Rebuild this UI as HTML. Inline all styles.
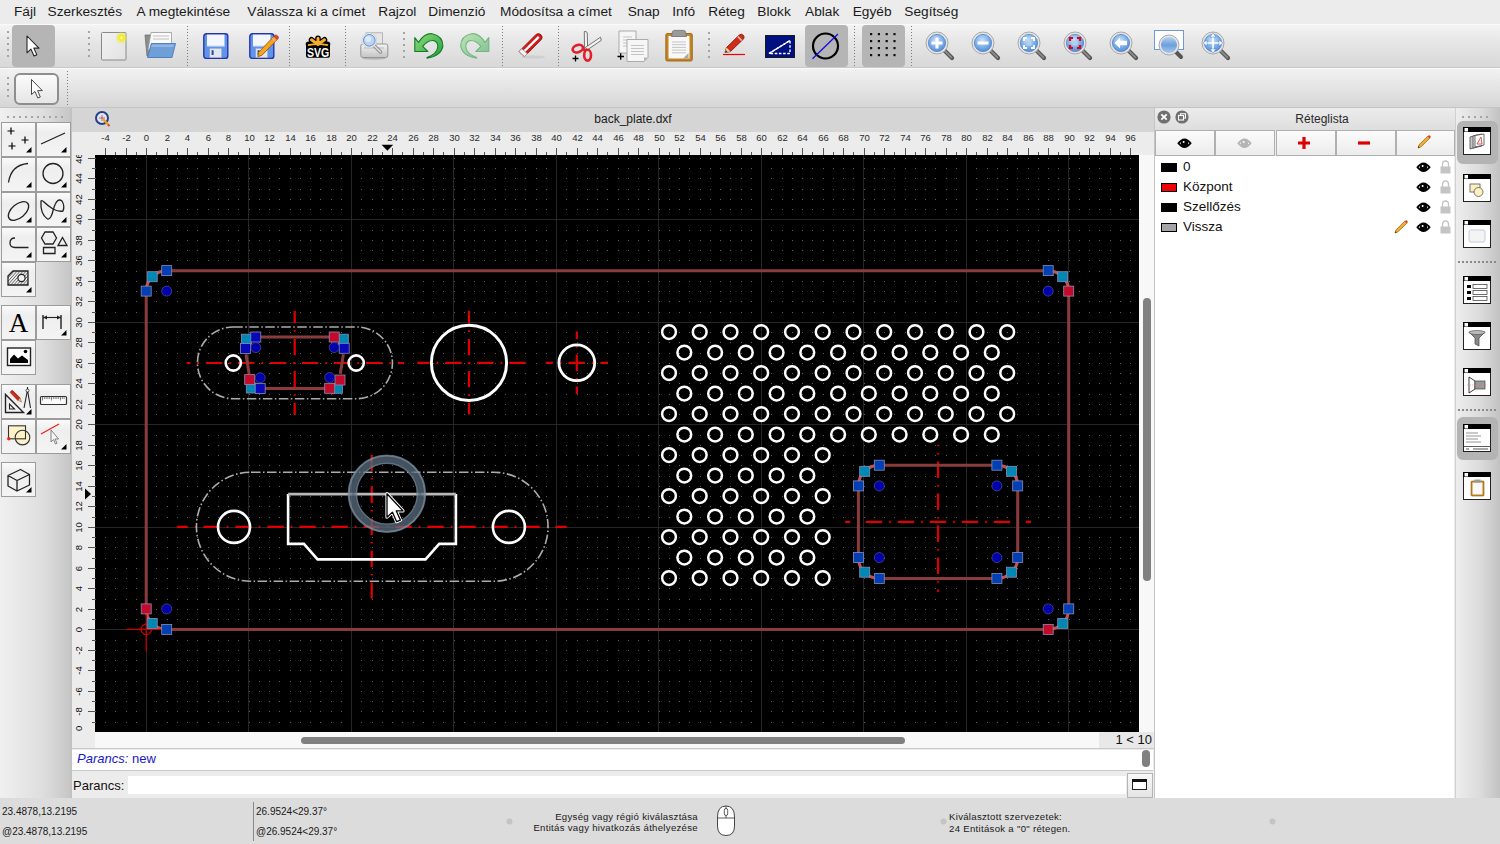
<!DOCTYPE html><html><head><meta charset="utf-8"><style>
html,body{margin:0;padding:0;width:1500px;height:844px;overflow:hidden;background:#ececec;font-family:"Liberation Sans", sans-serif;}
div{box-sizing:border-box}
.abs{position:absolute}
</style></head><body>
<div class="abs" style="left:0;top:0;width:1500px;height:24px;background:#ececec"></div>
<div style="position:absolute;top:4px;font-size:13.7px;line-height:16px;color:#1a1a1a;white-space:nowrap;left:14px;">Fájl</div>
<div style="position:absolute;top:4px;font-size:13.7px;line-height:16px;color:#1a1a1a;white-space:nowrap;left:47.5px;">Szerkesztés</div>
<div style="position:absolute;top:4px;font-size:13.7px;line-height:16px;color:#1a1a1a;white-space:nowrap;left:136.5px;">A megtekintése</div>
<div style="position:absolute;top:4px;font-size:13.7px;line-height:16px;color:#1a1a1a;white-space:nowrap;left:247.3px;">Válassza ki a címet</div>
<div style="position:absolute;top:4px;font-size:13.7px;line-height:16px;color:#1a1a1a;white-space:nowrap;left:378.3px;">Rajzol</div>
<div style="position:absolute;top:4px;font-size:13.7px;line-height:16px;color:#1a1a1a;white-space:nowrap;left:428.3px;">Dimenzió</div>
<div style="position:absolute;top:4px;font-size:13.7px;line-height:16px;color:#1a1a1a;white-space:nowrap;left:500px;">Módosítsa a címet</div>
<div style="position:absolute;top:4px;font-size:13.7px;line-height:16px;color:#1a1a1a;white-space:nowrap;left:627.7px;">Snap</div>
<div style="position:absolute;top:4px;font-size:13.7px;line-height:16px;color:#1a1a1a;white-space:nowrap;left:672.3px;">Infó</div>
<div style="position:absolute;top:4px;font-size:13.7px;line-height:16px;color:#1a1a1a;white-space:nowrap;left:708.3px;">Réteg</div>
<div style="position:absolute;top:4px;font-size:13.7px;line-height:16px;color:#1a1a1a;white-space:nowrap;left:757.3px;">Blokk</div>
<div style="position:absolute;top:4px;font-size:13.7px;line-height:16px;color:#1a1a1a;white-space:nowrap;left:805px;">Ablak</div>
<div style="position:absolute;top:4px;font-size:13.7px;line-height:16px;color:#1a1a1a;white-space:nowrap;left:852.7px;">Egyéb</div>
<div style="position:absolute;top:4px;font-size:13.7px;line-height:16px;color:#1a1a1a;white-space:nowrap;left:904.3px;">Segítség</div>
<div class="abs" style="left:0;top:24px;width:1500px;height:44px;background:linear-gradient(#f4f4f4,#e6e6e6 40%,#d8d8d8);border-top:1px solid #fafafa;border-bottom:1px solid #c8c8c8"></div>
<div class="abs" style="left:0;top:68px;width:1500px;height:40px;background:linear-gradient(#f2f2f2,#e4e4e4 50%,#d6d6d6);border-top:1px solid #fbfbfb;border-bottom:1px solid #c4c4c4"></div>
<svg style="position:absolute;left:7px;top:31px;overflow:visible" width="2" height="28" viewBox="0 0 2 28" ><rect x="0" y="0" width="2" height="2" fill="#a4a4a4"/><rect x="0" y="6" width="2" height="2" fill="#a4a4a4"/><rect x="0" y="12" width="2" height="2" fill="#a4a4a4"/><rect x="0" y="18" width="2" height="2" fill="#a4a4a4"/><rect x="0" y="24" width="2" height="2" fill="#a4a4a4"/></svg>
<div style="position:absolute;left:12px;top:25px;width:43px;height:42px;background:#b5b5b5;border-radius:4px"></div>
<svg style="position:absolute;left:27px;top:36px;overflow:visible" width="16" height="26" viewBox="0 0 16 26" ><g transform="scale(0.82)"><path d="M0 0V20.5L4.8 16L8.6 24.5L12 23L8.3 14.8H14.6Z" fill="#fff" stroke="#222" stroke-width="1.3" stroke-linejoin="round"/></g></svg>
<svg style="position:absolute;left:88px;top:31px;overflow:visible" width="2" height="28" viewBox="0 0 2 28" ><rect x="0" y="0" width="2" height="2" fill="#a4a4a4"/><rect x="0" y="6" width="2" height="2" fill="#a4a4a4"/><rect x="0" y="12" width="2" height="2" fill="#a4a4a4"/><rect x="0" y="18" width="2" height="2" fill="#a4a4a4"/><rect x="0" y="24" width="2" height="2" fill="#a4a4a4"/></svg>
<svg style="position:absolute;left:101px;top:32px;overflow:visible" width="26" height="29" viewBox="0 0 26 29" ><defs><linearGradient id="pg" x1="0" y1="0" x2="1" y2="1"><stop offset="0" stop-color="#f2f2f2"/><stop offset="1" stop-color="#e2e2e2"/></linearGradient><radialGradient id="glow"><stop offset="0" stop-color="#fff9b0"/><stop offset="0.35" stop-color="#f3ea2a"/><stop offset="1" stop-color="#f3ea2a" stop-opacity="0"/></radialGradient></defs><rect x="0.5" y="0.5" width="24.5" height="27.5" rx="1" fill="url(#pg)" stroke="#8a8a8a"/><circle cx="20.5" cy="5.8" r="6.5" fill="url(#glow)"/></svg>
<svg style="position:absolute;left:144px;top:32px;overflow:visible" width="33" height="27" viewBox="0 0 33 27" ><path d="M1 3H8L9 1H14V24H3Z" fill="#8c8c8c" stroke="#6e6e6e" stroke-width="0.8"/><path d="M7 0.5H27.5V18H4Z" fill="#fafafa" stroke="#9a9a9a" stroke-width="0.8"/><path d="M9 4H25M9 7H25" stroke="#bdbdbd" stroke-width="1.2"/><path d="M7.3 11.5H31.5L28 25.5H3.5Z" fill="#6f9fd8" stroke="#4a78b8" stroke-width="0.9"/><path d="M8 12.5H30L29.3 15H7.3Z" fill="#8fb6e6"/></svg>
<svg style="position:absolute;left:187px;top:26px;overflow:visible" width="1" height="41" viewBox="0 0 1 41" ><rect x="0" y="0" width="1" height="1" fill="#7c7c7c"/><rect x="0" y="3" width="1" height="1" fill="#7c7c7c"/><rect x="0" y="6" width="1" height="1" fill="#7c7c7c"/><rect x="0" y="9" width="1" height="1" fill="#7c7c7c"/><rect x="0" y="12" width="1" height="1" fill="#7c7c7c"/><rect x="0" y="15" width="1" height="1" fill="#7c7c7c"/><rect x="0" y="18" width="1" height="1" fill="#7c7c7c"/><rect x="0" y="21" width="1" height="1" fill="#7c7c7c"/><rect x="0" y="24" width="1" height="1" fill="#7c7c7c"/><rect x="0" y="27" width="1" height="1" fill="#7c7c7c"/><rect x="0" y="30" width="1" height="1" fill="#7c7c7c"/><rect x="0" y="33" width="1" height="1" fill="#7c7c7c"/><rect x="0" y="36" width="1" height="1" fill="#7c7c7c"/><rect x="0" y="39" width="1" height="1" fill="#7c7c7c"/></svg>
<svg style="position:absolute;left:203px;top:33px;overflow:visible" width="26" height="27" viewBox="0 0 26 27" ><rect x="0.8" y="0.8" width="24" height="24.6" rx="2.5" fill="#5f94ea" stroke="#2636a6" stroke-width="1.4"/><rect x="4" y="1.6" width="17.5" height="11.6" fill="#f3f6fc"/><path d="M4 13.2H21.5" stroke="#b8c8e8" stroke-width="1"/><rect x="6.8" y="15.4" width="11.8" height="9.2" fill="#e2e6ee" stroke="#9aa4bc" stroke-width="0.5"/><rect x="8.6" y="17.2" width="2" height="4.8" fill="#2a44b0"/></svg>
<svg style="position:absolute;left:249px;top:33px;overflow:visible" width="30" height="27" viewBox="0 0 30 27" ><rect x="0.8" y="0.8" width="24" height="24.6" rx="2.5" fill="#5f94ea" stroke="#2636a6" stroke-width="1.4"/><rect x="4" y="1.6" width="17.5" height="11.6" fill="#f3f6fc"/><path d="M4 13.2H21.5" stroke="#b8c8e8" stroke-width="1"/><rect x="6.8" y="15.4" width="11.8" height="9.2" fill="#e2e6ee" stroke="#9aa4bc" stroke-width="0.5"/><rect x="8.6" y="17.2" width="2" height="4.8" fill="#2a44b0"/><path d="M9.5 19.5L25 3.2L28.3 6.4L12.8 22.4L8.8 23.6Z" fill="#f6a520" stroke="#9a5a10" stroke-width="0.9" stroke-linejoin="round"/><path d="M23.2 5.2L26.4 8.4" stroke="#e8b0a0" stroke-width="1.2"/><path d="M25 3.2L28.3 6.4L29.5 5.1Q29.8 4 28.5 2.8Q27.3 1.7 26.3 2Z" fill="#e84040" stroke="#9a3010" stroke-width="0.6"/></svg>
<svg style="position:absolute;left:289px;top:26px;overflow:visible" width="1" height="41" viewBox="0 0 1 41" ><rect x="0" y="0" width="1" height="1" fill="#7c7c7c"/><rect x="0" y="3" width="1" height="1" fill="#7c7c7c"/><rect x="0" y="6" width="1" height="1" fill="#7c7c7c"/><rect x="0" y="9" width="1" height="1" fill="#7c7c7c"/><rect x="0" y="12" width="1" height="1" fill="#7c7c7c"/><rect x="0" y="15" width="1" height="1" fill="#7c7c7c"/><rect x="0" y="18" width="1" height="1" fill="#7c7c7c"/><rect x="0" y="21" width="1" height="1" fill="#7c7c7c"/><rect x="0" y="24" width="1" height="1" fill="#7c7c7c"/><rect x="0" y="27" width="1" height="1" fill="#7c7c7c"/><rect x="0" y="30" width="1" height="1" fill="#7c7c7c"/><rect x="0" y="33" width="1" height="1" fill="#7c7c7c"/><rect x="0" y="36" width="1" height="1" fill="#7c7c7c"/><rect x="0" y="39" width="1" height="1" fill="#7c7c7c"/></svg>
<svg style="position:absolute;left:305px;top:33px;overflow:visible" width="27" height="27" viewBox="0 0 27 27" ><g stroke="#000" stroke-width="5.6" stroke-linecap="round"><path d="M13 11.5V5.2M13 11.5L6.5 6.8M13 11.5L19.5 6.8M3.5 11.2H22.5"/></g><rect x="1" y="10.8" width="24" height="14" rx="2.6" fill="#000"/><g stroke="#f6ac2c" stroke-width="3" stroke-linecap="round"><path d="M13 11.5V5.2M13 11.5L6.5 6.8M13 11.5L19.5 6.8"/></g><path d="M3 12.2Q13 10 23 12.2" stroke="#f6ac2c" stroke-width="1.8" fill="none"/><text x="0" y="0" transform="translate(13 24) scale(0.78 1)" text-anchor="middle" font-family='"Liberation Sans", sans-serif' font-weight="bold" font-size="13.5" fill="#fff">SVG</text></svg>
<svg style="position:absolute;left:345px;top:26px;overflow:visible" width="1" height="41" viewBox="0 0 1 41" ><rect x="0" y="0" width="1" height="1" fill="#7c7c7c"/><rect x="0" y="3" width="1" height="1" fill="#7c7c7c"/><rect x="0" y="6" width="1" height="1" fill="#7c7c7c"/><rect x="0" y="9" width="1" height="1" fill="#7c7c7c"/><rect x="0" y="12" width="1" height="1" fill="#7c7c7c"/><rect x="0" y="15" width="1" height="1" fill="#7c7c7c"/><rect x="0" y="18" width="1" height="1" fill="#7c7c7c"/><rect x="0" y="21" width="1" height="1" fill="#7c7c7c"/><rect x="0" y="24" width="1" height="1" fill="#7c7c7c"/><rect x="0" y="27" width="1" height="1" fill="#7c7c7c"/><rect x="0" y="30" width="1" height="1" fill="#7c7c7c"/><rect x="0" y="33" width="1" height="1" fill="#7c7c7c"/><rect x="0" y="36" width="1" height="1" fill="#7c7c7c"/><rect x="0" y="39" width="1" height="1" fill="#7c7c7c"/></svg>
<svg style="position:absolute;left:360px;top:32px;overflow:visible" width="29" height="28" viewBox="0 0 29 28" ><defs><linearGradient id="prg" x1="0" y1="0" x2="0" y2="1"><stop offset="0" stop-color="#f4f4f4"/><stop offset="1" stop-color="#c4c4c4"/></linearGradient></defs><rect x="6" y="0.8" width="16.5" height="14" fill="#e6e6e6" stroke="#a8a8a8" stroke-width="0.8"/><rect x="0.8" y="12" width="27" height="13.5" rx="2" fill="url(#prg)" stroke="#8c8c8c" stroke-width="0.9"/><rect x="4" y="15" width="20" height="2" fill="#d0d0d0"/><ellipse cx="14" cy="26.5" rx="12" ry="1.2" fill="#9a9a9a" opacity="0.6"/><path d="M13.5 13L20.5 20" stroke="#909090" stroke-width="3.6" stroke-linecap="round"/><path d="M13.5 13L20.5 20" stroke="#e0e0e0" stroke-width="1.6" stroke-linecap="round"/><circle cx="9.3" cy="8.3" r="7.4" fill="#f0f0f0" stroke="#cfcfcf" stroke-width="0.8"/><circle cx="9.3" cy="8.3" r="5.8" fill="#bcd4f0" stroke="#5a8fd6" stroke-width="1"/><circle cx="8.3" cy="7" r="3" fill="#e4eefa" opacity="0.8"/></svg>
<svg style="position:absolute;left:403px;top:32px;overflow:visible" width="2" height="26" viewBox="0 0 2 26" ><rect x="0" y="0" width="2" height="2" fill="#a4a4a4"/><rect x="0" y="6" width="2" height="2" fill="#a4a4a4"/><rect x="0" y="12" width="2" height="2" fill="#a4a4a4"/><rect x="0" y="18" width="2" height="2" fill="#a4a4a4"/><rect x="0" y="24" width="2" height="2" fill="#a4a4a4"/></svg>
<svg style="position:absolute;left:414px;top:32px;overflow:visible" width="30" height="28" viewBox="0 0 30 28" ><defs><linearGradient id="ug" x1="0" y1="0" x2="1" y2="1"><stop offset="0" stop-color="#8edc74"/><stop offset="1" stop-color="#22a040"/></linearGradient></defs><path d="M0.8 5.6V19.5H13.8L8.7 14.4Q13.5 8.3 19 8.5Q24.2 9.5 23.8 15Q23 22 13 25.5Q12.5 26.3 14 26Q27.5 23.5 28.9 14Q29 4 18.1 1.7Q10.5 1 4.5 10.4Z" fill="url(#ug)" stroke="#137a2c" stroke-width="1.1" stroke-linejoin="round"/></svg>
<svg style="position:absolute;left:460px;top:32px;overflow:visible" width="30" height="28" viewBox="0 0 30 28" ><defs><linearGradient id="rg" x1="1" y1="0" x2="0" y2="1"><stop offset="0" stop-color="#c0e4b4"/><stop offset="1" stop-color="#7cc090"/></linearGradient></defs><g transform="translate(29.6 0) scale(-1 1)"><path d="M0.8 5.6V19.5H13.8L8.7 14.4Q13.5 8.3 19 8.5Q24.2 9.5 23.8 15Q23 22 13 25.5Q12.5 26.3 14 26Q27.5 23.5 28.9 14Q29 4 18.1 1.7Q10.5 1 4.5 10.4Z" fill="url(#rg)" stroke="#74b486" stroke-width="1.1" stroke-linejoin="round"/></g></svg>
<svg style="position:absolute;left:502px;top:26px;overflow:visible" width="1" height="41" viewBox="0 0 1 41" ><rect x="0" y="0" width="1" height="1" fill="#7c7c7c"/><rect x="0" y="3" width="1" height="1" fill="#7c7c7c"/><rect x="0" y="6" width="1" height="1" fill="#7c7c7c"/><rect x="0" y="9" width="1" height="1" fill="#7c7c7c"/><rect x="0" y="12" width="1" height="1" fill="#7c7c7c"/><rect x="0" y="15" width="1" height="1" fill="#7c7c7c"/><rect x="0" y="18" width="1" height="1" fill="#7c7c7c"/><rect x="0" y="21" width="1" height="1" fill="#7c7c7c"/><rect x="0" y="24" width="1" height="1" fill="#7c7c7c"/><rect x="0" y="27" width="1" height="1" fill="#7c7c7c"/><rect x="0" y="30" width="1" height="1" fill="#7c7c7c"/><rect x="0" y="33" width="1" height="1" fill="#7c7c7c"/><rect x="0" y="36" width="1" height="1" fill="#7c7c7c"/><rect x="0" y="39" width="1" height="1" fill="#7c7c7c"/></svg>
<svg style="position:absolute;left:516px;top:32px;overflow:visible" width="30" height="28" viewBox="0 0 30 28" ><ellipse cx="17" cy="25" rx="12" ry="1.6" fill="#c8c8c8" opacity="0.7"/><path d="M3 19.5L20 2.5Q22.5 0.5 25 2.8Q27.2 5.2 25.4 7.5L8.5 24.5Z" fill="#d01818" stroke="#8a1010" stroke-width="0.8"/><path d="M6 21.5L22.8 4.8" stroke="#fff" stroke-width="2.4"/><path d="M3 19.5L8.5 24.5L11.3 21.7L5.8 16.7Z" fill="#f4f4f4" stroke="#999" stroke-width="0.8"/></svg>
<svg style="position:absolute;left:558px;top:26px;overflow:visible" width="1" height="41" viewBox="0 0 1 41" ><rect x="0" y="0" width="1" height="1" fill="#7c7c7c"/><rect x="0" y="3" width="1" height="1" fill="#7c7c7c"/><rect x="0" y="6" width="1" height="1" fill="#7c7c7c"/><rect x="0" y="9" width="1" height="1" fill="#7c7c7c"/><rect x="0" y="12" width="1" height="1" fill="#7c7c7c"/><rect x="0" y="15" width="1" height="1" fill="#7c7c7c"/><rect x="0" y="18" width="1" height="1" fill="#7c7c7c"/><rect x="0" y="21" width="1" height="1" fill="#7c7c7c"/><rect x="0" y="24" width="1" height="1" fill="#7c7c7c"/><rect x="0" y="27" width="1" height="1" fill="#7c7c7c"/><rect x="0" y="30" width="1" height="1" fill="#7c7c7c"/><rect x="0" y="33" width="1" height="1" fill="#7c7c7c"/><rect x="0" y="36" width="1" height="1" fill="#7c7c7c"/><rect x="0" y="39" width="1" height="1" fill="#7c7c7c"/></svg>
<svg style="position:absolute;left:571px;top:30px;overflow:visible" width="31" height="32" viewBox="0 0 31 32" ><path d="M13.5 19L13.3 1.5Q15.8 1 16.3 3L16.6 19Z" fill="#f2f2f2" stroke="#555" stroke-width="0.8"/><path d="M14.3 17.5L29.5 7.2L30.3 10.4L16.6 19.6Z" fill="#f2f2f2" stroke="#555" stroke-width="0.8"/><ellipse cx="6.8" cy="18.6" rx="5.3" ry="3.6" transform="rotate(-20 6.8 18.6)" fill="none" stroke="#e0202a" stroke-width="2.6"/><ellipse cx="16.6" cy="25.2" rx="3.4" ry="5.4" fill="none" stroke="#e0202a" stroke-width="2.6"/><path d="M11 19.5L15 20.5" stroke="#e0202a" stroke-width="2.4"/><path d="M1.5 28.5H7.5M4.5 25.5V31.5" stroke="#000" stroke-width="1.3"/></svg>
<svg style="position:absolute;left:617px;top:30px;overflow:visible" width="32" height="32" viewBox="0 0 32 32" ><path d="M2 1H19V19L15 23H2Z" fill="#f6f6f6" stroke="#9a9a9a" stroke-width="0.8"/><path d="M19 19H15V23Z" fill="#b4b4b4"/><path d="M6 7H15" stroke="#c4c4c4" stroke-width="1"/><path d="M6 10H15" stroke="#c4c4c4" stroke-width="1"/><path d="M6 13H15" stroke="#c4c4c4" stroke-width="1"/><path d="M6 16H15" stroke="#c4c4c4" stroke-width="1"/><path d="M10 9.5H31V27.5L27 31.5H10Z" fill="#f6f6f6" stroke="#9a9a9a" stroke-width="0.8"/><path d="M31 27.5H27V31.5Z" fill="#b4b4b4"/><path d="M14 15.5H27" stroke="#c4c4c4" stroke-width="1"/><path d="M14 18.5H27" stroke="#c4c4c4" stroke-width="1"/><path d="M14 21.5H27" stroke="#c4c4c4" stroke-width="1"/><path d="M14 24.5H27" stroke="#c4c4c4" stroke-width="1"/><path d="M0.5 26.5H7M3.7 23.3V29.7" stroke="#000" stroke-width="1.3"/></svg>
<svg style="position:absolute;left:665px;top:30px;overflow:visible" width="28" height="32" viewBox="0 0 28 32" ><rect x="0.8" y="3.5" width="26.5" height="27.5" rx="1.5" fill="#c8841e" stroke="#8e5a10" stroke-width="0.8"/><rect x="3.5" y="6" width="21" height="22.5" fill="#f8f8f8"/><path d="M23.5 23V28.5H18Z" fill="#a8a8a8"/><path d="M7 12.0H21" stroke="#c4c4c4" stroke-width="1"/><path d="M7 14.7H21" stroke="#c4c4c4" stroke-width="1"/><path d="M7 17.4H21" stroke="#c4c4c4" stroke-width="1"/><path d="M7 20.1H21" stroke="#c4c4c4" stroke-width="1"/><path d="M7 22.8H21" stroke="#c4c4c4" stroke-width="1"/><path d="M7.5 1.6Q8 0.4 9.5 0.4H18.5Q20 0.4 20.5 1.6L21.5 6.5H6.5Z" fill="#9a9a9a" stroke="#6e6e6e" stroke-width="0.8"/></svg>
<svg style="position:absolute;left:708px;top:32px;overflow:visible" width="2" height="26" viewBox="0 0 2 26" ><rect x="0" y="0" width="2" height="2" fill="#a4a4a4"/><rect x="0" y="6" width="2" height="2" fill="#a4a4a4"/><rect x="0" y="12" width="2" height="2" fill="#a4a4a4"/><rect x="0" y="18" width="2" height="2" fill="#a4a4a4"/><rect x="0" y="24" width="2" height="2" fill="#a4a4a4"/></svg>
<svg style="position:absolute;left:722px;top:34px;overflow:visible" width="25" height="23" viewBox="0 0 25 23" ><path d="M1 20.5H23" stroke="#f00000" stroke-width="1.2"/><path d="M3 18.6L4.5 13.5L17.5 0.8Q19.6 -0.5 21.3 1.2Q22.8 2.9 21.6 4.9L8.5 17.5Z" fill="#d42a1a" stroke="#7a2a10" stroke-width="0.9" stroke-linejoin="round"/><path d="M15.8 2.6L19.8 6.6" stroke="#f0b0a8" stroke-width="1.6"/><path d="M3 18.6L4.5 13.5L8.5 17.5Z" fill="#f0d0a0"/><path d="M3 18.6L3.8 16.2L5.6 17.8Z" fill="#333"/></svg>
<svg style="position:absolute;left:765px;top:35px;overflow:visible" width="30" height="23" viewBox="0 0 30 23" ><rect x="0.5" y="0.5" width="29" height="22" fill="#001080" stroke="#1a1a1a" stroke-width="1"/><path d="M4 18.5L25 5.5V18.5Z" fill="none" stroke="#fff" stroke-width="1.4" stroke-dasharray="2.6 1.6"/><path d="M4 18.5L25 5.5" stroke="#fff" stroke-width="1.4"/></svg>
<div style="position:absolute;left:805px;top:25px;width:43px;height:42px;background:#b5b5b5;border-radius:4px"></div>
<svg style="position:absolute;left:810px;top:31px;overflow:visible" width="32" height="30" viewBox="0 0 32 30" ><circle cx="15.5" cy="15" r="12.5" fill="none" stroke="#000" stroke-width="2.2"/><path d="M2.5 27.8L28 3" stroke="#1010e0" stroke-width="1.3"/></svg>
<svg style="position:absolute;left:854px;top:26px;overflow:visible" width="1" height="41" viewBox="0 0 1 41" ><rect x="0" y="0" width="1" height="1" fill="#7c7c7c"/><rect x="0" y="3" width="1" height="1" fill="#7c7c7c"/><rect x="0" y="6" width="1" height="1" fill="#7c7c7c"/><rect x="0" y="9" width="1" height="1" fill="#7c7c7c"/><rect x="0" y="12" width="1" height="1" fill="#7c7c7c"/><rect x="0" y="15" width="1" height="1" fill="#7c7c7c"/><rect x="0" y="18" width="1" height="1" fill="#7c7c7c"/><rect x="0" y="21" width="1" height="1" fill="#7c7c7c"/><rect x="0" y="24" width="1" height="1" fill="#7c7c7c"/><rect x="0" y="27" width="1" height="1" fill="#7c7c7c"/><rect x="0" y="30" width="1" height="1" fill="#7c7c7c"/><rect x="0" y="33" width="1" height="1" fill="#7c7c7c"/><rect x="0" y="36" width="1" height="1" fill="#7c7c7c"/><rect x="0" y="39" width="1" height="1" fill="#7c7c7c"/></svg>
<div style="position:absolute;left:862px;top:25px;width:43px;height:42px;background:#b5b5b5;border-radius:4px"></div>
<svg style="position:absolute;left:870px;top:33px;overflow:visible" width="28" height="28" viewBox="0 0 28 28" ><rect x="0.0" y="0" width="2.2" height="2.2" fill="#111"/><rect x="0.0" y="7" width="2.2" height="2.2" fill="#111"/><rect x="0.0" y="14" width="2.2" height="2.2" fill="#111"/><rect x="0.0" y="21" width="2.2" height="2.2" fill="#111"/><rect x="7.8" y="0" width="2.2" height="2.2" fill="#111"/><rect x="7.8" y="7" width="2.2" height="2.2" fill="#111"/><rect x="7.8" y="14" width="2.2" height="2.2" fill="#111"/><rect x="7.8" y="21" width="2.2" height="2.2" fill="#111"/><rect x="15.6" y="0" width="2.2" height="2.2" fill="#111"/><rect x="15.6" y="7" width="2.2" height="2.2" fill="#111"/><rect x="15.6" y="14" width="2.2" height="2.2" fill="#111"/><rect x="15.6" y="21" width="2.2" height="2.2" fill="#111"/><rect x="23.4" y="0" width="2.2" height="2.2" fill="#111"/><rect x="23.4" y="7" width="2.2" height="2.2" fill="#111"/><rect x="23.4" y="14" width="2.2" height="2.2" fill="#111"/><rect x="23.4" y="21" width="2.2" height="2.2" fill="#111"/></svg>
<svg style="position:absolute;left:911px;top:26px;overflow:visible" width="1" height="41" viewBox="0 0 1 41" ><rect x="0" y="0" width="1" height="1" fill="#7c7c7c"/><rect x="0" y="3" width="1" height="1" fill="#7c7c7c"/><rect x="0" y="6" width="1" height="1" fill="#7c7c7c"/><rect x="0" y="9" width="1" height="1" fill="#7c7c7c"/><rect x="0" y="12" width="1" height="1" fill="#7c7c7c"/><rect x="0" y="15" width="1" height="1" fill="#7c7c7c"/><rect x="0" y="18" width="1" height="1" fill="#7c7c7c"/><rect x="0" y="21" width="1" height="1" fill="#7c7c7c"/><rect x="0" y="24" width="1" height="1" fill="#7c7c7c"/><rect x="0" y="27" width="1" height="1" fill="#7c7c7c"/><rect x="0" y="30" width="1" height="1" fill="#7c7c7c"/><rect x="0" y="33" width="1" height="1" fill="#7c7c7c"/><rect x="0" y="36" width="1" height="1" fill="#7c7c7c"/><rect x="0" y="39" width="1" height="1" fill="#7c7c7c"/></svg>
<svg style="position:absolute;left:925px;top:30.5px;overflow:visible" width="30" height="30" viewBox="0 0 30 30" ><defs><radialGradient id="lg" cx="0.45" cy="0.35" r="0.7"><stop offset="0" stop-color="#cfe3fa"/><stop offset="0.55" stop-color="#7fb0e8"/><stop offset="1" stop-color="#4a86d4"/></radialGradient></defs><path d="M19 19L27 27" stroke="#555" stroke-width="4.2" stroke-linecap="round"/><path d="M19.5 19.5L26.5 26.5" stroke="#8a8a8a" stroke-width="1.8" stroke-linecap="round"/><circle cx="12" cy="12" r="11" fill="#e4e4e4" stroke="#a8a8a8" stroke-width="1"/><circle cx="12" cy="12" r="8.6" fill="url(#lg)" stroke="#4f84c8" stroke-width="0.8"/><path d="M12 6.5V17.5M6.5 12H17.5" stroke="#fff" stroke-width="3"/></svg>
<svg style="position:absolute;left:971px;top:30.5px;overflow:visible" width="30" height="30" viewBox="0 0 30 30" ><defs><radialGradient id="lg" cx="0.45" cy="0.35" r="0.7"><stop offset="0" stop-color="#cfe3fa"/><stop offset="0.55" stop-color="#7fb0e8"/><stop offset="1" stop-color="#4a86d4"/></radialGradient></defs><path d="M19 19L27 27" stroke="#555" stroke-width="4.2" stroke-linecap="round"/><path d="M19.5 19.5L26.5 26.5" stroke="#8a8a8a" stroke-width="1.8" stroke-linecap="round"/><circle cx="12" cy="12" r="11" fill="#e4e4e4" stroke="#a8a8a8" stroke-width="1"/><circle cx="12" cy="12" r="8.6" fill="url(#lg)" stroke="#4f84c8" stroke-width="0.8"/><path d="M6.5 12H17.5" stroke="#fff" stroke-width="3"/></svg>
<svg style="position:absolute;left:1017px;top:30.5px;overflow:visible" width="30" height="30" viewBox="0 0 30 30" ><defs><radialGradient id="lg" cx="0.45" cy="0.35" r="0.7"><stop offset="0" stop-color="#cfe3fa"/><stop offset="0.55" stop-color="#7fb0e8"/><stop offset="1" stop-color="#4a86d4"/></radialGradient></defs><path d="M19 19L27 27" stroke="#555" stroke-width="4.2" stroke-linecap="round"/><path d="M19.5 19.5L26.5 26.5" stroke="#8a8a8a" stroke-width="1.8" stroke-linecap="round"/><circle cx="12" cy="12" r="11" fill="#e4e4e4" stroke="#a8a8a8" stroke-width="1"/><circle cx="12" cy="12" r="8.6" fill="url(#lg)" stroke="#4f84c8" stroke-width="0.8"/><path d="M7 10V7H10M14 7H17V10M17 14V17H14M10 17H7V14" stroke="#fff" stroke-width="1.8" fill="none"/><rect x="9.5" y="9.5" width="5" height="5" fill="#b0d0f0"/></svg>
<svg style="position:absolute;left:1063px;top:30.5px;overflow:visible" width="30" height="30" viewBox="0 0 30 30" ><defs><radialGradient id="lg" cx="0.45" cy="0.35" r="0.7"><stop offset="0" stop-color="#cfe3fa"/><stop offset="0.55" stop-color="#7fb0e8"/><stop offset="1" stop-color="#4a86d4"/></radialGradient></defs><path d="M19 19L27 27" stroke="#555" stroke-width="4.2" stroke-linecap="round"/><path d="M19.5 19.5L26.5 26.5" stroke="#8a8a8a" stroke-width="1.8" stroke-linecap="round"/><circle cx="12" cy="12" r="11" fill="#e4e4e4" stroke="#a8a8a8" stroke-width="1"/><circle cx="12" cy="12" r="8.6" fill="url(#lg)" stroke="#4f84c8" stroke-width="0.8"/><path d="M7 10V7H10M14 7H17V10M17 14V17H14M10 17H7V14" stroke="#e00010" stroke-width="2.2" fill="none"/><rect x="9.5" y="9.5" width="5" height="5" fill="#b0d0f0"/></svg>
<svg style="position:absolute;left:1109px;top:30.5px;overflow:visible" width="30" height="30" viewBox="0 0 30 30" ><defs><radialGradient id="lg" cx="0.45" cy="0.35" r="0.7"><stop offset="0" stop-color="#cfe3fa"/><stop offset="0.55" stop-color="#7fb0e8"/><stop offset="1" stop-color="#4a86d4"/></radialGradient></defs><path d="M19 19L27 27" stroke="#555" stroke-width="4.2" stroke-linecap="round"/><path d="M19.5 19.5L26.5 26.5" stroke="#8a8a8a" stroke-width="1.8" stroke-linecap="round"/><circle cx="12" cy="12" r="11" fill="#e4e4e4" stroke="#a8a8a8" stroke-width="1"/><circle cx="12" cy="12" r="8.6" fill="url(#lg)" stroke="#4f84c8" stroke-width="0.8"/><path d="M5.5 12L11 6.8V9.8H18V14.2H11V17.2Z" fill="#fff"/></svg>
<svg style="position:absolute;left:1154px;top:30px;overflow:visible" width="32" height="30" viewBox="0 0 32 30" ><rect x="0.5" y="0.5" width="29" height="19" fill="#fff" stroke="#6f9ad6" stroke-width="1"/><defs><linearGradient id="zw" x1="0" y1="0" x2="0" y2="1"><stop offset="0" stop-color="#b8d2f0"/><stop offset="0.5" stop-color="#6c9fdc"/><stop offset="1" stop-color="#a8c8ee"/></linearGradient></defs><path d="M20 20L27 27" stroke="#555" stroke-width="4" stroke-linecap="round"/><circle cx="15" cy="15" r="10" fill="#e6e6e6" stroke="#a8a8a8" stroke-width="1"/><circle cx="15" cy="15" r="8" fill="url(#zw)"/></svg>
<svg style="position:absolute;left:1201px;top:30.5px;overflow:visible" width="30" height="30" viewBox="0 0 30 30" ><defs><radialGradient id="lg" cx="0.45" cy="0.35" r="0.7"><stop offset="0" stop-color="#cfe3fa"/><stop offset="0.55" stop-color="#7fb0e8"/><stop offset="1" stop-color="#4a86d4"/></radialGradient></defs><path d="M19 19L27 27" stroke="#555" stroke-width="4.2" stroke-linecap="round"/><path d="M19.5 19.5L26.5 26.5" stroke="#8a8a8a" stroke-width="1.8" stroke-linecap="round"/><circle cx="12" cy="12" r="11" fill="#e4e4e4" stroke="#a8a8a8" stroke-width="1"/><circle cx="12" cy="12" r="8.6" fill="url(#lg)" stroke="#4f84c8" stroke-width="0.8"/><path d="M12 3V21M3 12H21" stroke="#fff" stroke-width="1.6"/><path d="M12 2L9 6H15ZM12 22L9 18H15ZM2 12L6 9V15ZM22 12L18 9V15Z" fill="#fff" stroke="#4a80d0" stroke-width="0.5"/></svg>
<svg style="position:absolute;left:7px;top:77px;overflow:visible" width="2" height="22" viewBox="0 0 2 22" ><rect x="0" y="0" width="2" height="2" fill="#a4a4a4"/><rect x="0" y="6" width="2" height="2" fill="#a4a4a4"/><rect x="0" y="12" width="2" height="2" fill="#a4a4a4"/><rect x="0" y="18" width="2" height="2" fill="#a4a4a4"/></svg>
<div style="position:absolute;left:14px;top:72.5px;width:45px;height:32.5px;border:2px solid #8e8e8e;border-radius:6px;background:linear-gradient(#fbfbfb,#e6e6e6)"></div>
<svg style="position:absolute;left:31px;top:79px;overflow:visible" width="14" height="21" viewBox="0 0 14 21" ><path d="M0.5 0.5V15.5L4 12.5L6.8 19L9.3 18L6.6 11.6H11.3Z" fill="#fff" stroke="#333" stroke-width="0.9" stroke-linejoin="round"/></svg>
<svg style="position:absolute;left:67px;top:71px;overflow:visible" width="1" height="35" viewBox="0 0 1 35" ><rect x="0" y="0" width="1" height="1" fill="#7c7c7c"/><rect x="0" y="3" width="1" height="1" fill="#7c7c7c"/><rect x="0" y="6" width="1" height="1" fill="#7c7c7c"/><rect x="0" y="9" width="1" height="1" fill="#7c7c7c"/><rect x="0" y="12" width="1" height="1" fill="#7c7c7c"/><rect x="0" y="15" width="1" height="1" fill="#7c7c7c"/><rect x="0" y="18" width="1" height="1" fill="#7c7c7c"/><rect x="0" y="21" width="1" height="1" fill="#7c7c7c"/><rect x="0" y="24" width="1" height="1" fill="#7c7c7c"/><rect x="0" y="27" width="1" height="1" fill="#7c7c7c"/><rect x="0" y="30" width="1" height="1" fill="#7c7c7c"/><rect x="0" y="33" width="1" height="1" fill="#7c7c7c"/></svg>
<div class="abs" style="left:0;top:108px;width:71px;height:690px;background:linear-gradient(90deg,#f0f0f0,#dedede 60%,#c6c6c6)"></div>
<div class="abs" style="left:70px;top:108px;width:2px;height:690px;background:#c2c2c2"></div>
<svg style="position:absolute;left:7px;top:116px;overflow:visible" width="60" height="2" viewBox="0 0 60 2" ><rect x="0" y="0" width="2" height="2" fill="#a4a4a4"/><rect x="6" y="0" width="2" height="2" fill="#a4a4a4"/><rect x="12" y="0" width="2" height="2" fill="#a4a4a4"/><rect x="18" y="0" width="2" height="2" fill="#a4a4a4"/><rect x="24" y="0" width="2" height="2" fill="#a4a4a4"/><rect x="30" y="0" width="2" height="2" fill="#a4a4a4"/><rect x="36" y="0" width="2" height="2" fill="#a4a4a4"/><rect x="42" y="0" width="2" height="2" fill="#a4a4a4"/><rect x="48" y="0" width="2" height="2" fill="#a4a4a4"/><rect x="54" y="0" width="2" height="2" fill="#a4a4a4"/></svg>
<div style="position:absolute;left:1px;top:122px;width:35px;height:35px;border:1.5px solid #9c9c9c;background:linear-gradient(#fafafa,#eeeeee 30%,#f4f4f4)"></div><svg style="position:absolute;left:1px;top:122px;overflow:visible" width="35" height="35" viewBox="0 0 35 35" ><path d="M6.5 9H13.5M10 5.5V12.5M20.5 18H27.5M24 14.5V21.5M7.5 24H14.5M11 20.5V27.5" stroke="#000" stroke-width="1.2"/><path d="M30.5 25V30.5H25Z" fill="#000"/></svg>
<div style="position:absolute;left:36px;top:122px;width:35px;height:35px;border:1.5px solid #9c9c9c;background:linear-gradient(#fafafa,#eeeeee 30%,#f4f4f4)"></div><svg style="position:absolute;left:36px;top:122px;overflow:visible" width="35" height="35" viewBox="0 0 35 35" ><path d="M5 22L29 11" fill="none" stroke="#222" stroke-width="1.3"/><path d="M30.5 25V30.5H25Z" fill="#000"/></svg>
<div style="position:absolute;left:1px;top:157px;width:35px;height:35px;border:1.5px solid #9c9c9c;background:linear-gradient(#fafafa,#eeeeee 30%,#f4f4f4)"></div><svg style="position:absolute;left:1px;top:157px;overflow:visible" width="35" height="35" viewBox="0 0 35 35" ><path d="M7.5 25.5Q10 8 27 6.5" fill="none" stroke="#222" stroke-width="1.3"/><path d="M30.5 25V30.5H25Z" fill="#000"/></svg>
<div style="position:absolute;left:36px;top:157px;width:35px;height:35px;border:1.5px solid #9c9c9c;background:linear-gradient(#fafafa,#eeeeee 30%,#f4f4f4)"></div><svg style="position:absolute;left:36px;top:157px;overflow:visible" width="35" height="35" viewBox="0 0 35 35" ><circle cx="17" cy="16.5" r="10" fill="none" stroke="#222" stroke-width="1.3"/><path d="M30.5 25V30.5H25Z" fill="#000"/></svg>
<div style="position:absolute;left:1px;top:192px;width:35px;height:35px;border:1.5px solid #9c9c9c;background:linear-gradient(#fafafa,#eeeeee 30%,#f4f4f4)"></div><svg style="position:absolute;left:1px;top:192px;overflow:visible" width="35" height="35" viewBox="0 0 35 35" ><ellipse cx="17.5" cy="19" rx="12" ry="6.8" transform="rotate(-40 17.5 19)" fill="none" stroke="#222" stroke-width="1.3"/><path d="M30.5 25V30.5H25Z" fill="#000"/></svg>
<div style="position:absolute;left:36px;top:192px;width:35px;height:35px;border:1.5px solid #9c9c9c;background:linear-gradient(#fafafa,#eeeeee 30%,#f4f4f4)"></div><svg style="position:absolute;left:36px;top:192px;overflow:visible" width="35" height="35" viewBox="0 0 35 35" ><path d="M5 9Q4 22 11.5 27Q15 28 17.5 17Q21 5 26 9Q29 14 27 19Q23 20 17 17Q11 13 8 10Q6 8 5 9Z" fill="none" stroke="#222" stroke-width="1.3"/><path d="M30.5 25V30.5H25Z" fill="#000"/></svg>
<div style="position:absolute;left:1px;top:227px;width:35px;height:35px;border:1.5px solid #9c9c9c;background:linear-gradient(#fafafa,#eeeeee 30%,#f4f4f4)"></div><svg style="position:absolute;left:1px;top:227px;overflow:visible" width="35" height="35" viewBox="0 0 35 35" ><path d="M14 11Q9 11 9 16Q9 20.5 14 20.5H27.5" fill="none" stroke="#222" stroke-width="1.3"/><path d="M30.5 25V30.5H25Z" fill="#000"/></svg>
<div style="position:absolute;left:36px;top:227px;width:35px;height:35px;border:1.5px solid #9c9c9c;background:linear-gradient(#fafafa,#eeeeee 30%,#f4f4f4)"></div><svg style="position:absolute;left:36px;top:227px;overflow:visible" width="35" height="35" viewBox="0 0 35 35" ><path d="M9 5H17L20.5 11L17 17H9L5.5 11Z M22 18.5L26.5 10.5L31 18.5Z M7.5 20.5H19V26.5H7.5Z" fill="none" stroke="#222" stroke-width="1.3"/><path d="M30.5 25V30.5H25Z" fill="#000"/></svg>
<div style="position:absolute;left:1px;top:262px;width:35px;height:35px;border:1.5px solid #9c9c9c;background:linear-gradient(#fafafa,#eeeeee 30%,#f4f4f4)"></div><svg style="position:absolute;left:1px;top:262px;overflow:visible" width="35" height="35" viewBox="0 0 35 35" ><defs><clipPath id="hc"><path d="M7 14L12 9H27V23H7Z"/></clipPath></defs><g clip-path="url(#hc)" stroke="#555" stroke-width="0.9"><path d="M-10 25L6 7"/><path d="M-7 25L9 7"/><path d="M-4 25L12 7"/><path d="M-1 25L15 7"/><path d="M2 25L18 7"/><path d="M5 25L21 7"/><path d="M8 25L24 7"/><path d="M11 25L27 7"/><path d="M14 25L30 7"/><path d="M17 25L33 7"/><path d="M20 25L36 7"/><path d="M23 25L39 7"/><path d="M26 25L42 7"/><path d="M29 25L45 7"/></g><path d="M7 14L12 9H27V23H7Z" fill="none" stroke="#222" stroke-width="1.3"/><circle cx="20.5" cy="16" r="3.6" fill="#f2f2f2" stroke="#222" stroke-width="1.2"/><path d="M30.5 25V30.5H25Z" fill="#000"/></svg>
<div style="position:absolute;left:1px;top:305px;width:35px;height:35px;border:1.5px solid #9c9c9c;background:linear-gradient(#fafafa,#eeeeee 30%,#f4f4f4)"></div><svg style="position:absolute;left:1px;top:305px;overflow:visible" width="35" height="35" viewBox="0 0 35 35" ><text x="17.5" y="27" text-anchor="middle" font-family='"Liberation Serif", serif' font-size="27" fill="#000">A</text></svg>
<div style="position:absolute;left:36px;top:305px;width:35px;height:35px;border:1.5px solid #9c9c9c;background:linear-gradient(#fafafa,#eeeeee 30%,#f4f4f4)"></div><svg style="position:absolute;left:36px;top:305px;overflow:visible" width="35" height="35" viewBox="0 0 35 35" ><path d="M7 10V24M25 10V24" stroke="#222" stroke-width="1.4"/><path d="M7 12.5H25" stroke="#222" stroke-width="1.1"/><path d="M7 12.5L11 10.5V14.5ZM25 12.5L21 10.5V14.5Z" fill="#222"/><path d="M30.5 25V30.5H25Z" fill="#000"/></svg>
<div style="position:absolute;left:1px;top:340px;width:35px;height:35px;border:1.5px solid #9c9c9c;background:linear-gradient(#fafafa,#eeeeee 30%,#f4f4f4)"></div><svg style="position:absolute;left:1px;top:340px;overflow:visible" width="35" height="35" viewBox="0 0 35 35" ><rect x="6.5" y="8" width="23" height="17.5" fill="#fff" stroke="#222" stroke-width="1.4"/><path d="M9 23V19L13 14.5L17 18.5L21 15.5L27 20V23Z" fill="#000"/><circle cx="24.5" cy="11.5" r="1.8" fill="#000"/></svg>
<div style="position:absolute;left:1px;top:383.5px;width:35px;height:35px;border:1.5px solid #9c9c9c;background:linear-gradient(#fafafa,#eeeeee 30%,#f4f4f4)"></div><svg style="position:absolute;left:1px;top:383.5px;overflow:visible" width="35" height="35" viewBox="0 0 35 35" ><path d="M4.5 10.5V28.5H22.5Z" fill="none" stroke="#222" stroke-width="1.4"/><path d="M8.5 20V25H13.5Z" fill="none" stroke="#222" stroke-width="1.1"/><path d="M9.3 8.6Q9.6 6.6 11.6 6.5L19.2 14.1L16.9 16.4Z" fill="#d42818" stroke="#7a2010" stroke-width="0.7"/><path d="M16.9 16.4L19.2 14.1L20.6 18Z" fill="#e8c090" stroke="#8a6030" stroke-width="0.5"/><path d="M26.5 3V6M26.5 6L23 24M26.5 6L29.5 24" fill="none" stroke="#222" stroke-width="1.1"/><circle cx="26.5" cy="6.5" r="1.5" fill="#fff" stroke="#222" stroke-width="0.8"/><path d="M30.5 25V30.5H25Z" fill="#000"/></svg>
<div style="position:absolute;left:36px;top:383.5px;width:35px;height:35px;border:1.5px solid #9c9c9c;background:linear-gradient(#fafafa,#eeeeee 30%,#f4f4f4)"></div><svg style="position:absolute;left:36px;top:383.5px;overflow:visible" width="35" height="35" viewBox="0 0 35 35" ><rect x="4.5" y="12.5" width="26" height="8" rx="1" fill="#fafafa" stroke="#333" stroke-width="1.2"/><path d="M6.5 12.5V16.5" stroke="#333" stroke-width="0.6"/><path d="M8.3 12.5V15" stroke="#333" stroke-width="0.6"/><path d="M10.1 12.5V15" stroke="#333" stroke-width="0.6"/><path d="M11.9 12.5V15" stroke="#333" stroke-width="0.6"/><path d="M13.7 12.5V15" stroke="#333" stroke-width="0.6"/><path d="M15.5 12.5V16.5" stroke="#333" stroke-width="0.6"/><path d="M17.3 12.5V15" stroke="#333" stroke-width="0.6"/><path d="M19.1 12.5V15" stroke="#333" stroke-width="0.6"/><path d="M20.9 12.5V15" stroke="#333" stroke-width="0.6"/><path d="M22.7 12.5V15" stroke="#333" stroke-width="0.6"/><path d="M24.5 12.5V16.5" stroke="#333" stroke-width="0.6"/><path d="M26.3 12.5V15" stroke="#333" stroke-width="0.6"/><path d="M28.1 12.5V15" stroke="#333" stroke-width="0.6"/></svg>
<div style="position:absolute;left:1px;top:418.5px;width:35px;height:35px;border:1.5px solid #9c9c9c;background:linear-gradient(#fafafa,#eeeeee 30%,#f4f4f4)"></div><svg style="position:absolute;left:1px;top:418.5px;overflow:visible" width="35" height="35" viewBox="0 0 35 35" ><rect x="7.5" y="6.8" width="17" height="13" fill="#fdf2c8"/><circle cx="21.5" cy="18.6" r="7.3" fill="#fdf2c8" stroke="#333" stroke-width="1.1"/><rect x="7.5" y="6.8" width="17" height="13" fill="none" stroke="#333" stroke-width="1.1"/><circle cx="7.8" cy="19.8" r="1.7" fill="#f02020"/></svg>
<div style="position:absolute;left:36px;top:418.5px;width:35px;height:35px;border:1.5px solid #9c9c9c;background:linear-gradient(#fafafa,#eeeeee 30%,#f4f4f4)"></div><svg style="position:absolute;left:36px;top:418.5px;overflow:visible" width="35" height="35" viewBox="0 0 35 35" ><path d="M5 15L23 5" stroke="#f02020" stroke-width="1.3"/><path d="M15 11V23L17.5 20.5L19.5 25L21 24.2L19 20H22.6Z" fill="#f4f4f4" stroke="#777" stroke-width="0.9" stroke-linejoin="round"/><path d="M30.5 25V30.5H25Z" fill="#000"/></svg>
<div style="position:absolute;left:1px;top:461.5px;width:35px;height:35px;border:1.5px solid #9c9c9c;background:linear-gradient(#fafafa,#eeeeee 30%,#f4f4f4)"></div><svg style="position:absolute;left:1px;top:461.5px;overflow:visible" width="35" height="35" viewBox="0 0 35 35" ><path d="M7 13.5L19.5 7.5L28.5 12.5V23L16 29L7 24Z M7 13.5L16 18.5L28.5 12.5 M16 18.5V29" fill="none" stroke="#222" stroke-width="1.3" stroke-linejoin="round"/><path d="M30.5 25V30.5H25Z" fill="#000"/></svg>
<div class="abs" style="left:72px;top:108px;width:1082px;height:24px;background:#d5d5d5"></div>
<div style="position:absolute;top:112px;font-size:12px;line-height:14px;color:#1a1a1a;white-space:nowrap;left:433px;width:400px;text-align:center;">back_plate.dxf</div>
<svg style="position:absolute;left:95px;top:111px;overflow:visible" width="16" height="16" viewBox="0 0 16 16" ><circle cx="7" cy="7" r="6" fill="#dfe6f2" stroke="#23408a" stroke-width="2"/><path d="M4 7H10M7 4V10" stroke="#c04040" stroke-width="0.8"/><path d="M8 8L13.5 14" stroke="#f0a020" stroke-width="2.2"/><path d="M13 13.5L14.5 15" stroke="#e04040" stroke-width="2"/></svg>
<div class="abs" style="left:72px;top:132px;width:1082px;height:23px;background:#ececec"></div>
<div class="abs" style="left:72px;top:155px;width:23px;height:593px;background:#ececec"></div>
<div class="abs" style="left:1139px;top:155px;width:15px;height:577px;background:#f8f8f8"></div>
<div class="abs" style="left:95px;top:732px;width:1059px;height:16px;background:#f8f8f8"></div>
<div class="abs" style="left:1099px;top:732px;width:55px;height:16px;background:#e8e8e8"></div>
<div style="position:absolute;top:731.5px;font-size:13px;line-height:16px;color:#111;white-space:nowrap;right:348px;">1 &lt; 10</div>
<div class="abs" style="left:301px;top:736.5px;width:604px;height:7.5px;background:#808080;border-radius:4px"></div>
<div class="abs" style="left:1143px;top:298px;width:8px;height:283px;background:#808080;border-radius:4px"></div>
<svg width="1044" height="577" viewBox="95 155 1044 577" style="position:absolute;left:95px;top:155px;display:block">
<rect x="95" y="155" width="1044" height="577" fill="#000"/>
<path d="M95 722h1v1h-1zM95 711h1v1h-1zM95 701h1v1h-1zM95 691h1v1h-1zM95 681h1v1h-1zM95 670h1v1h-1zM95 660h1v1h-1zM95 650h1v1h-1zM95 640h1v1h-1zM95 629h1v1h-1zM95 619h1v1h-1zM95 609h1v1h-1zM95 599h1v1h-1zM95 588h1v1h-1zM95 578h1v1h-1zM95 568h1v1h-1zM95 558h1v1h-1zM95 547h1v1h-1zM95 537h1v1h-1zM95 527h1v1h-1zM95 517h1v1h-1zM95 506h1v1h-1zM95 496h1v1h-1zM95 486h1v1h-1zM95 476h1v1h-1zM95 465h1v1h-1zM95 455h1v1h-1zM95 445h1v1h-1zM95 435h1v1h-1zM95 424h1v1h-1zM95 414h1v1h-1zM95 404h1v1h-1zM95 394h1v1h-1zM95 383h1v1h-1zM95 373h1v1h-1zM95 363h1v1h-1zM95 353h1v1h-1zM95 342h1v1h-1zM95 332h1v1h-1zM95 322h1v1h-1zM95 312h1v1h-1zM95 301h1v1h-1zM95 291h1v1h-1zM95 281h1v1h-1zM95 271h1v1h-1zM95 260h1v1h-1zM95 250h1v1h-1zM95 240h1v1h-1zM95 230h1v1h-1zM95 219h1v1h-1zM95 209h1v1h-1zM95 199h1v1h-1zM95 189h1v1h-1zM95 178h1v1h-1zM95 168h1v1h-1zM95 158h1v1h-1zM105 722h1v1h-1zM105 711h1v1h-1zM105 701h1v1h-1zM105 691h1v1h-1zM105 681h1v1h-1zM105 670h1v1h-1zM105 660h1v1h-1zM105 650h1v1h-1zM105 640h1v1h-1zM105 629h1v1h-1zM105 619h1v1h-1zM105 609h1v1h-1zM105 599h1v1h-1zM105 588h1v1h-1zM105 578h1v1h-1zM105 568h1v1h-1zM105 558h1v1h-1zM105 547h1v1h-1zM105 537h1v1h-1zM105 527h1v1h-1zM105 517h1v1h-1zM105 506h1v1h-1zM105 496h1v1h-1zM105 486h1v1h-1zM105 476h1v1h-1zM105 465h1v1h-1zM105 455h1v1h-1zM105 445h1v1h-1zM105 435h1v1h-1zM105 424h1v1h-1zM105 414h1v1h-1zM105 404h1v1h-1zM105 394h1v1h-1zM105 383h1v1h-1zM105 373h1v1h-1zM105 363h1v1h-1zM105 353h1v1h-1zM105 342h1v1h-1zM105 332h1v1h-1zM105 322h1v1h-1zM105 312h1v1h-1zM105 301h1v1h-1zM105 291h1v1h-1zM105 281h1v1h-1zM105 271h1v1h-1zM105 260h1v1h-1zM105 250h1v1h-1zM105 240h1v1h-1zM105 230h1v1h-1zM105 219h1v1h-1zM105 209h1v1h-1zM105 199h1v1h-1zM105 189h1v1h-1zM105 178h1v1h-1zM105 168h1v1h-1zM105 158h1v1h-1zM115 722h1v1h-1zM115 711h1v1h-1zM115 701h1v1h-1zM115 691h1v1h-1zM115 681h1v1h-1zM115 670h1v1h-1zM115 660h1v1h-1zM115 650h1v1h-1zM115 640h1v1h-1zM115 629h1v1h-1zM115 619h1v1h-1zM115 609h1v1h-1zM115 599h1v1h-1zM115 588h1v1h-1zM115 578h1v1h-1zM115 568h1v1h-1zM115 558h1v1h-1zM115 547h1v1h-1zM115 537h1v1h-1zM115 527h1v1h-1zM115 517h1v1h-1zM115 506h1v1h-1zM115 496h1v1h-1zM115 486h1v1h-1zM115 476h1v1h-1zM115 465h1v1h-1zM115 455h1v1h-1zM115 445h1v1h-1zM115 435h1v1h-1zM115 424h1v1h-1zM115 414h1v1h-1zM115 404h1v1h-1zM115 394h1v1h-1zM115 383h1v1h-1zM115 373h1v1h-1zM115 363h1v1h-1zM115 353h1v1h-1zM115 342h1v1h-1zM115 332h1v1h-1zM115 322h1v1h-1zM115 312h1v1h-1zM115 301h1v1h-1zM115 291h1v1h-1zM115 281h1v1h-1zM115 271h1v1h-1zM115 260h1v1h-1zM115 250h1v1h-1zM115 240h1v1h-1zM115 230h1v1h-1zM115 219h1v1h-1zM115 209h1v1h-1zM115 199h1v1h-1zM115 189h1v1h-1zM115 178h1v1h-1zM115 168h1v1h-1zM115 158h1v1h-1zM126 722h1v1h-1zM126 711h1v1h-1zM126 701h1v1h-1zM126 691h1v1h-1zM126 681h1v1h-1zM126 670h1v1h-1zM126 660h1v1h-1zM126 650h1v1h-1zM126 640h1v1h-1zM126 629h1v1h-1zM126 619h1v1h-1zM126 609h1v1h-1zM126 599h1v1h-1zM126 588h1v1h-1zM126 578h1v1h-1zM126 568h1v1h-1zM126 558h1v1h-1zM126 547h1v1h-1zM126 537h1v1h-1zM126 527h1v1h-1zM126 517h1v1h-1zM126 506h1v1h-1zM126 496h1v1h-1zM126 486h1v1h-1zM126 476h1v1h-1zM126 465h1v1h-1zM126 455h1v1h-1zM126 445h1v1h-1zM126 435h1v1h-1zM126 424h1v1h-1zM126 414h1v1h-1zM126 404h1v1h-1zM126 394h1v1h-1zM126 383h1v1h-1zM126 373h1v1h-1zM126 363h1v1h-1zM126 353h1v1h-1zM126 342h1v1h-1zM126 332h1v1h-1zM126 322h1v1h-1zM126 312h1v1h-1zM126 301h1v1h-1zM126 291h1v1h-1zM126 281h1v1h-1zM126 271h1v1h-1zM126 260h1v1h-1zM126 250h1v1h-1zM126 240h1v1h-1zM126 230h1v1h-1zM126 219h1v1h-1zM126 209h1v1h-1zM126 199h1v1h-1zM126 189h1v1h-1zM126 178h1v1h-1zM126 168h1v1h-1zM126 158h1v1h-1zM136 722h1v1h-1zM136 711h1v1h-1zM136 701h1v1h-1zM136 691h1v1h-1zM136 681h1v1h-1zM136 670h1v1h-1zM136 660h1v1h-1zM136 650h1v1h-1zM136 640h1v1h-1zM136 629h1v1h-1zM136 619h1v1h-1zM136 609h1v1h-1zM136 599h1v1h-1zM136 588h1v1h-1zM136 578h1v1h-1zM136 568h1v1h-1zM136 558h1v1h-1zM136 547h1v1h-1zM136 537h1v1h-1zM136 527h1v1h-1zM136 517h1v1h-1zM136 506h1v1h-1zM136 496h1v1h-1zM136 486h1v1h-1zM136 476h1v1h-1zM136 465h1v1h-1zM136 455h1v1h-1zM136 445h1v1h-1zM136 435h1v1h-1zM136 424h1v1h-1zM136 414h1v1h-1zM136 404h1v1h-1zM136 394h1v1h-1zM136 383h1v1h-1zM136 373h1v1h-1zM136 363h1v1h-1zM136 353h1v1h-1zM136 342h1v1h-1zM136 332h1v1h-1zM136 322h1v1h-1zM136 312h1v1h-1zM136 301h1v1h-1zM136 291h1v1h-1zM136 281h1v1h-1zM136 271h1v1h-1zM136 260h1v1h-1zM136 250h1v1h-1zM136 240h1v1h-1zM136 230h1v1h-1zM136 219h1v1h-1zM136 209h1v1h-1zM136 199h1v1h-1zM136 189h1v1h-1zM136 178h1v1h-1zM136 168h1v1h-1zM136 158h1v1h-1zM146 722h1v1h-1zM146 711h1v1h-1zM146 701h1v1h-1zM146 691h1v1h-1zM146 681h1v1h-1zM146 670h1v1h-1zM146 660h1v1h-1zM146 650h1v1h-1zM146 640h1v1h-1zM146 629h1v1h-1zM146 619h1v1h-1zM146 609h1v1h-1zM146 599h1v1h-1zM146 588h1v1h-1zM146 578h1v1h-1zM146 568h1v1h-1zM146 558h1v1h-1zM146 547h1v1h-1zM146 537h1v1h-1zM146 527h1v1h-1zM146 517h1v1h-1zM146 506h1v1h-1zM146 496h1v1h-1zM146 486h1v1h-1zM146 476h1v1h-1zM146 465h1v1h-1zM146 455h1v1h-1zM146 445h1v1h-1zM146 435h1v1h-1zM146 424h1v1h-1zM146 414h1v1h-1zM146 404h1v1h-1zM146 394h1v1h-1zM146 383h1v1h-1zM146 373h1v1h-1zM146 363h1v1h-1zM146 353h1v1h-1zM146 342h1v1h-1zM146 332h1v1h-1zM146 322h1v1h-1zM146 312h1v1h-1zM146 301h1v1h-1zM146 291h1v1h-1zM146 281h1v1h-1zM146 271h1v1h-1zM146 260h1v1h-1zM146 250h1v1h-1zM146 240h1v1h-1zM146 230h1v1h-1zM146 219h1v1h-1zM146 209h1v1h-1zM146 199h1v1h-1zM146 189h1v1h-1zM146 178h1v1h-1zM146 168h1v1h-1zM146 158h1v1h-1zM156 722h1v1h-1zM156 711h1v1h-1zM156 701h1v1h-1zM156 691h1v1h-1zM156 681h1v1h-1zM156 670h1v1h-1zM156 660h1v1h-1zM156 650h1v1h-1zM156 640h1v1h-1zM156 629h1v1h-1zM156 619h1v1h-1zM156 609h1v1h-1zM156 599h1v1h-1zM156 588h1v1h-1zM156 578h1v1h-1zM156 568h1v1h-1zM156 558h1v1h-1zM156 547h1v1h-1zM156 537h1v1h-1zM156 527h1v1h-1zM156 517h1v1h-1zM156 506h1v1h-1zM156 496h1v1h-1zM156 486h1v1h-1zM156 476h1v1h-1zM156 465h1v1h-1zM156 455h1v1h-1zM156 445h1v1h-1zM156 435h1v1h-1zM156 424h1v1h-1zM156 414h1v1h-1zM156 404h1v1h-1zM156 394h1v1h-1zM156 383h1v1h-1zM156 373h1v1h-1zM156 363h1v1h-1zM156 353h1v1h-1zM156 342h1v1h-1zM156 332h1v1h-1zM156 322h1v1h-1zM156 312h1v1h-1zM156 301h1v1h-1zM156 291h1v1h-1zM156 281h1v1h-1zM156 271h1v1h-1zM156 260h1v1h-1zM156 250h1v1h-1zM156 240h1v1h-1zM156 230h1v1h-1zM156 219h1v1h-1zM156 209h1v1h-1zM156 199h1v1h-1zM156 189h1v1h-1zM156 178h1v1h-1zM156 168h1v1h-1zM156 158h1v1h-1zM167 722h1v1h-1zM167 711h1v1h-1zM167 701h1v1h-1zM167 691h1v1h-1zM167 681h1v1h-1zM167 670h1v1h-1zM167 660h1v1h-1zM167 650h1v1h-1zM167 640h1v1h-1zM167 629h1v1h-1zM167 619h1v1h-1zM167 609h1v1h-1zM167 599h1v1h-1zM167 588h1v1h-1zM167 578h1v1h-1zM167 568h1v1h-1zM167 558h1v1h-1zM167 547h1v1h-1zM167 537h1v1h-1zM167 527h1v1h-1zM167 517h1v1h-1zM167 506h1v1h-1zM167 496h1v1h-1zM167 486h1v1h-1zM167 476h1v1h-1zM167 465h1v1h-1zM167 455h1v1h-1zM167 445h1v1h-1zM167 435h1v1h-1zM167 424h1v1h-1zM167 414h1v1h-1zM167 404h1v1h-1zM167 394h1v1h-1zM167 383h1v1h-1zM167 373h1v1h-1zM167 363h1v1h-1zM167 353h1v1h-1zM167 342h1v1h-1zM167 332h1v1h-1zM167 322h1v1h-1zM167 312h1v1h-1zM167 301h1v1h-1zM167 291h1v1h-1zM167 281h1v1h-1zM167 271h1v1h-1zM167 260h1v1h-1zM167 250h1v1h-1zM167 240h1v1h-1zM167 230h1v1h-1zM167 219h1v1h-1zM167 209h1v1h-1zM167 199h1v1h-1zM167 189h1v1h-1zM167 178h1v1h-1zM167 168h1v1h-1zM167 158h1v1h-1zM177 722h1v1h-1zM177 711h1v1h-1zM177 701h1v1h-1zM177 691h1v1h-1zM177 681h1v1h-1zM177 670h1v1h-1zM177 660h1v1h-1zM177 650h1v1h-1zM177 640h1v1h-1zM177 629h1v1h-1zM177 619h1v1h-1zM177 609h1v1h-1zM177 599h1v1h-1zM177 588h1v1h-1zM177 578h1v1h-1zM177 568h1v1h-1zM177 558h1v1h-1zM177 547h1v1h-1zM177 537h1v1h-1zM177 527h1v1h-1zM177 517h1v1h-1zM177 506h1v1h-1zM177 496h1v1h-1zM177 486h1v1h-1zM177 476h1v1h-1zM177 465h1v1h-1zM177 455h1v1h-1zM177 445h1v1h-1zM177 435h1v1h-1zM177 424h1v1h-1zM177 414h1v1h-1zM177 404h1v1h-1zM177 394h1v1h-1zM177 383h1v1h-1zM177 373h1v1h-1zM177 363h1v1h-1zM177 353h1v1h-1zM177 342h1v1h-1zM177 332h1v1h-1zM177 322h1v1h-1zM177 312h1v1h-1zM177 301h1v1h-1zM177 291h1v1h-1zM177 281h1v1h-1zM177 271h1v1h-1zM177 260h1v1h-1zM177 250h1v1h-1zM177 240h1v1h-1zM177 230h1v1h-1zM177 219h1v1h-1zM177 209h1v1h-1zM177 199h1v1h-1zM177 189h1v1h-1zM177 178h1v1h-1zM177 168h1v1h-1zM177 158h1v1h-1zM187 722h1v1h-1zM187 711h1v1h-1zM187 701h1v1h-1zM187 691h1v1h-1zM187 681h1v1h-1zM187 670h1v1h-1zM187 660h1v1h-1zM187 650h1v1h-1zM187 640h1v1h-1zM187 629h1v1h-1zM187 619h1v1h-1zM187 609h1v1h-1zM187 599h1v1h-1zM187 588h1v1h-1zM187 578h1v1h-1zM187 568h1v1h-1zM187 558h1v1h-1zM187 547h1v1h-1zM187 537h1v1h-1zM187 527h1v1h-1zM187 517h1v1h-1zM187 506h1v1h-1zM187 496h1v1h-1zM187 486h1v1h-1zM187 476h1v1h-1zM187 465h1v1h-1zM187 455h1v1h-1zM187 445h1v1h-1zM187 435h1v1h-1zM187 424h1v1h-1zM187 414h1v1h-1zM187 404h1v1h-1zM187 394h1v1h-1zM187 383h1v1h-1zM187 373h1v1h-1zM187 363h1v1h-1zM187 353h1v1h-1zM187 342h1v1h-1zM187 332h1v1h-1zM187 322h1v1h-1zM187 312h1v1h-1zM187 301h1v1h-1zM187 291h1v1h-1zM187 281h1v1h-1zM187 271h1v1h-1zM187 260h1v1h-1zM187 250h1v1h-1zM187 240h1v1h-1zM187 230h1v1h-1zM187 219h1v1h-1zM187 209h1v1h-1zM187 199h1v1h-1zM187 189h1v1h-1zM187 178h1v1h-1zM187 168h1v1h-1zM187 158h1v1h-1zM197 722h1v1h-1zM197 711h1v1h-1zM197 701h1v1h-1zM197 691h1v1h-1zM197 681h1v1h-1zM197 670h1v1h-1zM197 660h1v1h-1zM197 650h1v1h-1zM197 640h1v1h-1zM197 629h1v1h-1zM197 619h1v1h-1zM197 609h1v1h-1zM197 599h1v1h-1zM197 588h1v1h-1zM197 578h1v1h-1zM197 568h1v1h-1zM197 558h1v1h-1zM197 547h1v1h-1zM197 537h1v1h-1zM197 527h1v1h-1zM197 517h1v1h-1zM197 506h1v1h-1zM197 496h1v1h-1zM197 486h1v1h-1zM197 476h1v1h-1zM197 465h1v1h-1zM197 455h1v1h-1zM197 445h1v1h-1zM197 435h1v1h-1zM197 424h1v1h-1zM197 414h1v1h-1zM197 404h1v1h-1zM197 394h1v1h-1zM197 383h1v1h-1zM197 373h1v1h-1zM197 363h1v1h-1zM197 353h1v1h-1zM197 342h1v1h-1zM197 332h1v1h-1zM197 322h1v1h-1zM197 312h1v1h-1zM197 301h1v1h-1zM197 291h1v1h-1zM197 281h1v1h-1zM197 271h1v1h-1zM197 260h1v1h-1zM197 250h1v1h-1zM197 240h1v1h-1zM197 230h1v1h-1zM197 219h1v1h-1zM197 209h1v1h-1zM197 199h1v1h-1zM197 189h1v1h-1zM197 178h1v1h-1zM197 168h1v1h-1zM197 158h1v1h-1zM208 722h1v1h-1zM208 711h1v1h-1zM208 701h1v1h-1zM208 691h1v1h-1zM208 681h1v1h-1zM208 670h1v1h-1zM208 660h1v1h-1zM208 650h1v1h-1zM208 640h1v1h-1zM208 629h1v1h-1zM208 619h1v1h-1zM208 609h1v1h-1zM208 599h1v1h-1zM208 588h1v1h-1zM208 578h1v1h-1zM208 568h1v1h-1zM208 558h1v1h-1zM208 547h1v1h-1zM208 537h1v1h-1zM208 527h1v1h-1zM208 517h1v1h-1zM208 506h1v1h-1zM208 496h1v1h-1zM208 486h1v1h-1zM208 476h1v1h-1zM208 465h1v1h-1zM208 455h1v1h-1zM208 445h1v1h-1zM208 435h1v1h-1zM208 424h1v1h-1zM208 414h1v1h-1zM208 404h1v1h-1zM208 394h1v1h-1zM208 383h1v1h-1zM208 373h1v1h-1zM208 363h1v1h-1zM208 353h1v1h-1zM208 342h1v1h-1zM208 332h1v1h-1zM208 322h1v1h-1zM208 312h1v1h-1zM208 301h1v1h-1zM208 291h1v1h-1zM208 281h1v1h-1zM208 271h1v1h-1zM208 260h1v1h-1zM208 250h1v1h-1zM208 240h1v1h-1zM208 230h1v1h-1zM208 219h1v1h-1zM208 209h1v1h-1zM208 199h1v1h-1zM208 189h1v1h-1zM208 178h1v1h-1zM208 168h1v1h-1zM208 158h1v1h-1zM218 722h1v1h-1zM218 711h1v1h-1zM218 701h1v1h-1zM218 691h1v1h-1zM218 681h1v1h-1zM218 670h1v1h-1zM218 660h1v1h-1zM218 650h1v1h-1zM218 640h1v1h-1zM218 629h1v1h-1zM218 619h1v1h-1zM218 609h1v1h-1zM218 599h1v1h-1zM218 588h1v1h-1zM218 578h1v1h-1zM218 568h1v1h-1zM218 558h1v1h-1zM218 547h1v1h-1zM218 537h1v1h-1zM218 527h1v1h-1zM218 517h1v1h-1zM218 506h1v1h-1zM218 496h1v1h-1zM218 486h1v1h-1zM218 476h1v1h-1zM218 465h1v1h-1zM218 455h1v1h-1zM218 445h1v1h-1zM218 435h1v1h-1zM218 424h1v1h-1zM218 414h1v1h-1zM218 404h1v1h-1zM218 394h1v1h-1zM218 383h1v1h-1zM218 373h1v1h-1zM218 363h1v1h-1zM218 353h1v1h-1zM218 342h1v1h-1zM218 332h1v1h-1zM218 322h1v1h-1zM218 312h1v1h-1zM218 301h1v1h-1zM218 291h1v1h-1zM218 281h1v1h-1zM218 271h1v1h-1zM218 260h1v1h-1zM218 250h1v1h-1zM218 240h1v1h-1zM218 230h1v1h-1zM218 219h1v1h-1zM218 209h1v1h-1zM218 199h1v1h-1zM218 189h1v1h-1zM218 178h1v1h-1zM218 168h1v1h-1zM218 158h1v1h-1zM228 722h1v1h-1zM228 711h1v1h-1zM228 701h1v1h-1zM228 691h1v1h-1zM228 681h1v1h-1zM228 670h1v1h-1zM228 660h1v1h-1zM228 650h1v1h-1zM228 640h1v1h-1zM228 629h1v1h-1zM228 619h1v1h-1zM228 609h1v1h-1zM228 599h1v1h-1zM228 588h1v1h-1zM228 578h1v1h-1zM228 568h1v1h-1zM228 558h1v1h-1zM228 547h1v1h-1zM228 537h1v1h-1zM228 527h1v1h-1zM228 517h1v1h-1zM228 506h1v1h-1zM228 496h1v1h-1zM228 486h1v1h-1zM228 476h1v1h-1zM228 465h1v1h-1zM228 455h1v1h-1zM228 445h1v1h-1zM228 435h1v1h-1zM228 424h1v1h-1zM228 414h1v1h-1zM228 404h1v1h-1zM228 394h1v1h-1zM228 383h1v1h-1zM228 373h1v1h-1zM228 363h1v1h-1zM228 353h1v1h-1zM228 342h1v1h-1zM228 332h1v1h-1zM228 322h1v1h-1zM228 312h1v1h-1zM228 301h1v1h-1zM228 291h1v1h-1zM228 281h1v1h-1zM228 271h1v1h-1zM228 260h1v1h-1zM228 250h1v1h-1zM228 240h1v1h-1zM228 230h1v1h-1zM228 219h1v1h-1zM228 209h1v1h-1zM228 199h1v1h-1zM228 189h1v1h-1zM228 178h1v1h-1zM228 168h1v1h-1zM228 158h1v1h-1zM238 722h1v1h-1zM238 711h1v1h-1zM238 701h1v1h-1zM238 691h1v1h-1zM238 681h1v1h-1zM238 670h1v1h-1zM238 660h1v1h-1zM238 650h1v1h-1zM238 640h1v1h-1zM238 629h1v1h-1zM238 619h1v1h-1zM238 609h1v1h-1zM238 599h1v1h-1zM238 588h1v1h-1zM238 578h1v1h-1zM238 568h1v1h-1zM238 558h1v1h-1zM238 547h1v1h-1zM238 537h1v1h-1zM238 527h1v1h-1zM238 517h1v1h-1zM238 506h1v1h-1zM238 496h1v1h-1zM238 486h1v1h-1zM238 476h1v1h-1zM238 465h1v1h-1zM238 455h1v1h-1zM238 445h1v1h-1zM238 435h1v1h-1zM238 424h1v1h-1zM238 414h1v1h-1zM238 404h1v1h-1zM238 394h1v1h-1zM238 383h1v1h-1zM238 373h1v1h-1zM238 363h1v1h-1zM238 353h1v1h-1zM238 342h1v1h-1zM238 332h1v1h-1zM238 322h1v1h-1zM238 312h1v1h-1zM238 301h1v1h-1zM238 291h1v1h-1zM238 281h1v1h-1zM238 271h1v1h-1zM238 260h1v1h-1zM238 250h1v1h-1zM238 240h1v1h-1zM238 230h1v1h-1zM238 219h1v1h-1zM238 209h1v1h-1zM238 199h1v1h-1zM238 189h1v1h-1zM238 178h1v1h-1zM238 168h1v1h-1zM238 158h1v1h-1zM249 722h1v1h-1zM249 711h1v1h-1zM249 701h1v1h-1zM249 691h1v1h-1zM249 681h1v1h-1zM249 670h1v1h-1zM249 660h1v1h-1zM249 650h1v1h-1zM249 640h1v1h-1zM249 629h1v1h-1zM249 619h1v1h-1zM249 609h1v1h-1zM249 599h1v1h-1zM249 588h1v1h-1zM249 578h1v1h-1zM249 568h1v1h-1zM249 558h1v1h-1zM249 547h1v1h-1zM249 537h1v1h-1zM249 527h1v1h-1zM249 517h1v1h-1zM249 506h1v1h-1zM249 496h1v1h-1zM249 486h1v1h-1zM249 476h1v1h-1zM249 465h1v1h-1zM249 455h1v1h-1zM249 445h1v1h-1zM249 435h1v1h-1zM249 424h1v1h-1zM249 414h1v1h-1zM249 404h1v1h-1zM249 394h1v1h-1zM249 383h1v1h-1zM249 373h1v1h-1zM249 363h1v1h-1zM249 353h1v1h-1zM249 342h1v1h-1zM249 332h1v1h-1zM249 322h1v1h-1zM249 312h1v1h-1zM249 301h1v1h-1zM249 291h1v1h-1zM249 281h1v1h-1zM249 271h1v1h-1zM249 260h1v1h-1zM249 250h1v1h-1zM249 240h1v1h-1zM249 230h1v1h-1zM249 219h1v1h-1zM249 209h1v1h-1zM249 199h1v1h-1zM249 189h1v1h-1zM249 178h1v1h-1zM249 168h1v1h-1zM249 158h1v1h-1zM259 722h1v1h-1zM259 711h1v1h-1zM259 701h1v1h-1zM259 691h1v1h-1zM259 681h1v1h-1zM259 670h1v1h-1zM259 660h1v1h-1zM259 650h1v1h-1zM259 640h1v1h-1zM259 629h1v1h-1zM259 619h1v1h-1zM259 609h1v1h-1zM259 599h1v1h-1zM259 588h1v1h-1zM259 578h1v1h-1zM259 568h1v1h-1zM259 558h1v1h-1zM259 547h1v1h-1zM259 537h1v1h-1zM259 527h1v1h-1zM259 517h1v1h-1zM259 506h1v1h-1zM259 496h1v1h-1zM259 486h1v1h-1zM259 476h1v1h-1zM259 465h1v1h-1zM259 455h1v1h-1zM259 445h1v1h-1zM259 435h1v1h-1zM259 424h1v1h-1zM259 414h1v1h-1zM259 404h1v1h-1zM259 394h1v1h-1zM259 383h1v1h-1zM259 373h1v1h-1zM259 363h1v1h-1zM259 353h1v1h-1zM259 342h1v1h-1zM259 332h1v1h-1zM259 322h1v1h-1zM259 312h1v1h-1zM259 301h1v1h-1zM259 291h1v1h-1zM259 281h1v1h-1zM259 271h1v1h-1zM259 260h1v1h-1zM259 250h1v1h-1zM259 240h1v1h-1zM259 230h1v1h-1zM259 219h1v1h-1zM259 209h1v1h-1zM259 199h1v1h-1zM259 189h1v1h-1zM259 178h1v1h-1zM259 168h1v1h-1zM259 158h1v1h-1zM269 722h1v1h-1zM269 711h1v1h-1zM269 701h1v1h-1zM269 691h1v1h-1zM269 681h1v1h-1zM269 670h1v1h-1zM269 660h1v1h-1zM269 650h1v1h-1zM269 640h1v1h-1zM269 629h1v1h-1zM269 619h1v1h-1zM269 609h1v1h-1zM269 599h1v1h-1zM269 588h1v1h-1zM269 578h1v1h-1zM269 568h1v1h-1zM269 558h1v1h-1zM269 547h1v1h-1zM269 537h1v1h-1zM269 527h1v1h-1zM269 517h1v1h-1zM269 506h1v1h-1zM269 496h1v1h-1zM269 486h1v1h-1zM269 476h1v1h-1zM269 465h1v1h-1zM269 455h1v1h-1zM269 445h1v1h-1zM269 435h1v1h-1zM269 424h1v1h-1zM269 414h1v1h-1zM269 404h1v1h-1zM269 394h1v1h-1zM269 383h1v1h-1zM269 373h1v1h-1zM269 363h1v1h-1zM269 353h1v1h-1zM269 342h1v1h-1zM269 332h1v1h-1zM269 322h1v1h-1zM269 312h1v1h-1zM269 301h1v1h-1zM269 291h1v1h-1zM269 281h1v1h-1zM269 271h1v1h-1zM269 260h1v1h-1zM269 250h1v1h-1zM269 240h1v1h-1zM269 230h1v1h-1zM269 219h1v1h-1zM269 209h1v1h-1zM269 199h1v1h-1zM269 189h1v1h-1zM269 178h1v1h-1zM269 168h1v1h-1zM269 158h1v1h-1zM279 722h1v1h-1zM279 711h1v1h-1zM279 701h1v1h-1zM279 691h1v1h-1zM279 681h1v1h-1zM279 670h1v1h-1zM279 660h1v1h-1zM279 650h1v1h-1zM279 640h1v1h-1zM279 629h1v1h-1zM279 619h1v1h-1zM279 609h1v1h-1zM279 599h1v1h-1zM279 588h1v1h-1zM279 578h1v1h-1zM279 568h1v1h-1zM279 558h1v1h-1zM279 547h1v1h-1zM279 537h1v1h-1zM279 527h1v1h-1zM279 517h1v1h-1zM279 506h1v1h-1zM279 496h1v1h-1zM279 486h1v1h-1zM279 476h1v1h-1zM279 465h1v1h-1zM279 455h1v1h-1zM279 445h1v1h-1zM279 435h1v1h-1zM279 424h1v1h-1zM279 414h1v1h-1zM279 404h1v1h-1zM279 394h1v1h-1zM279 383h1v1h-1zM279 373h1v1h-1zM279 363h1v1h-1zM279 353h1v1h-1zM279 342h1v1h-1zM279 332h1v1h-1zM279 322h1v1h-1zM279 312h1v1h-1zM279 301h1v1h-1zM279 291h1v1h-1zM279 281h1v1h-1zM279 271h1v1h-1zM279 260h1v1h-1zM279 250h1v1h-1zM279 240h1v1h-1zM279 230h1v1h-1zM279 219h1v1h-1zM279 209h1v1h-1zM279 199h1v1h-1zM279 189h1v1h-1zM279 178h1v1h-1zM279 168h1v1h-1zM279 158h1v1h-1zM290 722h1v1h-1zM290 711h1v1h-1zM290 701h1v1h-1zM290 691h1v1h-1zM290 681h1v1h-1zM290 670h1v1h-1zM290 660h1v1h-1zM290 650h1v1h-1zM290 640h1v1h-1zM290 629h1v1h-1zM290 619h1v1h-1zM290 609h1v1h-1zM290 599h1v1h-1zM290 588h1v1h-1zM290 578h1v1h-1zM290 568h1v1h-1zM290 558h1v1h-1zM290 547h1v1h-1zM290 537h1v1h-1zM290 527h1v1h-1zM290 517h1v1h-1zM290 506h1v1h-1zM290 496h1v1h-1zM290 486h1v1h-1zM290 476h1v1h-1zM290 465h1v1h-1zM290 455h1v1h-1zM290 445h1v1h-1zM290 435h1v1h-1zM290 424h1v1h-1zM290 414h1v1h-1zM290 404h1v1h-1zM290 394h1v1h-1zM290 383h1v1h-1zM290 373h1v1h-1zM290 363h1v1h-1zM290 353h1v1h-1zM290 342h1v1h-1zM290 332h1v1h-1zM290 322h1v1h-1zM290 312h1v1h-1zM290 301h1v1h-1zM290 291h1v1h-1zM290 281h1v1h-1zM290 271h1v1h-1zM290 260h1v1h-1zM290 250h1v1h-1zM290 240h1v1h-1zM290 230h1v1h-1zM290 219h1v1h-1zM290 209h1v1h-1zM290 199h1v1h-1zM290 189h1v1h-1zM290 178h1v1h-1zM290 168h1v1h-1zM290 158h1v1h-1zM300 722h1v1h-1zM300 711h1v1h-1zM300 701h1v1h-1zM300 691h1v1h-1zM300 681h1v1h-1zM300 670h1v1h-1zM300 660h1v1h-1zM300 650h1v1h-1zM300 640h1v1h-1zM300 629h1v1h-1zM300 619h1v1h-1zM300 609h1v1h-1zM300 599h1v1h-1zM300 588h1v1h-1zM300 578h1v1h-1zM300 568h1v1h-1zM300 558h1v1h-1zM300 547h1v1h-1zM300 537h1v1h-1zM300 527h1v1h-1zM300 517h1v1h-1zM300 506h1v1h-1zM300 496h1v1h-1zM300 486h1v1h-1zM300 476h1v1h-1zM300 465h1v1h-1zM300 455h1v1h-1zM300 445h1v1h-1zM300 435h1v1h-1zM300 424h1v1h-1zM300 414h1v1h-1zM300 404h1v1h-1zM300 394h1v1h-1zM300 383h1v1h-1zM300 373h1v1h-1zM300 363h1v1h-1zM300 353h1v1h-1zM300 342h1v1h-1zM300 332h1v1h-1zM300 322h1v1h-1zM300 312h1v1h-1zM300 301h1v1h-1zM300 291h1v1h-1zM300 281h1v1h-1zM300 271h1v1h-1zM300 260h1v1h-1zM300 250h1v1h-1zM300 240h1v1h-1zM300 230h1v1h-1zM300 219h1v1h-1zM300 209h1v1h-1zM300 199h1v1h-1zM300 189h1v1h-1zM300 178h1v1h-1zM300 168h1v1h-1zM300 158h1v1h-1zM310 722h1v1h-1zM310 711h1v1h-1zM310 701h1v1h-1zM310 691h1v1h-1zM310 681h1v1h-1zM310 670h1v1h-1zM310 660h1v1h-1zM310 650h1v1h-1zM310 640h1v1h-1zM310 629h1v1h-1zM310 619h1v1h-1zM310 609h1v1h-1zM310 599h1v1h-1zM310 588h1v1h-1zM310 578h1v1h-1zM310 568h1v1h-1zM310 558h1v1h-1zM310 547h1v1h-1zM310 537h1v1h-1zM310 527h1v1h-1zM310 517h1v1h-1zM310 506h1v1h-1zM310 496h1v1h-1zM310 486h1v1h-1zM310 476h1v1h-1zM310 465h1v1h-1zM310 455h1v1h-1zM310 445h1v1h-1zM310 435h1v1h-1zM310 424h1v1h-1zM310 414h1v1h-1zM310 404h1v1h-1zM310 394h1v1h-1zM310 383h1v1h-1zM310 373h1v1h-1zM310 363h1v1h-1zM310 353h1v1h-1zM310 342h1v1h-1zM310 332h1v1h-1zM310 322h1v1h-1zM310 312h1v1h-1zM310 301h1v1h-1zM310 291h1v1h-1zM310 281h1v1h-1zM310 271h1v1h-1zM310 260h1v1h-1zM310 250h1v1h-1zM310 240h1v1h-1zM310 230h1v1h-1zM310 219h1v1h-1zM310 209h1v1h-1zM310 199h1v1h-1zM310 189h1v1h-1zM310 178h1v1h-1zM310 168h1v1h-1zM310 158h1v1h-1zM320 722h1v1h-1zM320 711h1v1h-1zM320 701h1v1h-1zM320 691h1v1h-1zM320 681h1v1h-1zM320 670h1v1h-1zM320 660h1v1h-1zM320 650h1v1h-1zM320 640h1v1h-1zM320 629h1v1h-1zM320 619h1v1h-1zM320 609h1v1h-1zM320 599h1v1h-1zM320 588h1v1h-1zM320 578h1v1h-1zM320 568h1v1h-1zM320 558h1v1h-1zM320 547h1v1h-1zM320 537h1v1h-1zM320 527h1v1h-1zM320 517h1v1h-1zM320 506h1v1h-1zM320 496h1v1h-1zM320 486h1v1h-1zM320 476h1v1h-1zM320 465h1v1h-1zM320 455h1v1h-1zM320 445h1v1h-1zM320 435h1v1h-1zM320 424h1v1h-1zM320 414h1v1h-1zM320 404h1v1h-1zM320 394h1v1h-1zM320 383h1v1h-1zM320 373h1v1h-1zM320 363h1v1h-1zM320 353h1v1h-1zM320 342h1v1h-1zM320 332h1v1h-1zM320 322h1v1h-1zM320 312h1v1h-1zM320 301h1v1h-1zM320 291h1v1h-1zM320 281h1v1h-1zM320 271h1v1h-1zM320 260h1v1h-1zM320 250h1v1h-1zM320 240h1v1h-1zM320 230h1v1h-1zM320 219h1v1h-1zM320 209h1v1h-1zM320 199h1v1h-1zM320 189h1v1h-1zM320 178h1v1h-1zM320 168h1v1h-1zM320 158h1v1h-1zM331 722h1v1h-1zM331 711h1v1h-1zM331 701h1v1h-1zM331 691h1v1h-1zM331 681h1v1h-1zM331 670h1v1h-1zM331 660h1v1h-1zM331 650h1v1h-1zM331 640h1v1h-1zM331 629h1v1h-1zM331 619h1v1h-1zM331 609h1v1h-1zM331 599h1v1h-1zM331 588h1v1h-1zM331 578h1v1h-1zM331 568h1v1h-1zM331 558h1v1h-1zM331 547h1v1h-1zM331 537h1v1h-1zM331 527h1v1h-1zM331 517h1v1h-1zM331 506h1v1h-1zM331 496h1v1h-1zM331 486h1v1h-1zM331 476h1v1h-1zM331 465h1v1h-1zM331 455h1v1h-1zM331 445h1v1h-1zM331 435h1v1h-1zM331 424h1v1h-1zM331 414h1v1h-1zM331 404h1v1h-1zM331 394h1v1h-1zM331 383h1v1h-1zM331 373h1v1h-1zM331 363h1v1h-1zM331 353h1v1h-1zM331 342h1v1h-1zM331 332h1v1h-1zM331 322h1v1h-1zM331 312h1v1h-1zM331 301h1v1h-1zM331 291h1v1h-1zM331 281h1v1h-1zM331 271h1v1h-1zM331 260h1v1h-1zM331 250h1v1h-1zM331 240h1v1h-1zM331 230h1v1h-1zM331 219h1v1h-1zM331 209h1v1h-1zM331 199h1v1h-1zM331 189h1v1h-1zM331 178h1v1h-1zM331 168h1v1h-1zM331 158h1v1h-1zM341 722h1v1h-1zM341 711h1v1h-1zM341 701h1v1h-1zM341 691h1v1h-1zM341 681h1v1h-1zM341 670h1v1h-1zM341 660h1v1h-1zM341 650h1v1h-1zM341 640h1v1h-1zM341 629h1v1h-1zM341 619h1v1h-1zM341 609h1v1h-1zM341 599h1v1h-1zM341 588h1v1h-1zM341 578h1v1h-1zM341 568h1v1h-1zM341 558h1v1h-1zM341 547h1v1h-1zM341 537h1v1h-1zM341 527h1v1h-1zM341 517h1v1h-1zM341 506h1v1h-1zM341 496h1v1h-1zM341 486h1v1h-1zM341 476h1v1h-1zM341 465h1v1h-1zM341 455h1v1h-1zM341 445h1v1h-1zM341 435h1v1h-1zM341 424h1v1h-1zM341 414h1v1h-1zM341 404h1v1h-1zM341 394h1v1h-1zM341 383h1v1h-1zM341 373h1v1h-1zM341 363h1v1h-1zM341 353h1v1h-1zM341 342h1v1h-1zM341 332h1v1h-1zM341 322h1v1h-1zM341 312h1v1h-1zM341 301h1v1h-1zM341 291h1v1h-1zM341 281h1v1h-1zM341 271h1v1h-1zM341 260h1v1h-1zM341 250h1v1h-1zM341 240h1v1h-1zM341 230h1v1h-1zM341 219h1v1h-1zM341 209h1v1h-1zM341 199h1v1h-1zM341 189h1v1h-1zM341 178h1v1h-1zM341 168h1v1h-1zM341 158h1v1h-1zM351 722h1v1h-1zM351 711h1v1h-1zM351 701h1v1h-1zM351 691h1v1h-1zM351 681h1v1h-1zM351 670h1v1h-1zM351 660h1v1h-1zM351 650h1v1h-1zM351 640h1v1h-1zM351 629h1v1h-1zM351 619h1v1h-1zM351 609h1v1h-1zM351 599h1v1h-1zM351 588h1v1h-1zM351 578h1v1h-1zM351 568h1v1h-1zM351 558h1v1h-1zM351 547h1v1h-1zM351 537h1v1h-1zM351 527h1v1h-1zM351 517h1v1h-1zM351 506h1v1h-1zM351 496h1v1h-1zM351 486h1v1h-1zM351 476h1v1h-1zM351 465h1v1h-1zM351 455h1v1h-1zM351 445h1v1h-1zM351 435h1v1h-1zM351 424h1v1h-1zM351 414h1v1h-1zM351 404h1v1h-1zM351 394h1v1h-1zM351 383h1v1h-1zM351 373h1v1h-1zM351 363h1v1h-1zM351 353h1v1h-1zM351 342h1v1h-1zM351 332h1v1h-1zM351 322h1v1h-1zM351 312h1v1h-1zM351 301h1v1h-1zM351 291h1v1h-1zM351 281h1v1h-1zM351 271h1v1h-1zM351 260h1v1h-1zM351 250h1v1h-1zM351 240h1v1h-1zM351 230h1v1h-1zM351 219h1v1h-1zM351 209h1v1h-1zM351 199h1v1h-1zM351 189h1v1h-1zM351 178h1v1h-1zM351 168h1v1h-1zM351 158h1v1h-1zM361 722h1v1h-1zM361 711h1v1h-1zM361 701h1v1h-1zM361 691h1v1h-1zM361 681h1v1h-1zM361 670h1v1h-1zM361 660h1v1h-1zM361 650h1v1h-1zM361 640h1v1h-1zM361 629h1v1h-1zM361 619h1v1h-1zM361 609h1v1h-1zM361 599h1v1h-1zM361 588h1v1h-1zM361 578h1v1h-1zM361 568h1v1h-1zM361 558h1v1h-1zM361 547h1v1h-1zM361 537h1v1h-1zM361 527h1v1h-1zM361 517h1v1h-1zM361 506h1v1h-1zM361 496h1v1h-1zM361 486h1v1h-1zM361 476h1v1h-1zM361 465h1v1h-1zM361 455h1v1h-1zM361 445h1v1h-1zM361 435h1v1h-1zM361 424h1v1h-1zM361 414h1v1h-1zM361 404h1v1h-1zM361 394h1v1h-1zM361 383h1v1h-1zM361 373h1v1h-1zM361 363h1v1h-1zM361 353h1v1h-1zM361 342h1v1h-1zM361 332h1v1h-1zM361 322h1v1h-1zM361 312h1v1h-1zM361 301h1v1h-1zM361 291h1v1h-1zM361 281h1v1h-1zM361 271h1v1h-1zM361 260h1v1h-1zM361 250h1v1h-1zM361 240h1v1h-1zM361 230h1v1h-1zM361 219h1v1h-1zM361 209h1v1h-1zM361 199h1v1h-1zM361 189h1v1h-1zM361 178h1v1h-1zM361 168h1v1h-1zM361 158h1v1h-1zM372 722h1v1h-1zM372 711h1v1h-1zM372 701h1v1h-1zM372 691h1v1h-1zM372 681h1v1h-1zM372 670h1v1h-1zM372 660h1v1h-1zM372 650h1v1h-1zM372 640h1v1h-1zM372 629h1v1h-1zM372 619h1v1h-1zM372 609h1v1h-1zM372 599h1v1h-1zM372 588h1v1h-1zM372 578h1v1h-1zM372 568h1v1h-1zM372 558h1v1h-1zM372 547h1v1h-1zM372 537h1v1h-1zM372 527h1v1h-1zM372 517h1v1h-1zM372 506h1v1h-1zM372 496h1v1h-1zM372 486h1v1h-1zM372 476h1v1h-1zM372 465h1v1h-1zM372 455h1v1h-1zM372 445h1v1h-1zM372 435h1v1h-1zM372 424h1v1h-1zM372 414h1v1h-1zM372 404h1v1h-1zM372 394h1v1h-1zM372 383h1v1h-1zM372 373h1v1h-1zM372 363h1v1h-1zM372 353h1v1h-1zM372 342h1v1h-1zM372 332h1v1h-1zM372 322h1v1h-1zM372 312h1v1h-1zM372 301h1v1h-1zM372 291h1v1h-1zM372 281h1v1h-1zM372 271h1v1h-1zM372 260h1v1h-1zM372 250h1v1h-1zM372 240h1v1h-1zM372 230h1v1h-1zM372 219h1v1h-1zM372 209h1v1h-1zM372 199h1v1h-1zM372 189h1v1h-1zM372 178h1v1h-1zM372 168h1v1h-1zM372 158h1v1h-1zM382 722h1v1h-1zM382 711h1v1h-1zM382 701h1v1h-1zM382 691h1v1h-1zM382 681h1v1h-1zM382 670h1v1h-1zM382 660h1v1h-1zM382 650h1v1h-1zM382 640h1v1h-1zM382 629h1v1h-1zM382 619h1v1h-1zM382 609h1v1h-1zM382 599h1v1h-1zM382 588h1v1h-1zM382 578h1v1h-1zM382 568h1v1h-1zM382 558h1v1h-1zM382 547h1v1h-1zM382 537h1v1h-1zM382 527h1v1h-1zM382 517h1v1h-1zM382 506h1v1h-1zM382 496h1v1h-1zM382 486h1v1h-1zM382 476h1v1h-1zM382 465h1v1h-1zM382 455h1v1h-1zM382 445h1v1h-1zM382 435h1v1h-1zM382 424h1v1h-1zM382 414h1v1h-1zM382 404h1v1h-1zM382 394h1v1h-1zM382 383h1v1h-1zM382 373h1v1h-1zM382 363h1v1h-1zM382 353h1v1h-1zM382 342h1v1h-1zM382 332h1v1h-1zM382 322h1v1h-1zM382 312h1v1h-1zM382 301h1v1h-1zM382 291h1v1h-1zM382 281h1v1h-1zM382 271h1v1h-1zM382 260h1v1h-1zM382 250h1v1h-1zM382 240h1v1h-1zM382 230h1v1h-1zM382 219h1v1h-1zM382 209h1v1h-1zM382 199h1v1h-1zM382 189h1v1h-1zM382 178h1v1h-1zM382 168h1v1h-1zM382 158h1v1h-1zM392 722h1v1h-1zM392 711h1v1h-1zM392 701h1v1h-1zM392 691h1v1h-1zM392 681h1v1h-1zM392 670h1v1h-1zM392 660h1v1h-1zM392 650h1v1h-1zM392 640h1v1h-1zM392 629h1v1h-1zM392 619h1v1h-1zM392 609h1v1h-1zM392 599h1v1h-1zM392 588h1v1h-1zM392 578h1v1h-1zM392 568h1v1h-1zM392 558h1v1h-1zM392 547h1v1h-1zM392 537h1v1h-1zM392 527h1v1h-1zM392 517h1v1h-1zM392 506h1v1h-1zM392 496h1v1h-1zM392 486h1v1h-1zM392 476h1v1h-1zM392 465h1v1h-1zM392 455h1v1h-1zM392 445h1v1h-1zM392 435h1v1h-1zM392 424h1v1h-1zM392 414h1v1h-1zM392 404h1v1h-1zM392 394h1v1h-1zM392 383h1v1h-1zM392 373h1v1h-1zM392 363h1v1h-1zM392 353h1v1h-1zM392 342h1v1h-1zM392 332h1v1h-1zM392 322h1v1h-1zM392 312h1v1h-1zM392 301h1v1h-1zM392 291h1v1h-1zM392 281h1v1h-1zM392 271h1v1h-1zM392 260h1v1h-1zM392 250h1v1h-1zM392 240h1v1h-1zM392 230h1v1h-1zM392 219h1v1h-1zM392 209h1v1h-1zM392 199h1v1h-1zM392 189h1v1h-1zM392 178h1v1h-1zM392 168h1v1h-1zM392 158h1v1h-1zM402 722h1v1h-1zM402 711h1v1h-1zM402 701h1v1h-1zM402 691h1v1h-1zM402 681h1v1h-1zM402 670h1v1h-1zM402 660h1v1h-1zM402 650h1v1h-1zM402 640h1v1h-1zM402 629h1v1h-1zM402 619h1v1h-1zM402 609h1v1h-1zM402 599h1v1h-1zM402 588h1v1h-1zM402 578h1v1h-1zM402 568h1v1h-1zM402 558h1v1h-1zM402 547h1v1h-1zM402 537h1v1h-1zM402 527h1v1h-1zM402 517h1v1h-1zM402 506h1v1h-1zM402 496h1v1h-1zM402 486h1v1h-1zM402 476h1v1h-1zM402 465h1v1h-1zM402 455h1v1h-1zM402 445h1v1h-1zM402 435h1v1h-1zM402 424h1v1h-1zM402 414h1v1h-1zM402 404h1v1h-1zM402 394h1v1h-1zM402 383h1v1h-1zM402 373h1v1h-1zM402 363h1v1h-1zM402 353h1v1h-1zM402 342h1v1h-1zM402 332h1v1h-1zM402 322h1v1h-1zM402 312h1v1h-1zM402 301h1v1h-1zM402 291h1v1h-1zM402 281h1v1h-1zM402 271h1v1h-1zM402 260h1v1h-1zM402 250h1v1h-1zM402 240h1v1h-1zM402 230h1v1h-1zM402 219h1v1h-1zM402 209h1v1h-1zM402 199h1v1h-1zM402 189h1v1h-1zM402 178h1v1h-1zM402 168h1v1h-1zM402 158h1v1h-1zM413 722h1v1h-1zM413 711h1v1h-1zM413 701h1v1h-1zM413 691h1v1h-1zM413 681h1v1h-1zM413 670h1v1h-1zM413 660h1v1h-1zM413 650h1v1h-1zM413 640h1v1h-1zM413 629h1v1h-1zM413 619h1v1h-1zM413 609h1v1h-1zM413 599h1v1h-1zM413 588h1v1h-1zM413 578h1v1h-1zM413 568h1v1h-1zM413 558h1v1h-1zM413 547h1v1h-1zM413 537h1v1h-1zM413 527h1v1h-1zM413 517h1v1h-1zM413 506h1v1h-1zM413 496h1v1h-1zM413 486h1v1h-1zM413 476h1v1h-1zM413 465h1v1h-1zM413 455h1v1h-1zM413 445h1v1h-1zM413 435h1v1h-1zM413 424h1v1h-1zM413 414h1v1h-1zM413 404h1v1h-1zM413 394h1v1h-1zM413 383h1v1h-1zM413 373h1v1h-1zM413 363h1v1h-1zM413 353h1v1h-1zM413 342h1v1h-1zM413 332h1v1h-1zM413 322h1v1h-1zM413 312h1v1h-1zM413 301h1v1h-1zM413 291h1v1h-1zM413 281h1v1h-1zM413 271h1v1h-1zM413 260h1v1h-1zM413 250h1v1h-1zM413 240h1v1h-1zM413 230h1v1h-1zM413 219h1v1h-1zM413 209h1v1h-1zM413 199h1v1h-1zM413 189h1v1h-1zM413 178h1v1h-1zM413 168h1v1h-1zM413 158h1v1h-1zM423 722h1v1h-1zM423 711h1v1h-1zM423 701h1v1h-1zM423 691h1v1h-1zM423 681h1v1h-1zM423 670h1v1h-1zM423 660h1v1h-1zM423 650h1v1h-1zM423 640h1v1h-1zM423 629h1v1h-1zM423 619h1v1h-1zM423 609h1v1h-1zM423 599h1v1h-1zM423 588h1v1h-1zM423 578h1v1h-1zM423 568h1v1h-1zM423 558h1v1h-1zM423 547h1v1h-1zM423 537h1v1h-1zM423 527h1v1h-1zM423 517h1v1h-1zM423 506h1v1h-1zM423 496h1v1h-1zM423 486h1v1h-1zM423 476h1v1h-1zM423 465h1v1h-1zM423 455h1v1h-1zM423 445h1v1h-1zM423 435h1v1h-1zM423 424h1v1h-1zM423 414h1v1h-1zM423 404h1v1h-1zM423 394h1v1h-1zM423 383h1v1h-1zM423 373h1v1h-1zM423 363h1v1h-1zM423 353h1v1h-1zM423 342h1v1h-1zM423 332h1v1h-1zM423 322h1v1h-1zM423 312h1v1h-1zM423 301h1v1h-1zM423 291h1v1h-1zM423 281h1v1h-1zM423 271h1v1h-1zM423 260h1v1h-1zM423 250h1v1h-1zM423 240h1v1h-1zM423 230h1v1h-1zM423 219h1v1h-1zM423 209h1v1h-1zM423 199h1v1h-1zM423 189h1v1h-1zM423 178h1v1h-1zM423 168h1v1h-1zM423 158h1v1h-1zM433 722h1v1h-1zM433 711h1v1h-1zM433 701h1v1h-1zM433 691h1v1h-1zM433 681h1v1h-1zM433 670h1v1h-1zM433 660h1v1h-1zM433 650h1v1h-1zM433 640h1v1h-1zM433 629h1v1h-1zM433 619h1v1h-1zM433 609h1v1h-1zM433 599h1v1h-1zM433 588h1v1h-1zM433 578h1v1h-1zM433 568h1v1h-1zM433 558h1v1h-1zM433 547h1v1h-1zM433 537h1v1h-1zM433 527h1v1h-1zM433 517h1v1h-1zM433 506h1v1h-1zM433 496h1v1h-1zM433 486h1v1h-1zM433 476h1v1h-1zM433 465h1v1h-1zM433 455h1v1h-1zM433 445h1v1h-1zM433 435h1v1h-1zM433 424h1v1h-1zM433 414h1v1h-1zM433 404h1v1h-1zM433 394h1v1h-1zM433 383h1v1h-1zM433 373h1v1h-1zM433 363h1v1h-1zM433 353h1v1h-1zM433 342h1v1h-1zM433 332h1v1h-1zM433 322h1v1h-1zM433 312h1v1h-1zM433 301h1v1h-1zM433 291h1v1h-1zM433 281h1v1h-1zM433 271h1v1h-1zM433 260h1v1h-1zM433 250h1v1h-1zM433 240h1v1h-1zM433 230h1v1h-1zM433 219h1v1h-1zM433 209h1v1h-1zM433 199h1v1h-1zM433 189h1v1h-1zM433 178h1v1h-1zM433 168h1v1h-1zM433 158h1v1h-1zM443 722h1v1h-1zM443 711h1v1h-1zM443 701h1v1h-1zM443 691h1v1h-1zM443 681h1v1h-1zM443 670h1v1h-1zM443 660h1v1h-1zM443 650h1v1h-1zM443 640h1v1h-1zM443 629h1v1h-1zM443 619h1v1h-1zM443 609h1v1h-1zM443 599h1v1h-1zM443 588h1v1h-1zM443 578h1v1h-1zM443 568h1v1h-1zM443 558h1v1h-1zM443 547h1v1h-1zM443 537h1v1h-1zM443 527h1v1h-1zM443 517h1v1h-1zM443 506h1v1h-1zM443 496h1v1h-1zM443 486h1v1h-1zM443 476h1v1h-1zM443 465h1v1h-1zM443 455h1v1h-1zM443 445h1v1h-1zM443 435h1v1h-1zM443 424h1v1h-1zM443 414h1v1h-1zM443 404h1v1h-1zM443 394h1v1h-1zM443 383h1v1h-1zM443 373h1v1h-1zM443 363h1v1h-1zM443 353h1v1h-1zM443 342h1v1h-1zM443 332h1v1h-1zM443 322h1v1h-1zM443 312h1v1h-1zM443 301h1v1h-1zM443 291h1v1h-1zM443 281h1v1h-1zM443 271h1v1h-1zM443 260h1v1h-1zM443 250h1v1h-1zM443 240h1v1h-1zM443 230h1v1h-1zM443 219h1v1h-1zM443 209h1v1h-1zM443 199h1v1h-1zM443 189h1v1h-1zM443 178h1v1h-1zM443 168h1v1h-1zM443 158h1v1h-1zM454 722h1v1h-1zM454 711h1v1h-1zM454 701h1v1h-1zM454 691h1v1h-1zM454 681h1v1h-1zM454 670h1v1h-1zM454 660h1v1h-1zM454 650h1v1h-1zM454 640h1v1h-1zM454 629h1v1h-1zM454 619h1v1h-1zM454 609h1v1h-1zM454 599h1v1h-1zM454 588h1v1h-1zM454 578h1v1h-1zM454 568h1v1h-1zM454 558h1v1h-1zM454 547h1v1h-1zM454 537h1v1h-1zM454 527h1v1h-1zM454 517h1v1h-1zM454 506h1v1h-1zM454 496h1v1h-1zM454 486h1v1h-1zM454 476h1v1h-1zM454 465h1v1h-1zM454 455h1v1h-1zM454 445h1v1h-1zM454 435h1v1h-1zM454 424h1v1h-1zM454 414h1v1h-1zM454 404h1v1h-1zM454 394h1v1h-1zM454 383h1v1h-1zM454 373h1v1h-1zM454 363h1v1h-1zM454 353h1v1h-1zM454 342h1v1h-1zM454 332h1v1h-1zM454 322h1v1h-1zM454 312h1v1h-1zM454 301h1v1h-1zM454 291h1v1h-1zM454 281h1v1h-1zM454 271h1v1h-1zM454 260h1v1h-1zM454 250h1v1h-1zM454 240h1v1h-1zM454 230h1v1h-1zM454 219h1v1h-1zM454 209h1v1h-1zM454 199h1v1h-1zM454 189h1v1h-1zM454 178h1v1h-1zM454 168h1v1h-1zM454 158h1v1h-1zM464 722h1v1h-1zM464 711h1v1h-1zM464 701h1v1h-1zM464 691h1v1h-1zM464 681h1v1h-1zM464 670h1v1h-1zM464 660h1v1h-1zM464 650h1v1h-1zM464 640h1v1h-1zM464 629h1v1h-1zM464 619h1v1h-1zM464 609h1v1h-1zM464 599h1v1h-1zM464 588h1v1h-1zM464 578h1v1h-1zM464 568h1v1h-1zM464 558h1v1h-1zM464 547h1v1h-1zM464 537h1v1h-1zM464 527h1v1h-1zM464 517h1v1h-1zM464 506h1v1h-1zM464 496h1v1h-1zM464 486h1v1h-1zM464 476h1v1h-1zM464 465h1v1h-1zM464 455h1v1h-1zM464 445h1v1h-1zM464 435h1v1h-1zM464 424h1v1h-1zM464 414h1v1h-1zM464 404h1v1h-1zM464 394h1v1h-1zM464 383h1v1h-1zM464 373h1v1h-1zM464 363h1v1h-1zM464 353h1v1h-1zM464 342h1v1h-1zM464 332h1v1h-1zM464 322h1v1h-1zM464 312h1v1h-1zM464 301h1v1h-1zM464 291h1v1h-1zM464 281h1v1h-1zM464 271h1v1h-1zM464 260h1v1h-1zM464 250h1v1h-1zM464 240h1v1h-1zM464 230h1v1h-1zM464 219h1v1h-1zM464 209h1v1h-1zM464 199h1v1h-1zM464 189h1v1h-1zM464 178h1v1h-1zM464 168h1v1h-1zM464 158h1v1h-1zM474 722h1v1h-1zM474 711h1v1h-1zM474 701h1v1h-1zM474 691h1v1h-1zM474 681h1v1h-1zM474 670h1v1h-1zM474 660h1v1h-1zM474 650h1v1h-1zM474 640h1v1h-1zM474 629h1v1h-1zM474 619h1v1h-1zM474 609h1v1h-1zM474 599h1v1h-1zM474 588h1v1h-1zM474 578h1v1h-1zM474 568h1v1h-1zM474 558h1v1h-1zM474 547h1v1h-1zM474 537h1v1h-1zM474 527h1v1h-1zM474 517h1v1h-1zM474 506h1v1h-1zM474 496h1v1h-1zM474 486h1v1h-1zM474 476h1v1h-1zM474 465h1v1h-1zM474 455h1v1h-1zM474 445h1v1h-1zM474 435h1v1h-1zM474 424h1v1h-1zM474 414h1v1h-1zM474 404h1v1h-1zM474 394h1v1h-1zM474 383h1v1h-1zM474 373h1v1h-1zM474 363h1v1h-1zM474 353h1v1h-1zM474 342h1v1h-1zM474 332h1v1h-1zM474 322h1v1h-1zM474 312h1v1h-1zM474 301h1v1h-1zM474 291h1v1h-1zM474 281h1v1h-1zM474 271h1v1h-1zM474 260h1v1h-1zM474 250h1v1h-1zM474 240h1v1h-1zM474 230h1v1h-1zM474 219h1v1h-1zM474 209h1v1h-1zM474 199h1v1h-1zM474 189h1v1h-1zM474 178h1v1h-1zM474 168h1v1h-1zM474 158h1v1h-1zM484 722h1v1h-1zM484 711h1v1h-1zM484 701h1v1h-1zM484 691h1v1h-1zM484 681h1v1h-1zM484 670h1v1h-1zM484 660h1v1h-1zM484 650h1v1h-1zM484 640h1v1h-1zM484 629h1v1h-1zM484 619h1v1h-1zM484 609h1v1h-1zM484 599h1v1h-1zM484 588h1v1h-1zM484 578h1v1h-1zM484 568h1v1h-1zM484 558h1v1h-1zM484 547h1v1h-1zM484 537h1v1h-1zM484 527h1v1h-1zM484 517h1v1h-1zM484 506h1v1h-1zM484 496h1v1h-1zM484 486h1v1h-1zM484 476h1v1h-1zM484 465h1v1h-1zM484 455h1v1h-1zM484 445h1v1h-1zM484 435h1v1h-1zM484 424h1v1h-1zM484 414h1v1h-1zM484 404h1v1h-1zM484 394h1v1h-1zM484 383h1v1h-1zM484 373h1v1h-1zM484 363h1v1h-1zM484 353h1v1h-1zM484 342h1v1h-1zM484 332h1v1h-1zM484 322h1v1h-1zM484 312h1v1h-1zM484 301h1v1h-1zM484 291h1v1h-1zM484 281h1v1h-1zM484 271h1v1h-1zM484 260h1v1h-1zM484 250h1v1h-1zM484 240h1v1h-1zM484 230h1v1h-1zM484 219h1v1h-1zM484 209h1v1h-1zM484 199h1v1h-1zM484 189h1v1h-1zM484 178h1v1h-1zM484 168h1v1h-1zM484 158h1v1h-1zM495 722h1v1h-1zM495 711h1v1h-1zM495 701h1v1h-1zM495 691h1v1h-1zM495 681h1v1h-1zM495 670h1v1h-1zM495 660h1v1h-1zM495 650h1v1h-1zM495 640h1v1h-1zM495 629h1v1h-1zM495 619h1v1h-1zM495 609h1v1h-1zM495 599h1v1h-1zM495 588h1v1h-1zM495 578h1v1h-1zM495 568h1v1h-1zM495 558h1v1h-1zM495 547h1v1h-1zM495 537h1v1h-1zM495 527h1v1h-1zM495 517h1v1h-1zM495 506h1v1h-1zM495 496h1v1h-1zM495 486h1v1h-1zM495 476h1v1h-1zM495 465h1v1h-1zM495 455h1v1h-1zM495 445h1v1h-1zM495 435h1v1h-1zM495 424h1v1h-1zM495 414h1v1h-1zM495 404h1v1h-1zM495 394h1v1h-1zM495 383h1v1h-1zM495 373h1v1h-1zM495 363h1v1h-1zM495 353h1v1h-1zM495 342h1v1h-1zM495 332h1v1h-1zM495 322h1v1h-1zM495 312h1v1h-1zM495 301h1v1h-1zM495 291h1v1h-1zM495 281h1v1h-1zM495 271h1v1h-1zM495 260h1v1h-1zM495 250h1v1h-1zM495 240h1v1h-1zM495 230h1v1h-1zM495 219h1v1h-1zM495 209h1v1h-1zM495 199h1v1h-1zM495 189h1v1h-1zM495 178h1v1h-1zM495 168h1v1h-1zM495 158h1v1h-1zM505 722h1v1h-1zM505 711h1v1h-1zM505 701h1v1h-1zM505 691h1v1h-1zM505 681h1v1h-1zM505 670h1v1h-1zM505 660h1v1h-1zM505 650h1v1h-1zM505 640h1v1h-1zM505 629h1v1h-1zM505 619h1v1h-1zM505 609h1v1h-1zM505 599h1v1h-1zM505 588h1v1h-1zM505 578h1v1h-1zM505 568h1v1h-1zM505 558h1v1h-1zM505 547h1v1h-1zM505 537h1v1h-1zM505 527h1v1h-1zM505 517h1v1h-1zM505 506h1v1h-1zM505 496h1v1h-1zM505 486h1v1h-1zM505 476h1v1h-1zM505 465h1v1h-1zM505 455h1v1h-1zM505 445h1v1h-1zM505 435h1v1h-1zM505 424h1v1h-1zM505 414h1v1h-1zM505 404h1v1h-1zM505 394h1v1h-1zM505 383h1v1h-1zM505 373h1v1h-1zM505 363h1v1h-1zM505 353h1v1h-1zM505 342h1v1h-1zM505 332h1v1h-1zM505 322h1v1h-1zM505 312h1v1h-1zM505 301h1v1h-1zM505 291h1v1h-1zM505 281h1v1h-1zM505 271h1v1h-1zM505 260h1v1h-1zM505 250h1v1h-1zM505 240h1v1h-1zM505 230h1v1h-1zM505 219h1v1h-1zM505 209h1v1h-1zM505 199h1v1h-1zM505 189h1v1h-1zM505 178h1v1h-1zM505 168h1v1h-1zM505 158h1v1h-1zM515 722h1v1h-1zM515 711h1v1h-1zM515 701h1v1h-1zM515 691h1v1h-1zM515 681h1v1h-1zM515 670h1v1h-1zM515 660h1v1h-1zM515 650h1v1h-1zM515 640h1v1h-1zM515 629h1v1h-1zM515 619h1v1h-1zM515 609h1v1h-1zM515 599h1v1h-1zM515 588h1v1h-1zM515 578h1v1h-1zM515 568h1v1h-1zM515 558h1v1h-1zM515 547h1v1h-1zM515 537h1v1h-1zM515 527h1v1h-1zM515 517h1v1h-1zM515 506h1v1h-1zM515 496h1v1h-1zM515 486h1v1h-1zM515 476h1v1h-1zM515 465h1v1h-1zM515 455h1v1h-1zM515 445h1v1h-1zM515 435h1v1h-1zM515 424h1v1h-1zM515 414h1v1h-1zM515 404h1v1h-1zM515 394h1v1h-1zM515 383h1v1h-1zM515 373h1v1h-1zM515 363h1v1h-1zM515 353h1v1h-1zM515 342h1v1h-1zM515 332h1v1h-1zM515 322h1v1h-1zM515 312h1v1h-1zM515 301h1v1h-1zM515 291h1v1h-1zM515 281h1v1h-1zM515 271h1v1h-1zM515 260h1v1h-1zM515 250h1v1h-1zM515 240h1v1h-1zM515 230h1v1h-1zM515 219h1v1h-1zM515 209h1v1h-1zM515 199h1v1h-1zM515 189h1v1h-1zM515 178h1v1h-1zM515 168h1v1h-1zM515 158h1v1h-1zM525 722h1v1h-1zM525 711h1v1h-1zM525 701h1v1h-1zM525 691h1v1h-1zM525 681h1v1h-1zM525 670h1v1h-1zM525 660h1v1h-1zM525 650h1v1h-1zM525 640h1v1h-1zM525 629h1v1h-1zM525 619h1v1h-1zM525 609h1v1h-1zM525 599h1v1h-1zM525 588h1v1h-1zM525 578h1v1h-1zM525 568h1v1h-1zM525 558h1v1h-1zM525 547h1v1h-1zM525 537h1v1h-1zM525 527h1v1h-1zM525 517h1v1h-1zM525 506h1v1h-1zM525 496h1v1h-1zM525 486h1v1h-1zM525 476h1v1h-1zM525 465h1v1h-1zM525 455h1v1h-1zM525 445h1v1h-1zM525 435h1v1h-1zM525 424h1v1h-1zM525 414h1v1h-1zM525 404h1v1h-1zM525 394h1v1h-1zM525 383h1v1h-1zM525 373h1v1h-1zM525 363h1v1h-1zM525 353h1v1h-1zM525 342h1v1h-1zM525 332h1v1h-1zM525 322h1v1h-1zM525 312h1v1h-1zM525 301h1v1h-1zM525 291h1v1h-1zM525 281h1v1h-1zM525 271h1v1h-1zM525 260h1v1h-1zM525 250h1v1h-1zM525 240h1v1h-1zM525 230h1v1h-1zM525 219h1v1h-1zM525 209h1v1h-1zM525 199h1v1h-1zM525 189h1v1h-1zM525 178h1v1h-1zM525 168h1v1h-1zM525 158h1v1h-1zM536 722h1v1h-1zM536 711h1v1h-1zM536 701h1v1h-1zM536 691h1v1h-1zM536 681h1v1h-1zM536 670h1v1h-1zM536 660h1v1h-1zM536 650h1v1h-1zM536 640h1v1h-1zM536 629h1v1h-1zM536 619h1v1h-1zM536 609h1v1h-1zM536 599h1v1h-1zM536 588h1v1h-1zM536 578h1v1h-1zM536 568h1v1h-1zM536 558h1v1h-1zM536 547h1v1h-1zM536 537h1v1h-1zM536 527h1v1h-1zM536 517h1v1h-1zM536 506h1v1h-1zM536 496h1v1h-1zM536 486h1v1h-1zM536 476h1v1h-1zM536 465h1v1h-1zM536 455h1v1h-1zM536 445h1v1h-1zM536 435h1v1h-1zM536 424h1v1h-1zM536 414h1v1h-1zM536 404h1v1h-1zM536 394h1v1h-1zM536 383h1v1h-1zM536 373h1v1h-1zM536 363h1v1h-1zM536 353h1v1h-1zM536 342h1v1h-1zM536 332h1v1h-1zM536 322h1v1h-1zM536 312h1v1h-1zM536 301h1v1h-1zM536 291h1v1h-1zM536 281h1v1h-1zM536 271h1v1h-1zM536 260h1v1h-1zM536 250h1v1h-1zM536 240h1v1h-1zM536 230h1v1h-1zM536 219h1v1h-1zM536 209h1v1h-1zM536 199h1v1h-1zM536 189h1v1h-1zM536 178h1v1h-1zM536 168h1v1h-1zM536 158h1v1h-1zM546 722h1v1h-1zM546 711h1v1h-1zM546 701h1v1h-1zM546 691h1v1h-1zM546 681h1v1h-1zM546 670h1v1h-1zM546 660h1v1h-1zM546 650h1v1h-1zM546 640h1v1h-1zM546 629h1v1h-1zM546 619h1v1h-1zM546 609h1v1h-1zM546 599h1v1h-1zM546 588h1v1h-1zM546 578h1v1h-1zM546 568h1v1h-1zM546 558h1v1h-1zM546 547h1v1h-1zM546 537h1v1h-1zM546 527h1v1h-1zM546 517h1v1h-1zM546 506h1v1h-1zM546 496h1v1h-1zM546 486h1v1h-1zM546 476h1v1h-1zM546 465h1v1h-1zM546 455h1v1h-1zM546 445h1v1h-1zM546 435h1v1h-1zM546 424h1v1h-1zM546 414h1v1h-1zM546 404h1v1h-1zM546 394h1v1h-1zM546 383h1v1h-1zM546 373h1v1h-1zM546 363h1v1h-1zM546 353h1v1h-1zM546 342h1v1h-1zM546 332h1v1h-1zM546 322h1v1h-1zM546 312h1v1h-1zM546 301h1v1h-1zM546 291h1v1h-1zM546 281h1v1h-1zM546 271h1v1h-1zM546 260h1v1h-1zM546 250h1v1h-1zM546 240h1v1h-1zM546 230h1v1h-1zM546 219h1v1h-1zM546 209h1v1h-1zM546 199h1v1h-1zM546 189h1v1h-1zM546 178h1v1h-1zM546 168h1v1h-1zM546 158h1v1h-1zM556 722h1v1h-1zM556 711h1v1h-1zM556 701h1v1h-1zM556 691h1v1h-1zM556 681h1v1h-1zM556 670h1v1h-1zM556 660h1v1h-1zM556 650h1v1h-1zM556 640h1v1h-1zM556 629h1v1h-1zM556 619h1v1h-1zM556 609h1v1h-1zM556 599h1v1h-1zM556 588h1v1h-1zM556 578h1v1h-1zM556 568h1v1h-1zM556 558h1v1h-1zM556 547h1v1h-1zM556 537h1v1h-1zM556 527h1v1h-1zM556 517h1v1h-1zM556 506h1v1h-1zM556 496h1v1h-1zM556 486h1v1h-1zM556 476h1v1h-1zM556 465h1v1h-1zM556 455h1v1h-1zM556 445h1v1h-1zM556 435h1v1h-1zM556 424h1v1h-1zM556 414h1v1h-1zM556 404h1v1h-1zM556 394h1v1h-1zM556 383h1v1h-1zM556 373h1v1h-1zM556 363h1v1h-1zM556 353h1v1h-1zM556 342h1v1h-1zM556 332h1v1h-1zM556 322h1v1h-1zM556 312h1v1h-1zM556 301h1v1h-1zM556 291h1v1h-1zM556 281h1v1h-1zM556 271h1v1h-1zM556 260h1v1h-1zM556 250h1v1h-1zM556 240h1v1h-1zM556 230h1v1h-1zM556 219h1v1h-1zM556 209h1v1h-1zM556 199h1v1h-1zM556 189h1v1h-1zM556 178h1v1h-1zM556 168h1v1h-1zM556 158h1v1h-1zM566 722h1v1h-1zM566 711h1v1h-1zM566 701h1v1h-1zM566 691h1v1h-1zM566 681h1v1h-1zM566 670h1v1h-1zM566 660h1v1h-1zM566 650h1v1h-1zM566 640h1v1h-1zM566 629h1v1h-1zM566 619h1v1h-1zM566 609h1v1h-1zM566 599h1v1h-1zM566 588h1v1h-1zM566 578h1v1h-1zM566 568h1v1h-1zM566 558h1v1h-1zM566 547h1v1h-1zM566 537h1v1h-1zM566 527h1v1h-1zM566 517h1v1h-1zM566 506h1v1h-1zM566 496h1v1h-1zM566 486h1v1h-1zM566 476h1v1h-1zM566 465h1v1h-1zM566 455h1v1h-1zM566 445h1v1h-1zM566 435h1v1h-1zM566 424h1v1h-1zM566 414h1v1h-1zM566 404h1v1h-1zM566 394h1v1h-1zM566 383h1v1h-1zM566 373h1v1h-1zM566 363h1v1h-1zM566 353h1v1h-1zM566 342h1v1h-1zM566 332h1v1h-1zM566 322h1v1h-1zM566 312h1v1h-1zM566 301h1v1h-1zM566 291h1v1h-1zM566 281h1v1h-1zM566 271h1v1h-1zM566 260h1v1h-1zM566 250h1v1h-1zM566 240h1v1h-1zM566 230h1v1h-1zM566 219h1v1h-1zM566 209h1v1h-1zM566 199h1v1h-1zM566 189h1v1h-1zM566 178h1v1h-1zM566 168h1v1h-1zM566 158h1v1h-1zM577 722h1v1h-1zM577 711h1v1h-1zM577 701h1v1h-1zM577 691h1v1h-1zM577 681h1v1h-1zM577 670h1v1h-1zM577 660h1v1h-1zM577 650h1v1h-1zM577 640h1v1h-1zM577 629h1v1h-1zM577 619h1v1h-1zM577 609h1v1h-1zM577 599h1v1h-1zM577 588h1v1h-1zM577 578h1v1h-1zM577 568h1v1h-1zM577 558h1v1h-1zM577 547h1v1h-1zM577 537h1v1h-1zM577 527h1v1h-1zM577 517h1v1h-1zM577 506h1v1h-1zM577 496h1v1h-1zM577 486h1v1h-1zM577 476h1v1h-1zM577 465h1v1h-1zM577 455h1v1h-1zM577 445h1v1h-1zM577 435h1v1h-1zM577 424h1v1h-1zM577 414h1v1h-1zM577 404h1v1h-1zM577 394h1v1h-1zM577 383h1v1h-1zM577 373h1v1h-1zM577 363h1v1h-1zM577 353h1v1h-1zM577 342h1v1h-1zM577 332h1v1h-1zM577 322h1v1h-1zM577 312h1v1h-1zM577 301h1v1h-1zM577 291h1v1h-1zM577 281h1v1h-1zM577 271h1v1h-1zM577 260h1v1h-1zM577 250h1v1h-1zM577 240h1v1h-1zM577 230h1v1h-1zM577 219h1v1h-1zM577 209h1v1h-1zM577 199h1v1h-1zM577 189h1v1h-1zM577 178h1v1h-1zM577 168h1v1h-1zM577 158h1v1h-1zM587 722h1v1h-1zM587 711h1v1h-1zM587 701h1v1h-1zM587 691h1v1h-1zM587 681h1v1h-1zM587 670h1v1h-1zM587 660h1v1h-1zM587 650h1v1h-1zM587 640h1v1h-1zM587 629h1v1h-1zM587 619h1v1h-1zM587 609h1v1h-1zM587 599h1v1h-1zM587 588h1v1h-1zM587 578h1v1h-1zM587 568h1v1h-1zM587 558h1v1h-1zM587 547h1v1h-1zM587 537h1v1h-1zM587 527h1v1h-1zM587 517h1v1h-1zM587 506h1v1h-1zM587 496h1v1h-1zM587 486h1v1h-1zM587 476h1v1h-1zM587 465h1v1h-1zM587 455h1v1h-1zM587 445h1v1h-1zM587 435h1v1h-1zM587 424h1v1h-1zM587 414h1v1h-1zM587 404h1v1h-1zM587 394h1v1h-1zM587 383h1v1h-1zM587 373h1v1h-1zM587 363h1v1h-1zM587 353h1v1h-1zM587 342h1v1h-1zM587 332h1v1h-1zM587 322h1v1h-1zM587 312h1v1h-1zM587 301h1v1h-1zM587 291h1v1h-1zM587 281h1v1h-1zM587 271h1v1h-1zM587 260h1v1h-1zM587 250h1v1h-1zM587 240h1v1h-1zM587 230h1v1h-1zM587 219h1v1h-1zM587 209h1v1h-1zM587 199h1v1h-1zM587 189h1v1h-1zM587 178h1v1h-1zM587 168h1v1h-1zM587 158h1v1h-1zM597 722h1v1h-1zM597 711h1v1h-1zM597 701h1v1h-1zM597 691h1v1h-1zM597 681h1v1h-1zM597 670h1v1h-1zM597 660h1v1h-1zM597 650h1v1h-1zM597 640h1v1h-1zM597 629h1v1h-1zM597 619h1v1h-1zM597 609h1v1h-1zM597 599h1v1h-1zM597 588h1v1h-1zM597 578h1v1h-1zM597 568h1v1h-1zM597 558h1v1h-1zM597 547h1v1h-1zM597 537h1v1h-1zM597 527h1v1h-1zM597 517h1v1h-1zM597 506h1v1h-1zM597 496h1v1h-1zM597 486h1v1h-1zM597 476h1v1h-1zM597 465h1v1h-1zM597 455h1v1h-1zM597 445h1v1h-1zM597 435h1v1h-1zM597 424h1v1h-1zM597 414h1v1h-1zM597 404h1v1h-1zM597 394h1v1h-1zM597 383h1v1h-1zM597 373h1v1h-1zM597 363h1v1h-1zM597 353h1v1h-1zM597 342h1v1h-1zM597 332h1v1h-1zM597 322h1v1h-1zM597 312h1v1h-1zM597 301h1v1h-1zM597 291h1v1h-1zM597 281h1v1h-1zM597 271h1v1h-1zM597 260h1v1h-1zM597 250h1v1h-1zM597 240h1v1h-1zM597 230h1v1h-1zM597 219h1v1h-1zM597 209h1v1h-1zM597 199h1v1h-1zM597 189h1v1h-1zM597 178h1v1h-1zM597 168h1v1h-1zM597 158h1v1h-1zM607 722h1v1h-1zM607 711h1v1h-1zM607 701h1v1h-1zM607 691h1v1h-1zM607 681h1v1h-1zM607 670h1v1h-1zM607 660h1v1h-1zM607 650h1v1h-1zM607 640h1v1h-1zM607 629h1v1h-1zM607 619h1v1h-1zM607 609h1v1h-1zM607 599h1v1h-1zM607 588h1v1h-1zM607 578h1v1h-1zM607 568h1v1h-1zM607 558h1v1h-1zM607 547h1v1h-1zM607 537h1v1h-1zM607 527h1v1h-1zM607 517h1v1h-1zM607 506h1v1h-1zM607 496h1v1h-1zM607 486h1v1h-1zM607 476h1v1h-1zM607 465h1v1h-1zM607 455h1v1h-1zM607 445h1v1h-1zM607 435h1v1h-1zM607 424h1v1h-1zM607 414h1v1h-1zM607 404h1v1h-1zM607 394h1v1h-1zM607 383h1v1h-1zM607 373h1v1h-1zM607 363h1v1h-1zM607 353h1v1h-1zM607 342h1v1h-1zM607 332h1v1h-1zM607 322h1v1h-1zM607 312h1v1h-1zM607 301h1v1h-1zM607 291h1v1h-1zM607 281h1v1h-1zM607 271h1v1h-1zM607 260h1v1h-1zM607 250h1v1h-1zM607 240h1v1h-1zM607 230h1v1h-1zM607 219h1v1h-1zM607 209h1v1h-1zM607 199h1v1h-1zM607 189h1v1h-1zM607 178h1v1h-1zM607 168h1v1h-1zM607 158h1v1h-1zM618 722h1v1h-1zM618 711h1v1h-1zM618 701h1v1h-1zM618 691h1v1h-1zM618 681h1v1h-1zM618 670h1v1h-1zM618 660h1v1h-1zM618 650h1v1h-1zM618 640h1v1h-1zM618 629h1v1h-1zM618 619h1v1h-1zM618 609h1v1h-1zM618 599h1v1h-1zM618 588h1v1h-1zM618 578h1v1h-1zM618 568h1v1h-1zM618 558h1v1h-1zM618 547h1v1h-1zM618 537h1v1h-1zM618 527h1v1h-1zM618 517h1v1h-1zM618 506h1v1h-1zM618 496h1v1h-1zM618 486h1v1h-1zM618 476h1v1h-1zM618 465h1v1h-1zM618 455h1v1h-1zM618 445h1v1h-1zM618 435h1v1h-1zM618 424h1v1h-1zM618 414h1v1h-1zM618 404h1v1h-1zM618 394h1v1h-1zM618 383h1v1h-1zM618 373h1v1h-1zM618 363h1v1h-1zM618 353h1v1h-1zM618 342h1v1h-1zM618 332h1v1h-1zM618 322h1v1h-1zM618 312h1v1h-1zM618 301h1v1h-1zM618 291h1v1h-1zM618 281h1v1h-1zM618 271h1v1h-1zM618 260h1v1h-1zM618 250h1v1h-1zM618 240h1v1h-1zM618 230h1v1h-1zM618 219h1v1h-1zM618 209h1v1h-1zM618 199h1v1h-1zM618 189h1v1h-1zM618 178h1v1h-1zM618 168h1v1h-1zM618 158h1v1h-1zM628 722h1v1h-1zM628 711h1v1h-1zM628 701h1v1h-1zM628 691h1v1h-1zM628 681h1v1h-1zM628 670h1v1h-1zM628 660h1v1h-1zM628 650h1v1h-1zM628 640h1v1h-1zM628 629h1v1h-1zM628 619h1v1h-1zM628 609h1v1h-1zM628 599h1v1h-1zM628 588h1v1h-1zM628 578h1v1h-1zM628 568h1v1h-1zM628 558h1v1h-1zM628 547h1v1h-1zM628 537h1v1h-1zM628 527h1v1h-1zM628 517h1v1h-1zM628 506h1v1h-1zM628 496h1v1h-1zM628 486h1v1h-1zM628 476h1v1h-1zM628 465h1v1h-1zM628 455h1v1h-1zM628 445h1v1h-1zM628 435h1v1h-1zM628 424h1v1h-1zM628 414h1v1h-1zM628 404h1v1h-1zM628 394h1v1h-1zM628 383h1v1h-1zM628 373h1v1h-1zM628 363h1v1h-1zM628 353h1v1h-1zM628 342h1v1h-1zM628 332h1v1h-1zM628 322h1v1h-1zM628 312h1v1h-1zM628 301h1v1h-1zM628 291h1v1h-1zM628 281h1v1h-1zM628 271h1v1h-1zM628 260h1v1h-1zM628 250h1v1h-1zM628 240h1v1h-1zM628 230h1v1h-1zM628 219h1v1h-1zM628 209h1v1h-1zM628 199h1v1h-1zM628 189h1v1h-1zM628 178h1v1h-1zM628 168h1v1h-1zM628 158h1v1h-1zM638 722h1v1h-1zM638 711h1v1h-1zM638 701h1v1h-1zM638 691h1v1h-1zM638 681h1v1h-1zM638 670h1v1h-1zM638 660h1v1h-1zM638 650h1v1h-1zM638 640h1v1h-1zM638 629h1v1h-1zM638 619h1v1h-1zM638 609h1v1h-1zM638 599h1v1h-1zM638 588h1v1h-1zM638 578h1v1h-1zM638 568h1v1h-1zM638 558h1v1h-1zM638 547h1v1h-1zM638 537h1v1h-1zM638 527h1v1h-1zM638 517h1v1h-1zM638 506h1v1h-1zM638 496h1v1h-1zM638 486h1v1h-1zM638 476h1v1h-1zM638 465h1v1h-1zM638 455h1v1h-1zM638 445h1v1h-1zM638 435h1v1h-1zM638 424h1v1h-1zM638 414h1v1h-1zM638 404h1v1h-1zM638 394h1v1h-1zM638 383h1v1h-1zM638 373h1v1h-1zM638 363h1v1h-1zM638 353h1v1h-1zM638 342h1v1h-1zM638 332h1v1h-1zM638 322h1v1h-1zM638 312h1v1h-1zM638 301h1v1h-1zM638 291h1v1h-1zM638 281h1v1h-1zM638 271h1v1h-1zM638 260h1v1h-1zM638 250h1v1h-1zM638 240h1v1h-1zM638 230h1v1h-1zM638 219h1v1h-1zM638 209h1v1h-1zM638 199h1v1h-1zM638 189h1v1h-1zM638 178h1v1h-1zM638 168h1v1h-1zM638 158h1v1h-1zM648 722h1v1h-1zM648 711h1v1h-1zM648 701h1v1h-1zM648 691h1v1h-1zM648 681h1v1h-1zM648 670h1v1h-1zM648 660h1v1h-1zM648 650h1v1h-1zM648 640h1v1h-1zM648 629h1v1h-1zM648 619h1v1h-1zM648 609h1v1h-1zM648 599h1v1h-1zM648 588h1v1h-1zM648 578h1v1h-1zM648 568h1v1h-1zM648 558h1v1h-1zM648 547h1v1h-1zM648 537h1v1h-1zM648 527h1v1h-1zM648 517h1v1h-1zM648 506h1v1h-1zM648 496h1v1h-1zM648 486h1v1h-1zM648 476h1v1h-1zM648 465h1v1h-1zM648 455h1v1h-1zM648 445h1v1h-1zM648 435h1v1h-1zM648 424h1v1h-1zM648 414h1v1h-1zM648 404h1v1h-1zM648 394h1v1h-1zM648 383h1v1h-1zM648 373h1v1h-1zM648 363h1v1h-1zM648 353h1v1h-1zM648 342h1v1h-1zM648 332h1v1h-1zM648 322h1v1h-1zM648 312h1v1h-1zM648 301h1v1h-1zM648 291h1v1h-1zM648 281h1v1h-1zM648 271h1v1h-1zM648 260h1v1h-1zM648 250h1v1h-1zM648 240h1v1h-1zM648 230h1v1h-1zM648 219h1v1h-1zM648 209h1v1h-1zM648 199h1v1h-1zM648 189h1v1h-1zM648 178h1v1h-1zM648 168h1v1h-1zM648 158h1v1h-1zM659 722h1v1h-1zM659 711h1v1h-1zM659 701h1v1h-1zM659 691h1v1h-1zM659 681h1v1h-1zM659 670h1v1h-1zM659 660h1v1h-1zM659 650h1v1h-1zM659 640h1v1h-1zM659 629h1v1h-1zM659 619h1v1h-1zM659 609h1v1h-1zM659 599h1v1h-1zM659 588h1v1h-1zM659 578h1v1h-1zM659 568h1v1h-1zM659 558h1v1h-1zM659 547h1v1h-1zM659 537h1v1h-1zM659 527h1v1h-1zM659 517h1v1h-1zM659 506h1v1h-1zM659 496h1v1h-1zM659 486h1v1h-1zM659 476h1v1h-1zM659 465h1v1h-1zM659 455h1v1h-1zM659 445h1v1h-1zM659 435h1v1h-1zM659 424h1v1h-1zM659 414h1v1h-1zM659 404h1v1h-1zM659 394h1v1h-1zM659 383h1v1h-1zM659 373h1v1h-1zM659 363h1v1h-1zM659 353h1v1h-1zM659 342h1v1h-1zM659 332h1v1h-1zM659 322h1v1h-1zM659 312h1v1h-1zM659 301h1v1h-1zM659 291h1v1h-1zM659 281h1v1h-1zM659 271h1v1h-1zM659 260h1v1h-1zM659 250h1v1h-1zM659 240h1v1h-1zM659 230h1v1h-1zM659 219h1v1h-1zM659 209h1v1h-1zM659 199h1v1h-1zM659 189h1v1h-1zM659 178h1v1h-1zM659 168h1v1h-1zM659 158h1v1h-1zM669 722h1v1h-1zM669 711h1v1h-1zM669 701h1v1h-1zM669 691h1v1h-1zM669 681h1v1h-1zM669 670h1v1h-1zM669 660h1v1h-1zM669 650h1v1h-1zM669 640h1v1h-1zM669 629h1v1h-1zM669 619h1v1h-1zM669 609h1v1h-1zM669 599h1v1h-1zM669 588h1v1h-1zM669 578h1v1h-1zM669 568h1v1h-1zM669 558h1v1h-1zM669 547h1v1h-1zM669 537h1v1h-1zM669 527h1v1h-1zM669 517h1v1h-1zM669 506h1v1h-1zM669 496h1v1h-1zM669 486h1v1h-1zM669 476h1v1h-1zM669 465h1v1h-1zM669 455h1v1h-1zM669 445h1v1h-1zM669 435h1v1h-1zM669 424h1v1h-1zM669 414h1v1h-1zM669 404h1v1h-1zM669 394h1v1h-1zM669 383h1v1h-1zM669 373h1v1h-1zM669 363h1v1h-1zM669 353h1v1h-1zM669 342h1v1h-1zM669 332h1v1h-1zM669 322h1v1h-1zM669 312h1v1h-1zM669 301h1v1h-1zM669 291h1v1h-1zM669 281h1v1h-1zM669 271h1v1h-1zM669 260h1v1h-1zM669 250h1v1h-1zM669 240h1v1h-1zM669 230h1v1h-1zM669 219h1v1h-1zM669 209h1v1h-1zM669 199h1v1h-1zM669 189h1v1h-1zM669 178h1v1h-1zM669 168h1v1h-1zM669 158h1v1h-1zM679 722h1v1h-1zM679 711h1v1h-1zM679 701h1v1h-1zM679 691h1v1h-1zM679 681h1v1h-1zM679 670h1v1h-1zM679 660h1v1h-1zM679 650h1v1h-1zM679 640h1v1h-1zM679 629h1v1h-1zM679 619h1v1h-1zM679 609h1v1h-1zM679 599h1v1h-1zM679 588h1v1h-1zM679 578h1v1h-1zM679 568h1v1h-1zM679 558h1v1h-1zM679 547h1v1h-1zM679 537h1v1h-1zM679 527h1v1h-1zM679 517h1v1h-1zM679 506h1v1h-1zM679 496h1v1h-1zM679 486h1v1h-1zM679 476h1v1h-1zM679 465h1v1h-1zM679 455h1v1h-1zM679 445h1v1h-1zM679 435h1v1h-1zM679 424h1v1h-1zM679 414h1v1h-1zM679 404h1v1h-1zM679 394h1v1h-1zM679 383h1v1h-1zM679 373h1v1h-1zM679 363h1v1h-1zM679 353h1v1h-1zM679 342h1v1h-1zM679 332h1v1h-1zM679 322h1v1h-1zM679 312h1v1h-1zM679 301h1v1h-1zM679 291h1v1h-1zM679 281h1v1h-1zM679 271h1v1h-1zM679 260h1v1h-1zM679 250h1v1h-1zM679 240h1v1h-1zM679 230h1v1h-1zM679 219h1v1h-1zM679 209h1v1h-1zM679 199h1v1h-1zM679 189h1v1h-1zM679 178h1v1h-1zM679 168h1v1h-1zM679 158h1v1h-1zM689 722h1v1h-1zM689 711h1v1h-1zM689 701h1v1h-1zM689 691h1v1h-1zM689 681h1v1h-1zM689 670h1v1h-1zM689 660h1v1h-1zM689 650h1v1h-1zM689 640h1v1h-1zM689 629h1v1h-1zM689 619h1v1h-1zM689 609h1v1h-1zM689 599h1v1h-1zM689 588h1v1h-1zM689 578h1v1h-1zM689 568h1v1h-1zM689 558h1v1h-1zM689 547h1v1h-1zM689 537h1v1h-1zM689 527h1v1h-1zM689 517h1v1h-1zM689 506h1v1h-1zM689 496h1v1h-1zM689 486h1v1h-1zM689 476h1v1h-1zM689 465h1v1h-1zM689 455h1v1h-1zM689 445h1v1h-1zM689 435h1v1h-1zM689 424h1v1h-1zM689 414h1v1h-1zM689 404h1v1h-1zM689 394h1v1h-1zM689 383h1v1h-1zM689 373h1v1h-1zM689 363h1v1h-1zM689 353h1v1h-1zM689 342h1v1h-1zM689 332h1v1h-1zM689 322h1v1h-1zM689 312h1v1h-1zM689 301h1v1h-1zM689 291h1v1h-1zM689 281h1v1h-1zM689 271h1v1h-1zM689 260h1v1h-1zM689 250h1v1h-1zM689 240h1v1h-1zM689 230h1v1h-1zM689 219h1v1h-1zM689 209h1v1h-1zM689 199h1v1h-1zM689 189h1v1h-1zM689 178h1v1h-1zM689 168h1v1h-1zM689 158h1v1h-1zM700 722h1v1h-1zM700 711h1v1h-1zM700 701h1v1h-1zM700 691h1v1h-1zM700 681h1v1h-1zM700 670h1v1h-1zM700 660h1v1h-1zM700 650h1v1h-1zM700 640h1v1h-1zM700 629h1v1h-1zM700 619h1v1h-1zM700 609h1v1h-1zM700 599h1v1h-1zM700 588h1v1h-1zM700 578h1v1h-1zM700 568h1v1h-1zM700 558h1v1h-1zM700 547h1v1h-1zM700 537h1v1h-1zM700 527h1v1h-1zM700 517h1v1h-1zM700 506h1v1h-1zM700 496h1v1h-1zM700 486h1v1h-1zM700 476h1v1h-1zM700 465h1v1h-1zM700 455h1v1h-1zM700 445h1v1h-1zM700 435h1v1h-1zM700 424h1v1h-1zM700 414h1v1h-1zM700 404h1v1h-1zM700 394h1v1h-1zM700 383h1v1h-1zM700 373h1v1h-1zM700 363h1v1h-1zM700 353h1v1h-1zM700 342h1v1h-1zM700 332h1v1h-1zM700 322h1v1h-1zM700 312h1v1h-1zM700 301h1v1h-1zM700 291h1v1h-1zM700 281h1v1h-1zM700 271h1v1h-1zM700 260h1v1h-1zM700 250h1v1h-1zM700 240h1v1h-1zM700 230h1v1h-1zM700 219h1v1h-1zM700 209h1v1h-1zM700 199h1v1h-1zM700 189h1v1h-1zM700 178h1v1h-1zM700 168h1v1h-1zM700 158h1v1h-1zM710 722h1v1h-1zM710 711h1v1h-1zM710 701h1v1h-1zM710 691h1v1h-1zM710 681h1v1h-1zM710 670h1v1h-1zM710 660h1v1h-1zM710 650h1v1h-1zM710 640h1v1h-1zM710 629h1v1h-1zM710 619h1v1h-1zM710 609h1v1h-1zM710 599h1v1h-1zM710 588h1v1h-1zM710 578h1v1h-1zM710 568h1v1h-1zM710 558h1v1h-1zM710 547h1v1h-1zM710 537h1v1h-1zM710 527h1v1h-1zM710 517h1v1h-1zM710 506h1v1h-1zM710 496h1v1h-1zM710 486h1v1h-1zM710 476h1v1h-1zM710 465h1v1h-1zM710 455h1v1h-1zM710 445h1v1h-1zM710 435h1v1h-1zM710 424h1v1h-1zM710 414h1v1h-1zM710 404h1v1h-1zM710 394h1v1h-1zM710 383h1v1h-1zM710 373h1v1h-1zM710 363h1v1h-1zM710 353h1v1h-1zM710 342h1v1h-1zM710 332h1v1h-1zM710 322h1v1h-1zM710 312h1v1h-1zM710 301h1v1h-1zM710 291h1v1h-1zM710 281h1v1h-1zM710 271h1v1h-1zM710 260h1v1h-1zM710 250h1v1h-1zM710 240h1v1h-1zM710 230h1v1h-1zM710 219h1v1h-1zM710 209h1v1h-1zM710 199h1v1h-1zM710 189h1v1h-1zM710 178h1v1h-1zM710 168h1v1h-1zM710 158h1v1h-1zM720 722h1v1h-1zM720 711h1v1h-1zM720 701h1v1h-1zM720 691h1v1h-1zM720 681h1v1h-1zM720 670h1v1h-1zM720 660h1v1h-1zM720 650h1v1h-1zM720 640h1v1h-1zM720 629h1v1h-1zM720 619h1v1h-1zM720 609h1v1h-1zM720 599h1v1h-1zM720 588h1v1h-1zM720 578h1v1h-1zM720 568h1v1h-1zM720 558h1v1h-1zM720 547h1v1h-1zM720 537h1v1h-1zM720 527h1v1h-1zM720 517h1v1h-1zM720 506h1v1h-1zM720 496h1v1h-1zM720 486h1v1h-1zM720 476h1v1h-1zM720 465h1v1h-1zM720 455h1v1h-1zM720 445h1v1h-1zM720 435h1v1h-1zM720 424h1v1h-1zM720 414h1v1h-1zM720 404h1v1h-1zM720 394h1v1h-1zM720 383h1v1h-1zM720 373h1v1h-1zM720 363h1v1h-1zM720 353h1v1h-1zM720 342h1v1h-1zM720 332h1v1h-1zM720 322h1v1h-1zM720 312h1v1h-1zM720 301h1v1h-1zM720 291h1v1h-1zM720 281h1v1h-1zM720 271h1v1h-1zM720 260h1v1h-1zM720 250h1v1h-1zM720 240h1v1h-1zM720 230h1v1h-1zM720 219h1v1h-1zM720 209h1v1h-1zM720 199h1v1h-1zM720 189h1v1h-1zM720 178h1v1h-1zM720 168h1v1h-1zM720 158h1v1h-1zM730 722h1v1h-1zM730 711h1v1h-1zM730 701h1v1h-1zM730 691h1v1h-1zM730 681h1v1h-1zM730 670h1v1h-1zM730 660h1v1h-1zM730 650h1v1h-1zM730 640h1v1h-1zM730 629h1v1h-1zM730 619h1v1h-1zM730 609h1v1h-1zM730 599h1v1h-1zM730 588h1v1h-1zM730 578h1v1h-1zM730 568h1v1h-1zM730 558h1v1h-1zM730 547h1v1h-1zM730 537h1v1h-1zM730 527h1v1h-1zM730 517h1v1h-1zM730 506h1v1h-1zM730 496h1v1h-1zM730 486h1v1h-1zM730 476h1v1h-1zM730 465h1v1h-1zM730 455h1v1h-1zM730 445h1v1h-1zM730 435h1v1h-1zM730 424h1v1h-1zM730 414h1v1h-1zM730 404h1v1h-1zM730 394h1v1h-1zM730 383h1v1h-1zM730 373h1v1h-1zM730 363h1v1h-1zM730 353h1v1h-1zM730 342h1v1h-1zM730 332h1v1h-1zM730 322h1v1h-1zM730 312h1v1h-1zM730 301h1v1h-1zM730 291h1v1h-1zM730 281h1v1h-1zM730 271h1v1h-1zM730 260h1v1h-1zM730 250h1v1h-1zM730 240h1v1h-1zM730 230h1v1h-1zM730 219h1v1h-1zM730 209h1v1h-1zM730 199h1v1h-1zM730 189h1v1h-1zM730 178h1v1h-1zM730 168h1v1h-1zM730 158h1v1h-1zM741 722h1v1h-1zM741 711h1v1h-1zM741 701h1v1h-1zM741 691h1v1h-1zM741 681h1v1h-1zM741 670h1v1h-1zM741 660h1v1h-1zM741 650h1v1h-1zM741 640h1v1h-1zM741 629h1v1h-1zM741 619h1v1h-1zM741 609h1v1h-1zM741 599h1v1h-1zM741 588h1v1h-1zM741 578h1v1h-1zM741 568h1v1h-1zM741 558h1v1h-1zM741 547h1v1h-1zM741 537h1v1h-1zM741 527h1v1h-1zM741 517h1v1h-1zM741 506h1v1h-1zM741 496h1v1h-1zM741 486h1v1h-1zM741 476h1v1h-1zM741 465h1v1h-1zM741 455h1v1h-1zM741 445h1v1h-1zM741 435h1v1h-1zM741 424h1v1h-1zM741 414h1v1h-1zM741 404h1v1h-1zM741 394h1v1h-1zM741 383h1v1h-1zM741 373h1v1h-1zM741 363h1v1h-1zM741 353h1v1h-1zM741 342h1v1h-1zM741 332h1v1h-1zM741 322h1v1h-1zM741 312h1v1h-1zM741 301h1v1h-1zM741 291h1v1h-1zM741 281h1v1h-1zM741 271h1v1h-1zM741 260h1v1h-1zM741 250h1v1h-1zM741 240h1v1h-1zM741 230h1v1h-1zM741 219h1v1h-1zM741 209h1v1h-1zM741 199h1v1h-1zM741 189h1v1h-1zM741 178h1v1h-1zM741 168h1v1h-1zM741 158h1v1h-1zM751 722h1v1h-1zM751 711h1v1h-1zM751 701h1v1h-1zM751 691h1v1h-1zM751 681h1v1h-1zM751 670h1v1h-1zM751 660h1v1h-1zM751 650h1v1h-1zM751 640h1v1h-1zM751 629h1v1h-1zM751 619h1v1h-1zM751 609h1v1h-1zM751 599h1v1h-1zM751 588h1v1h-1zM751 578h1v1h-1zM751 568h1v1h-1zM751 558h1v1h-1zM751 547h1v1h-1zM751 537h1v1h-1zM751 527h1v1h-1zM751 517h1v1h-1zM751 506h1v1h-1zM751 496h1v1h-1zM751 486h1v1h-1zM751 476h1v1h-1zM751 465h1v1h-1zM751 455h1v1h-1zM751 445h1v1h-1zM751 435h1v1h-1zM751 424h1v1h-1zM751 414h1v1h-1zM751 404h1v1h-1zM751 394h1v1h-1zM751 383h1v1h-1zM751 373h1v1h-1zM751 363h1v1h-1zM751 353h1v1h-1zM751 342h1v1h-1zM751 332h1v1h-1zM751 322h1v1h-1zM751 312h1v1h-1zM751 301h1v1h-1zM751 291h1v1h-1zM751 281h1v1h-1zM751 271h1v1h-1zM751 260h1v1h-1zM751 250h1v1h-1zM751 240h1v1h-1zM751 230h1v1h-1zM751 219h1v1h-1zM751 209h1v1h-1zM751 199h1v1h-1zM751 189h1v1h-1zM751 178h1v1h-1zM751 168h1v1h-1zM751 158h1v1h-1zM761 722h1v1h-1zM761 711h1v1h-1zM761 701h1v1h-1zM761 691h1v1h-1zM761 681h1v1h-1zM761 670h1v1h-1zM761 660h1v1h-1zM761 650h1v1h-1zM761 640h1v1h-1zM761 629h1v1h-1zM761 619h1v1h-1zM761 609h1v1h-1zM761 599h1v1h-1zM761 588h1v1h-1zM761 578h1v1h-1zM761 568h1v1h-1zM761 558h1v1h-1zM761 547h1v1h-1zM761 537h1v1h-1zM761 527h1v1h-1zM761 517h1v1h-1zM761 506h1v1h-1zM761 496h1v1h-1zM761 486h1v1h-1zM761 476h1v1h-1zM761 465h1v1h-1zM761 455h1v1h-1zM761 445h1v1h-1zM761 435h1v1h-1zM761 424h1v1h-1zM761 414h1v1h-1zM761 404h1v1h-1zM761 394h1v1h-1zM761 383h1v1h-1zM761 373h1v1h-1zM761 363h1v1h-1zM761 353h1v1h-1zM761 342h1v1h-1zM761 332h1v1h-1zM761 322h1v1h-1zM761 312h1v1h-1zM761 301h1v1h-1zM761 291h1v1h-1zM761 281h1v1h-1zM761 271h1v1h-1zM761 260h1v1h-1zM761 250h1v1h-1zM761 240h1v1h-1zM761 230h1v1h-1zM761 219h1v1h-1zM761 209h1v1h-1zM761 199h1v1h-1zM761 189h1v1h-1zM761 178h1v1h-1zM761 168h1v1h-1zM761 158h1v1h-1zM771 722h1v1h-1zM771 711h1v1h-1zM771 701h1v1h-1zM771 691h1v1h-1zM771 681h1v1h-1zM771 670h1v1h-1zM771 660h1v1h-1zM771 650h1v1h-1zM771 640h1v1h-1zM771 629h1v1h-1zM771 619h1v1h-1zM771 609h1v1h-1zM771 599h1v1h-1zM771 588h1v1h-1zM771 578h1v1h-1zM771 568h1v1h-1zM771 558h1v1h-1zM771 547h1v1h-1zM771 537h1v1h-1zM771 527h1v1h-1zM771 517h1v1h-1zM771 506h1v1h-1zM771 496h1v1h-1zM771 486h1v1h-1zM771 476h1v1h-1zM771 465h1v1h-1zM771 455h1v1h-1zM771 445h1v1h-1zM771 435h1v1h-1zM771 424h1v1h-1zM771 414h1v1h-1zM771 404h1v1h-1zM771 394h1v1h-1zM771 383h1v1h-1zM771 373h1v1h-1zM771 363h1v1h-1zM771 353h1v1h-1zM771 342h1v1h-1zM771 332h1v1h-1zM771 322h1v1h-1zM771 312h1v1h-1zM771 301h1v1h-1zM771 291h1v1h-1zM771 281h1v1h-1zM771 271h1v1h-1zM771 260h1v1h-1zM771 250h1v1h-1zM771 240h1v1h-1zM771 230h1v1h-1zM771 219h1v1h-1zM771 209h1v1h-1zM771 199h1v1h-1zM771 189h1v1h-1zM771 178h1v1h-1zM771 168h1v1h-1zM771 158h1v1h-1zM782 722h1v1h-1zM782 711h1v1h-1zM782 701h1v1h-1zM782 691h1v1h-1zM782 681h1v1h-1zM782 670h1v1h-1zM782 660h1v1h-1zM782 650h1v1h-1zM782 640h1v1h-1zM782 629h1v1h-1zM782 619h1v1h-1zM782 609h1v1h-1zM782 599h1v1h-1zM782 588h1v1h-1zM782 578h1v1h-1zM782 568h1v1h-1zM782 558h1v1h-1zM782 547h1v1h-1zM782 537h1v1h-1zM782 527h1v1h-1zM782 517h1v1h-1zM782 506h1v1h-1zM782 496h1v1h-1zM782 486h1v1h-1zM782 476h1v1h-1zM782 465h1v1h-1zM782 455h1v1h-1zM782 445h1v1h-1zM782 435h1v1h-1zM782 424h1v1h-1zM782 414h1v1h-1zM782 404h1v1h-1zM782 394h1v1h-1zM782 383h1v1h-1zM782 373h1v1h-1zM782 363h1v1h-1zM782 353h1v1h-1zM782 342h1v1h-1zM782 332h1v1h-1zM782 322h1v1h-1zM782 312h1v1h-1zM782 301h1v1h-1zM782 291h1v1h-1zM782 281h1v1h-1zM782 271h1v1h-1zM782 260h1v1h-1zM782 250h1v1h-1zM782 240h1v1h-1zM782 230h1v1h-1zM782 219h1v1h-1zM782 209h1v1h-1zM782 199h1v1h-1zM782 189h1v1h-1zM782 178h1v1h-1zM782 168h1v1h-1zM782 158h1v1h-1zM792 722h1v1h-1zM792 711h1v1h-1zM792 701h1v1h-1zM792 691h1v1h-1zM792 681h1v1h-1zM792 670h1v1h-1zM792 660h1v1h-1zM792 650h1v1h-1zM792 640h1v1h-1zM792 629h1v1h-1zM792 619h1v1h-1zM792 609h1v1h-1zM792 599h1v1h-1zM792 588h1v1h-1zM792 578h1v1h-1zM792 568h1v1h-1zM792 558h1v1h-1zM792 547h1v1h-1zM792 537h1v1h-1zM792 527h1v1h-1zM792 517h1v1h-1zM792 506h1v1h-1zM792 496h1v1h-1zM792 486h1v1h-1zM792 476h1v1h-1zM792 465h1v1h-1zM792 455h1v1h-1zM792 445h1v1h-1zM792 435h1v1h-1zM792 424h1v1h-1zM792 414h1v1h-1zM792 404h1v1h-1zM792 394h1v1h-1zM792 383h1v1h-1zM792 373h1v1h-1zM792 363h1v1h-1zM792 353h1v1h-1zM792 342h1v1h-1zM792 332h1v1h-1zM792 322h1v1h-1zM792 312h1v1h-1zM792 301h1v1h-1zM792 291h1v1h-1zM792 281h1v1h-1zM792 271h1v1h-1zM792 260h1v1h-1zM792 250h1v1h-1zM792 240h1v1h-1zM792 230h1v1h-1zM792 219h1v1h-1zM792 209h1v1h-1zM792 199h1v1h-1zM792 189h1v1h-1zM792 178h1v1h-1zM792 168h1v1h-1zM792 158h1v1h-1zM802 722h1v1h-1zM802 711h1v1h-1zM802 701h1v1h-1zM802 691h1v1h-1zM802 681h1v1h-1zM802 670h1v1h-1zM802 660h1v1h-1zM802 650h1v1h-1zM802 640h1v1h-1zM802 629h1v1h-1zM802 619h1v1h-1zM802 609h1v1h-1zM802 599h1v1h-1zM802 588h1v1h-1zM802 578h1v1h-1zM802 568h1v1h-1zM802 558h1v1h-1zM802 547h1v1h-1zM802 537h1v1h-1zM802 527h1v1h-1zM802 517h1v1h-1zM802 506h1v1h-1zM802 496h1v1h-1zM802 486h1v1h-1zM802 476h1v1h-1zM802 465h1v1h-1zM802 455h1v1h-1zM802 445h1v1h-1zM802 435h1v1h-1zM802 424h1v1h-1zM802 414h1v1h-1zM802 404h1v1h-1zM802 394h1v1h-1zM802 383h1v1h-1zM802 373h1v1h-1zM802 363h1v1h-1zM802 353h1v1h-1zM802 342h1v1h-1zM802 332h1v1h-1zM802 322h1v1h-1zM802 312h1v1h-1zM802 301h1v1h-1zM802 291h1v1h-1zM802 281h1v1h-1zM802 271h1v1h-1zM802 260h1v1h-1zM802 250h1v1h-1zM802 240h1v1h-1zM802 230h1v1h-1zM802 219h1v1h-1zM802 209h1v1h-1zM802 199h1v1h-1zM802 189h1v1h-1zM802 178h1v1h-1zM802 168h1v1h-1zM802 158h1v1h-1zM812 722h1v1h-1zM812 711h1v1h-1zM812 701h1v1h-1zM812 691h1v1h-1zM812 681h1v1h-1zM812 670h1v1h-1zM812 660h1v1h-1zM812 650h1v1h-1zM812 640h1v1h-1zM812 629h1v1h-1zM812 619h1v1h-1zM812 609h1v1h-1zM812 599h1v1h-1zM812 588h1v1h-1zM812 578h1v1h-1zM812 568h1v1h-1zM812 558h1v1h-1zM812 547h1v1h-1zM812 537h1v1h-1zM812 527h1v1h-1zM812 517h1v1h-1zM812 506h1v1h-1zM812 496h1v1h-1zM812 486h1v1h-1zM812 476h1v1h-1zM812 465h1v1h-1zM812 455h1v1h-1zM812 445h1v1h-1zM812 435h1v1h-1zM812 424h1v1h-1zM812 414h1v1h-1zM812 404h1v1h-1zM812 394h1v1h-1zM812 383h1v1h-1zM812 373h1v1h-1zM812 363h1v1h-1zM812 353h1v1h-1zM812 342h1v1h-1zM812 332h1v1h-1zM812 322h1v1h-1zM812 312h1v1h-1zM812 301h1v1h-1zM812 291h1v1h-1zM812 281h1v1h-1zM812 271h1v1h-1zM812 260h1v1h-1zM812 250h1v1h-1zM812 240h1v1h-1zM812 230h1v1h-1zM812 219h1v1h-1zM812 209h1v1h-1zM812 199h1v1h-1zM812 189h1v1h-1zM812 178h1v1h-1zM812 168h1v1h-1zM812 158h1v1h-1zM823 722h1v1h-1zM823 711h1v1h-1zM823 701h1v1h-1zM823 691h1v1h-1zM823 681h1v1h-1zM823 670h1v1h-1zM823 660h1v1h-1zM823 650h1v1h-1zM823 640h1v1h-1zM823 629h1v1h-1zM823 619h1v1h-1zM823 609h1v1h-1zM823 599h1v1h-1zM823 588h1v1h-1zM823 578h1v1h-1zM823 568h1v1h-1zM823 558h1v1h-1zM823 547h1v1h-1zM823 537h1v1h-1zM823 527h1v1h-1zM823 517h1v1h-1zM823 506h1v1h-1zM823 496h1v1h-1zM823 486h1v1h-1zM823 476h1v1h-1zM823 465h1v1h-1zM823 455h1v1h-1zM823 445h1v1h-1zM823 435h1v1h-1zM823 424h1v1h-1zM823 414h1v1h-1zM823 404h1v1h-1zM823 394h1v1h-1zM823 383h1v1h-1zM823 373h1v1h-1zM823 363h1v1h-1zM823 353h1v1h-1zM823 342h1v1h-1zM823 332h1v1h-1zM823 322h1v1h-1zM823 312h1v1h-1zM823 301h1v1h-1zM823 291h1v1h-1zM823 281h1v1h-1zM823 271h1v1h-1zM823 260h1v1h-1zM823 250h1v1h-1zM823 240h1v1h-1zM823 230h1v1h-1zM823 219h1v1h-1zM823 209h1v1h-1zM823 199h1v1h-1zM823 189h1v1h-1zM823 178h1v1h-1zM823 168h1v1h-1zM823 158h1v1h-1zM833 722h1v1h-1zM833 711h1v1h-1zM833 701h1v1h-1zM833 691h1v1h-1zM833 681h1v1h-1zM833 670h1v1h-1zM833 660h1v1h-1zM833 650h1v1h-1zM833 640h1v1h-1zM833 629h1v1h-1zM833 619h1v1h-1zM833 609h1v1h-1zM833 599h1v1h-1zM833 588h1v1h-1zM833 578h1v1h-1zM833 568h1v1h-1zM833 558h1v1h-1zM833 547h1v1h-1zM833 537h1v1h-1zM833 527h1v1h-1zM833 517h1v1h-1zM833 506h1v1h-1zM833 496h1v1h-1zM833 486h1v1h-1zM833 476h1v1h-1zM833 465h1v1h-1zM833 455h1v1h-1zM833 445h1v1h-1zM833 435h1v1h-1zM833 424h1v1h-1zM833 414h1v1h-1zM833 404h1v1h-1zM833 394h1v1h-1zM833 383h1v1h-1zM833 373h1v1h-1zM833 363h1v1h-1zM833 353h1v1h-1zM833 342h1v1h-1zM833 332h1v1h-1zM833 322h1v1h-1zM833 312h1v1h-1zM833 301h1v1h-1zM833 291h1v1h-1zM833 281h1v1h-1zM833 271h1v1h-1zM833 260h1v1h-1zM833 250h1v1h-1zM833 240h1v1h-1zM833 230h1v1h-1zM833 219h1v1h-1zM833 209h1v1h-1zM833 199h1v1h-1zM833 189h1v1h-1zM833 178h1v1h-1zM833 168h1v1h-1zM833 158h1v1h-1zM843 722h1v1h-1zM843 711h1v1h-1zM843 701h1v1h-1zM843 691h1v1h-1zM843 681h1v1h-1zM843 670h1v1h-1zM843 660h1v1h-1zM843 650h1v1h-1zM843 640h1v1h-1zM843 629h1v1h-1zM843 619h1v1h-1zM843 609h1v1h-1zM843 599h1v1h-1zM843 588h1v1h-1zM843 578h1v1h-1zM843 568h1v1h-1zM843 558h1v1h-1zM843 547h1v1h-1zM843 537h1v1h-1zM843 527h1v1h-1zM843 517h1v1h-1zM843 506h1v1h-1zM843 496h1v1h-1zM843 486h1v1h-1zM843 476h1v1h-1zM843 465h1v1h-1zM843 455h1v1h-1zM843 445h1v1h-1zM843 435h1v1h-1zM843 424h1v1h-1zM843 414h1v1h-1zM843 404h1v1h-1zM843 394h1v1h-1zM843 383h1v1h-1zM843 373h1v1h-1zM843 363h1v1h-1zM843 353h1v1h-1zM843 342h1v1h-1zM843 332h1v1h-1zM843 322h1v1h-1zM843 312h1v1h-1zM843 301h1v1h-1zM843 291h1v1h-1zM843 281h1v1h-1zM843 271h1v1h-1zM843 260h1v1h-1zM843 250h1v1h-1zM843 240h1v1h-1zM843 230h1v1h-1zM843 219h1v1h-1zM843 209h1v1h-1zM843 199h1v1h-1zM843 189h1v1h-1zM843 178h1v1h-1zM843 168h1v1h-1zM843 158h1v1h-1zM853 722h1v1h-1zM853 711h1v1h-1zM853 701h1v1h-1zM853 691h1v1h-1zM853 681h1v1h-1zM853 670h1v1h-1zM853 660h1v1h-1zM853 650h1v1h-1zM853 640h1v1h-1zM853 629h1v1h-1zM853 619h1v1h-1zM853 609h1v1h-1zM853 599h1v1h-1zM853 588h1v1h-1zM853 578h1v1h-1zM853 568h1v1h-1zM853 558h1v1h-1zM853 547h1v1h-1zM853 537h1v1h-1zM853 527h1v1h-1zM853 517h1v1h-1zM853 506h1v1h-1zM853 496h1v1h-1zM853 486h1v1h-1zM853 476h1v1h-1zM853 465h1v1h-1zM853 455h1v1h-1zM853 445h1v1h-1zM853 435h1v1h-1zM853 424h1v1h-1zM853 414h1v1h-1zM853 404h1v1h-1zM853 394h1v1h-1zM853 383h1v1h-1zM853 373h1v1h-1zM853 363h1v1h-1zM853 353h1v1h-1zM853 342h1v1h-1zM853 332h1v1h-1zM853 322h1v1h-1zM853 312h1v1h-1zM853 301h1v1h-1zM853 291h1v1h-1zM853 281h1v1h-1zM853 271h1v1h-1zM853 260h1v1h-1zM853 250h1v1h-1zM853 240h1v1h-1zM853 230h1v1h-1zM853 219h1v1h-1zM853 209h1v1h-1zM853 199h1v1h-1zM853 189h1v1h-1zM853 178h1v1h-1zM853 168h1v1h-1zM853 158h1v1h-1zM864 722h1v1h-1zM864 711h1v1h-1zM864 701h1v1h-1zM864 691h1v1h-1zM864 681h1v1h-1zM864 670h1v1h-1zM864 660h1v1h-1zM864 650h1v1h-1zM864 640h1v1h-1zM864 629h1v1h-1zM864 619h1v1h-1zM864 609h1v1h-1zM864 599h1v1h-1zM864 588h1v1h-1zM864 578h1v1h-1zM864 568h1v1h-1zM864 558h1v1h-1zM864 547h1v1h-1zM864 537h1v1h-1zM864 527h1v1h-1zM864 517h1v1h-1zM864 506h1v1h-1zM864 496h1v1h-1zM864 486h1v1h-1zM864 476h1v1h-1zM864 465h1v1h-1zM864 455h1v1h-1zM864 445h1v1h-1zM864 435h1v1h-1zM864 424h1v1h-1zM864 414h1v1h-1zM864 404h1v1h-1zM864 394h1v1h-1zM864 383h1v1h-1zM864 373h1v1h-1zM864 363h1v1h-1zM864 353h1v1h-1zM864 342h1v1h-1zM864 332h1v1h-1zM864 322h1v1h-1zM864 312h1v1h-1zM864 301h1v1h-1zM864 291h1v1h-1zM864 281h1v1h-1zM864 271h1v1h-1zM864 260h1v1h-1zM864 250h1v1h-1zM864 240h1v1h-1zM864 230h1v1h-1zM864 219h1v1h-1zM864 209h1v1h-1zM864 199h1v1h-1zM864 189h1v1h-1zM864 178h1v1h-1zM864 168h1v1h-1zM864 158h1v1h-1zM874 722h1v1h-1zM874 711h1v1h-1zM874 701h1v1h-1zM874 691h1v1h-1zM874 681h1v1h-1zM874 670h1v1h-1zM874 660h1v1h-1zM874 650h1v1h-1zM874 640h1v1h-1zM874 629h1v1h-1zM874 619h1v1h-1zM874 609h1v1h-1zM874 599h1v1h-1zM874 588h1v1h-1zM874 578h1v1h-1zM874 568h1v1h-1zM874 558h1v1h-1zM874 547h1v1h-1zM874 537h1v1h-1zM874 527h1v1h-1zM874 517h1v1h-1zM874 506h1v1h-1zM874 496h1v1h-1zM874 486h1v1h-1zM874 476h1v1h-1zM874 465h1v1h-1zM874 455h1v1h-1zM874 445h1v1h-1zM874 435h1v1h-1zM874 424h1v1h-1zM874 414h1v1h-1zM874 404h1v1h-1zM874 394h1v1h-1zM874 383h1v1h-1zM874 373h1v1h-1zM874 363h1v1h-1zM874 353h1v1h-1zM874 342h1v1h-1zM874 332h1v1h-1zM874 322h1v1h-1zM874 312h1v1h-1zM874 301h1v1h-1zM874 291h1v1h-1zM874 281h1v1h-1zM874 271h1v1h-1zM874 260h1v1h-1zM874 250h1v1h-1zM874 240h1v1h-1zM874 230h1v1h-1zM874 219h1v1h-1zM874 209h1v1h-1zM874 199h1v1h-1zM874 189h1v1h-1zM874 178h1v1h-1zM874 168h1v1h-1zM874 158h1v1h-1zM884 722h1v1h-1zM884 711h1v1h-1zM884 701h1v1h-1zM884 691h1v1h-1zM884 681h1v1h-1zM884 670h1v1h-1zM884 660h1v1h-1zM884 650h1v1h-1zM884 640h1v1h-1zM884 629h1v1h-1zM884 619h1v1h-1zM884 609h1v1h-1zM884 599h1v1h-1zM884 588h1v1h-1zM884 578h1v1h-1zM884 568h1v1h-1zM884 558h1v1h-1zM884 547h1v1h-1zM884 537h1v1h-1zM884 527h1v1h-1zM884 517h1v1h-1zM884 506h1v1h-1zM884 496h1v1h-1zM884 486h1v1h-1zM884 476h1v1h-1zM884 465h1v1h-1zM884 455h1v1h-1zM884 445h1v1h-1zM884 435h1v1h-1zM884 424h1v1h-1zM884 414h1v1h-1zM884 404h1v1h-1zM884 394h1v1h-1zM884 383h1v1h-1zM884 373h1v1h-1zM884 363h1v1h-1zM884 353h1v1h-1zM884 342h1v1h-1zM884 332h1v1h-1zM884 322h1v1h-1zM884 312h1v1h-1zM884 301h1v1h-1zM884 291h1v1h-1zM884 281h1v1h-1zM884 271h1v1h-1zM884 260h1v1h-1zM884 250h1v1h-1zM884 240h1v1h-1zM884 230h1v1h-1zM884 219h1v1h-1zM884 209h1v1h-1zM884 199h1v1h-1zM884 189h1v1h-1zM884 178h1v1h-1zM884 168h1v1h-1zM884 158h1v1h-1zM894 722h1v1h-1zM894 711h1v1h-1zM894 701h1v1h-1zM894 691h1v1h-1zM894 681h1v1h-1zM894 670h1v1h-1zM894 660h1v1h-1zM894 650h1v1h-1zM894 640h1v1h-1zM894 629h1v1h-1zM894 619h1v1h-1zM894 609h1v1h-1zM894 599h1v1h-1zM894 588h1v1h-1zM894 578h1v1h-1zM894 568h1v1h-1zM894 558h1v1h-1zM894 547h1v1h-1zM894 537h1v1h-1zM894 527h1v1h-1zM894 517h1v1h-1zM894 506h1v1h-1zM894 496h1v1h-1zM894 486h1v1h-1zM894 476h1v1h-1zM894 465h1v1h-1zM894 455h1v1h-1zM894 445h1v1h-1zM894 435h1v1h-1zM894 424h1v1h-1zM894 414h1v1h-1zM894 404h1v1h-1zM894 394h1v1h-1zM894 383h1v1h-1zM894 373h1v1h-1zM894 363h1v1h-1zM894 353h1v1h-1zM894 342h1v1h-1zM894 332h1v1h-1zM894 322h1v1h-1zM894 312h1v1h-1zM894 301h1v1h-1zM894 291h1v1h-1zM894 281h1v1h-1zM894 271h1v1h-1zM894 260h1v1h-1zM894 250h1v1h-1zM894 240h1v1h-1zM894 230h1v1h-1zM894 219h1v1h-1zM894 209h1v1h-1zM894 199h1v1h-1zM894 189h1v1h-1zM894 178h1v1h-1zM894 168h1v1h-1zM894 158h1v1h-1zM905 722h1v1h-1zM905 711h1v1h-1zM905 701h1v1h-1zM905 691h1v1h-1zM905 681h1v1h-1zM905 670h1v1h-1zM905 660h1v1h-1zM905 650h1v1h-1zM905 640h1v1h-1zM905 629h1v1h-1zM905 619h1v1h-1zM905 609h1v1h-1zM905 599h1v1h-1zM905 588h1v1h-1zM905 578h1v1h-1zM905 568h1v1h-1zM905 558h1v1h-1zM905 547h1v1h-1zM905 537h1v1h-1zM905 527h1v1h-1zM905 517h1v1h-1zM905 506h1v1h-1zM905 496h1v1h-1zM905 486h1v1h-1zM905 476h1v1h-1zM905 465h1v1h-1zM905 455h1v1h-1zM905 445h1v1h-1zM905 435h1v1h-1zM905 424h1v1h-1zM905 414h1v1h-1zM905 404h1v1h-1zM905 394h1v1h-1zM905 383h1v1h-1zM905 373h1v1h-1zM905 363h1v1h-1zM905 353h1v1h-1zM905 342h1v1h-1zM905 332h1v1h-1zM905 322h1v1h-1zM905 312h1v1h-1zM905 301h1v1h-1zM905 291h1v1h-1zM905 281h1v1h-1zM905 271h1v1h-1zM905 260h1v1h-1zM905 250h1v1h-1zM905 240h1v1h-1zM905 230h1v1h-1zM905 219h1v1h-1zM905 209h1v1h-1zM905 199h1v1h-1zM905 189h1v1h-1zM905 178h1v1h-1zM905 168h1v1h-1zM905 158h1v1h-1zM915 722h1v1h-1zM915 711h1v1h-1zM915 701h1v1h-1zM915 691h1v1h-1zM915 681h1v1h-1zM915 670h1v1h-1zM915 660h1v1h-1zM915 650h1v1h-1zM915 640h1v1h-1zM915 629h1v1h-1zM915 619h1v1h-1zM915 609h1v1h-1zM915 599h1v1h-1zM915 588h1v1h-1zM915 578h1v1h-1zM915 568h1v1h-1zM915 558h1v1h-1zM915 547h1v1h-1zM915 537h1v1h-1zM915 527h1v1h-1zM915 517h1v1h-1zM915 506h1v1h-1zM915 496h1v1h-1zM915 486h1v1h-1zM915 476h1v1h-1zM915 465h1v1h-1zM915 455h1v1h-1zM915 445h1v1h-1zM915 435h1v1h-1zM915 424h1v1h-1zM915 414h1v1h-1zM915 404h1v1h-1zM915 394h1v1h-1zM915 383h1v1h-1zM915 373h1v1h-1zM915 363h1v1h-1zM915 353h1v1h-1zM915 342h1v1h-1zM915 332h1v1h-1zM915 322h1v1h-1zM915 312h1v1h-1zM915 301h1v1h-1zM915 291h1v1h-1zM915 281h1v1h-1zM915 271h1v1h-1zM915 260h1v1h-1zM915 250h1v1h-1zM915 240h1v1h-1zM915 230h1v1h-1zM915 219h1v1h-1zM915 209h1v1h-1zM915 199h1v1h-1zM915 189h1v1h-1zM915 178h1v1h-1zM915 168h1v1h-1zM915 158h1v1h-1zM925 722h1v1h-1zM925 711h1v1h-1zM925 701h1v1h-1zM925 691h1v1h-1zM925 681h1v1h-1zM925 670h1v1h-1zM925 660h1v1h-1zM925 650h1v1h-1zM925 640h1v1h-1zM925 629h1v1h-1zM925 619h1v1h-1zM925 609h1v1h-1zM925 599h1v1h-1zM925 588h1v1h-1zM925 578h1v1h-1zM925 568h1v1h-1zM925 558h1v1h-1zM925 547h1v1h-1zM925 537h1v1h-1zM925 527h1v1h-1zM925 517h1v1h-1zM925 506h1v1h-1zM925 496h1v1h-1zM925 486h1v1h-1zM925 476h1v1h-1zM925 465h1v1h-1zM925 455h1v1h-1zM925 445h1v1h-1zM925 435h1v1h-1zM925 424h1v1h-1zM925 414h1v1h-1zM925 404h1v1h-1zM925 394h1v1h-1zM925 383h1v1h-1zM925 373h1v1h-1zM925 363h1v1h-1zM925 353h1v1h-1zM925 342h1v1h-1zM925 332h1v1h-1zM925 322h1v1h-1zM925 312h1v1h-1zM925 301h1v1h-1zM925 291h1v1h-1zM925 281h1v1h-1zM925 271h1v1h-1zM925 260h1v1h-1zM925 250h1v1h-1zM925 240h1v1h-1zM925 230h1v1h-1zM925 219h1v1h-1zM925 209h1v1h-1zM925 199h1v1h-1zM925 189h1v1h-1zM925 178h1v1h-1zM925 168h1v1h-1zM925 158h1v1h-1zM935 722h1v1h-1zM935 711h1v1h-1zM935 701h1v1h-1zM935 691h1v1h-1zM935 681h1v1h-1zM935 670h1v1h-1zM935 660h1v1h-1zM935 650h1v1h-1zM935 640h1v1h-1zM935 629h1v1h-1zM935 619h1v1h-1zM935 609h1v1h-1zM935 599h1v1h-1zM935 588h1v1h-1zM935 578h1v1h-1zM935 568h1v1h-1zM935 558h1v1h-1zM935 547h1v1h-1zM935 537h1v1h-1zM935 527h1v1h-1zM935 517h1v1h-1zM935 506h1v1h-1zM935 496h1v1h-1zM935 486h1v1h-1zM935 476h1v1h-1zM935 465h1v1h-1zM935 455h1v1h-1zM935 445h1v1h-1zM935 435h1v1h-1zM935 424h1v1h-1zM935 414h1v1h-1zM935 404h1v1h-1zM935 394h1v1h-1zM935 383h1v1h-1zM935 373h1v1h-1zM935 363h1v1h-1zM935 353h1v1h-1zM935 342h1v1h-1zM935 332h1v1h-1zM935 322h1v1h-1zM935 312h1v1h-1zM935 301h1v1h-1zM935 291h1v1h-1zM935 281h1v1h-1zM935 271h1v1h-1zM935 260h1v1h-1zM935 250h1v1h-1zM935 240h1v1h-1zM935 230h1v1h-1zM935 219h1v1h-1zM935 209h1v1h-1zM935 199h1v1h-1zM935 189h1v1h-1zM935 178h1v1h-1zM935 168h1v1h-1zM935 158h1v1h-1zM946 722h1v1h-1zM946 711h1v1h-1zM946 701h1v1h-1zM946 691h1v1h-1zM946 681h1v1h-1zM946 670h1v1h-1zM946 660h1v1h-1zM946 650h1v1h-1zM946 640h1v1h-1zM946 629h1v1h-1zM946 619h1v1h-1zM946 609h1v1h-1zM946 599h1v1h-1zM946 588h1v1h-1zM946 578h1v1h-1zM946 568h1v1h-1zM946 558h1v1h-1zM946 547h1v1h-1zM946 537h1v1h-1zM946 527h1v1h-1zM946 517h1v1h-1zM946 506h1v1h-1zM946 496h1v1h-1zM946 486h1v1h-1zM946 476h1v1h-1zM946 465h1v1h-1zM946 455h1v1h-1zM946 445h1v1h-1zM946 435h1v1h-1zM946 424h1v1h-1zM946 414h1v1h-1zM946 404h1v1h-1zM946 394h1v1h-1zM946 383h1v1h-1zM946 373h1v1h-1zM946 363h1v1h-1zM946 353h1v1h-1zM946 342h1v1h-1zM946 332h1v1h-1zM946 322h1v1h-1zM946 312h1v1h-1zM946 301h1v1h-1zM946 291h1v1h-1zM946 281h1v1h-1zM946 271h1v1h-1zM946 260h1v1h-1zM946 250h1v1h-1zM946 240h1v1h-1zM946 230h1v1h-1zM946 219h1v1h-1zM946 209h1v1h-1zM946 199h1v1h-1zM946 189h1v1h-1zM946 178h1v1h-1zM946 168h1v1h-1zM946 158h1v1h-1zM956 722h1v1h-1zM956 711h1v1h-1zM956 701h1v1h-1zM956 691h1v1h-1zM956 681h1v1h-1zM956 670h1v1h-1zM956 660h1v1h-1zM956 650h1v1h-1zM956 640h1v1h-1zM956 629h1v1h-1zM956 619h1v1h-1zM956 609h1v1h-1zM956 599h1v1h-1zM956 588h1v1h-1zM956 578h1v1h-1zM956 568h1v1h-1zM956 558h1v1h-1zM956 547h1v1h-1zM956 537h1v1h-1zM956 527h1v1h-1zM956 517h1v1h-1zM956 506h1v1h-1zM956 496h1v1h-1zM956 486h1v1h-1zM956 476h1v1h-1zM956 465h1v1h-1zM956 455h1v1h-1zM956 445h1v1h-1zM956 435h1v1h-1zM956 424h1v1h-1zM956 414h1v1h-1zM956 404h1v1h-1zM956 394h1v1h-1zM956 383h1v1h-1zM956 373h1v1h-1zM956 363h1v1h-1zM956 353h1v1h-1zM956 342h1v1h-1zM956 332h1v1h-1zM956 322h1v1h-1zM956 312h1v1h-1zM956 301h1v1h-1zM956 291h1v1h-1zM956 281h1v1h-1zM956 271h1v1h-1zM956 260h1v1h-1zM956 250h1v1h-1zM956 240h1v1h-1zM956 230h1v1h-1zM956 219h1v1h-1zM956 209h1v1h-1zM956 199h1v1h-1zM956 189h1v1h-1zM956 178h1v1h-1zM956 168h1v1h-1zM956 158h1v1h-1zM966 722h1v1h-1zM966 711h1v1h-1zM966 701h1v1h-1zM966 691h1v1h-1zM966 681h1v1h-1zM966 670h1v1h-1zM966 660h1v1h-1zM966 650h1v1h-1zM966 640h1v1h-1zM966 629h1v1h-1zM966 619h1v1h-1zM966 609h1v1h-1zM966 599h1v1h-1zM966 588h1v1h-1zM966 578h1v1h-1zM966 568h1v1h-1zM966 558h1v1h-1zM966 547h1v1h-1zM966 537h1v1h-1zM966 527h1v1h-1zM966 517h1v1h-1zM966 506h1v1h-1zM966 496h1v1h-1zM966 486h1v1h-1zM966 476h1v1h-1zM966 465h1v1h-1zM966 455h1v1h-1zM966 445h1v1h-1zM966 435h1v1h-1zM966 424h1v1h-1zM966 414h1v1h-1zM966 404h1v1h-1zM966 394h1v1h-1zM966 383h1v1h-1zM966 373h1v1h-1zM966 363h1v1h-1zM966 353h1v1h-1zM966 342h1v1h-1zM966 332h1v1h-1zM966 322h1v1h-1zM966 312h1v1h-1zM966 301h1v1h-1zM966 291h1v1h-1zM966 281h1v1h-1zM966 271h1v1h-1zM966 260h1v1h-1zM966 250h1v1h-1zM966 240h1v1h-1zM966 230h1v1h-1zM966 219h1v1h-1zM966 209h1v1h-1zM966 199h1v1h-1zM966 189h1v1h-1zM966 178h1v1h-1zM966 168h1v1h-1zM966 158h1v1h-1zM976 722h1v1h-1zM976 711h1v1h-1zM976 701h1v1h-1zM976 691h1v1h-1zM976 681h1v1h-1zM976 670h1v1h-1zM976 660h1v1h-1zM976 650h1v1h-1zM976 640h1v1h-1zM976 629h1v1h-1zM976 619h1v1h-1zM976 609h1v1h-1zM976 599h1v1h-1zM976 588h1v1h-1zM976 578h1v1h-1zM976 568h1v1h-1zM976 558h1v1h-1zM976 547h1v1h-1zM976 537h1v1h-1zM976 527h1v1h-1zM976 517h1v1h-1zM976 506h1v1h-1zM976 496h1v1h-1zM976 486h1v1h-1zM976 476h1v1h-1zM976 465h1v1h-1zM976 455h1v1h-1zM976 445h1v1h-1zM976 435h1v1h-1zM976 424h1v1h-1zM976 414h1v1h-1zM976 404h1v1h-1zM976 394h1v1h-1zM976 383h1v1h-1zM976 373h1v1h-1zM976 363h1v1h-1zM976 353h1v1h-1zM976 342h1v1h-1zM976 332h1v1h-1zM976 322h1v1h-1zM976 312h1v1h-1zM976 301h1v1h-1zM976 291h1v1h-1zM976 281h1v1h-1zM976 271h1v1h-1zM976 260h1v1h-1zM976 250h1v1h-1zM976 240h1v1h-1zM976 230h1v1h-1zM976 219h1v1h-1zM976 209h1v1h-1zM976 199h1v1h-1zM976 189h1v1h-1zM976 178h1v1h-1zM976 168h1v1h-1zM976 158h1v1h-1zM987 722h1v1h-1zM987 711h1v1h-1zM987 701h1v1h-1zM987 691h1v1h-1zM987 681h1v1h-1zM987 670h1v1h-1zM987 660h1v1h-1zM987 650h1v1h-1zM987 640h1v1h-1zM987 629h1v1h-1zM987 619h1v1h-1zM987 609h1v1h-1zM987 599h1v1h-1zM987 588h1v1h-1zM987 578h1v1h-1zM987 568h1v1h-1zM987 558h1v1h-1zM987 547h1v1h-1zM987 537h1v1h-1zM987 527h1v1h-1zM987 517h1v1h-1zM987 506h1v1h-1zM987 496h1v1h-1zM987 486h1v1h-1zM987 476h1v1h-1zM987 465h1v1h-1zM987 455h1v1h-1zM987 445h1v1h-1zM987 435h1v1h-1zM987 424h1v1h-1zM987 414h1v1h-1zM987 404h1v1h-1zM987 394h1v1h-1zM987 383h1v1h-1zM987 373h1v1h-1zM987 363h1v1h-1zM987 353h1v1h-1zM987 342h1v1h-1zM987 332h1v1h-1zM987 322h1v1h-1zM987 312h1v1h-1zM987 301h1v1h-1zM987 291h1v1h-1zM987 281h1v1h-1zM987 271h1v1h-1zM987 260h1v1h-1zM987 250h1v1h-1zM987 240h1v1h-1zM987 230h1v1h-1zM987 219h1v1h-1zM987 209h1v1h-1zM987 199h1v1h-1zM987 189h1v1h-1zM987 178h1v1h-1zM987 168h1v1h-1zM987 158h1v1h-1zM997 722h1v1h-1zM997 711h1v1h-1zM997 701h1v1h-1zM997 691h1v1h-1zM997 681h1v1h-1zM997 670h1v1h-1zM997 660h1v1h-1zM997 650h1v1h-1zM997 640h1v1h-1zM997 629h1v1h-1zM997 619h1v1h-1zM997 609h1v1h-1zM997 599h1v1h-1zM997 588h1v1h-1zM997 578h1v1h-1zM997 568h1v1h-1zM997 558h1v1h-1zM997 547h1v1h-1zM997 537h1v1h-1zM997 527h1v1h-1zM997 517h1v1h-1zM997 506h1v1h-1zM997 496h1v1h-1zM997 486h1v1h-1zM997 476h1v1h-1zM997 465h1v1h-1zM997 455h1v1h-1zM997 445h1v1h-1zM997 435h1v1h-1zM997 424h1v1h-1zM997 414h1v1h-1zM997 404h1v1h-1zM997 394h1v1h-1zM997 383h1v1h-1zM997 373h1v1h-1zM997 363h1v1h-1zM997 353h1v1h-1zM997 342h1v1h-1zM997 332h1v1h-1zM997 322h1v1h-1zM997 312h1v1h-1zM997 301h1v1h-1zM997 291h1v1h-1zM997 281h1v1h-1zM997 271h1v1h-1zM997 260h1v1h-1zM997 250h1v1h-1zM997 240h1v1h-1zM997 230h1v1h-1zM997 219h1v1h-1zM997 209h1v1h-1zM997 199h1v1h-1zM997 189h1v1h-1zM997 178h1v1h-1zM997 168h1v1h-1zM997 158h1v1h-1zM1007 722h1v1h-1zM1007 711h1v1h-1zM1007 701h1v1h-1zM1007 691h1v1h-1zM1007 681h1v1h-1zM1007 670h1v1h-1zM1007 660h1v1h-1zM1007 650h1v1h-1zM1007 640h1v1h-1zM1007 629h1v1h-1zM1007 619h1v1h-1zM1007 609h1v1h-1zM1007 599h1v1h-1zM1007 588h1v1h-1zM1007 578h1v1h-1zM1007 568h1v1h-1zM1007 558h1v1h-1zM1007 547h1v1h-1zM1007 537h1v1h-1zM1007 527h1v1h-1zM1007 517h1v1h-1zM1007 506h1v1h-1zM1007 496h1v1h-1zM1007 486h1v1h-1zM1007 476h1v1h-1zM1007 465h1v1h-1zM1007 455h1v1h-1zM1007 445h1v1h-1zM1007 435h1v1h-1zM1007 424h1v1h-1zM1007 414h1v1h-1zM1007 404h1v1h-1zM1007 394h1v1h-1zM1007 383h1v1h-1zM1007 373h1v1h-1zM1007 363h1v1h-1zM1007 353h1v1h-1zM1007 342h1v1h-1zM1007 332h1v1h-1zM1007 322h1v1h-1zM1007 312h1v1h-1zM1007 301h1v1h-1zM1007 291h1v1h-1zM1007 281h1v1h-1zM1007 271h1v1h-1zM1007 260h1v1h-1zM1007 250h1v1h-1zM1007 240h1v1h-1zM1007 230h1v1h-1zM1007 219h1v1h-1zM1007 209h1v1h-1zM1007 199h1v1h-1zM1007 189h1v1h-1zM1007 178h1v1h-1zM1007 168h1v1h-1zM1007 158h1v1h-1zM1017 722h1v1h-1zM1017 711h1v1h-1zM1017 701h1v1h-1zM1017 691h1v1h-1zM1017 681h1v1h-1zM1017 670h1v1h-1zM1017 660h1v1h-1zM1017 650h1v1h-1zM1017 640h1v1h-1zM1017 629h1v1h-1zM1017 619h1v1h-1zM1017 609h1v1h-1zM1017 599h1v1h-1zM1017 588h1v1h-1zM1017 578h1v1h-1zM1017 568h1v1h-1zM1017 558h1v1h-1zM1017 547h1v1h-1zM1017 537h1v1h-1zM1017 527h1v1h-1zM1017 517h1v1h-1zM1017 506h1v1h-1zM1017 496h1v1h-1zM1017 486h1v1h-1zM1017 476h1v1h-1zM1017 465h1v1h-1zM1017 455h1v1h-1zM1017 445h1v1h-1zM1017 435h1v1h-1zM1017 424h1v1h-1zM1017 414h1v1h-1zM1017 404h1v1h-1zM1017 394h1v1h-1zM1017 383h1v1h-1zM1017 373h1v1h-1zM1017 363h1v1h-1zM1017 353h1v1h-1zM1017 342h1v1h-1zM1017 332h1v1h-1zM1017 322h1v1h-1zM1017 312h1v1h-1zM1017 301h1v1h-1zM1017 291h1v1h-1zM1017 281h1v1h-1zM1017 271h1v1h-1zM1017 260h1v1h-1zM1017 250h1v1h-1zM1017 240h1v1h-1zM1017 230h1v1h-1zM1017 219h1v1h-1zM1017 209h1v1h-1zM1017 199h1v1h-1zM1017 189h1v1h-1zM1017 178h1v1h-1zM1017 168h1v1h-1zM1017 158h1v1h-1zM1028 722h1v1h-1zM1028 711h1v1h-1zM1028 701h1v1h-1zM1028 691h1v1h-1zM1028 681h1v1h-1zM1028 670h1v1h-1zM1028 660h1v1h-1zM1028 650h1v1h-1zM1028 640h1v1h-1zM1028 629h1v1h-1zM1028 619h1v1h-1zM1028 609h1v1h-1zM1028 599h1v1h-1zM1028 588h1v1h-1zM1028 578h1v1h-1zM1028 568h1v1h-1zM1028 558h1v1h-1zM1028 547h1v1h-1zM1028 537h1v1h-1zM1028 527h1v1h-1zM1028 517h1v1h-1zM1028 506h1v1h-1zM1028 496h1v1h-1zM1028 486h1v1h-1zM1028 476h1v1h-1zM1028 465h1v1h-1zM1028 455h1v1h-1zM1028 445h1v1h-1zM1028 435h1v1h-1zM1028 424h1v1h-1zM1028 414h1v1h-1zM1028 404h1v1h-1zM1028 394h1v1h-1zM1028 383h1v1h-1zM1028 373h1v1h-1zM1028 363h1v1h-1zM1028 353h1v1h-1zM1028 342h1v1h-1zM1028 332h1v1h-1zM1028 322h1v1h-1zM1028 312h1v1h-1zM1028 301h1v1h-1zM1028 291h1v1h-1zM1028 281h1v1h-1zM1028 271h1v1h-1zM1028 260h1v1h-1zM1028 250h1v1h-1zM1028 240h1v1h-1zM1028 230h1v1h-1zM1028 219h1v1h-1zM1028 209h1v1h-1zM1028 199h1v1h-1zM1028 189h1v1h-1zM1028 178h1v1h-1zM1028 168h1v1h-1zM1028 158h1v1h-1zM1038 722h1v1h-1zM1038 711h1v1h-1zM1038 701h1v1h-1zM1038 691h1v1h-1zM1038 681h1v1h-1zM1038 670h1v1h-1zM1038 660h1v1h-1zM1038 650h1v1h-1zM1038 640h1v1h-1zM1038 629h1v1h-1zM1038 619h1v1h-1zM1038 609h1v1h-1zM1038 599h1v1h-1zM1038 588h1v1h-1zM1038 578h1v1h-1zM1038 568h1v1h-1zM1038 558h1v1h-1zM1038 547h1v1h-1zM1038 537h1v1h-1zM1038 527h1v1h-1zM1038 517h1v1h-1zM1038 506h1v1h-1zM1038 496h1v1h-1zM1038 486h1v1h-1zM1038 476h1v1h-1zM1038 465h1v1h-1zM1038 455h1v1h-1zM1038 445h1v1h-1zM1038 435h1v1h-1zM1038 424h1v1h-1zM1038 414h1v1h-1zM1038 404h1v1h-1zM1038 394h1v1h-1zM1038 383h1v1h-1zM1038 373h1v1h-1zM1038 363h1v1h-1zM1038 353h1v1h-1zM1038 342h1v1h-1zM1038 332h1v1h-1zM1038 322h1v1h-1zM1038 312h1v1h-1zM1038 301h1v1h-1zM1038 291h1v1h-1zM1038 281h1v1h-1zM1038 271h1v1h-1zM1038 260h1v1h-1zM1038 250h1v1h-1zM1038 240h1v1h-1zM1038 230h1v1h-1zM1038 219h1v1h-1zM1038 209h1v1h-1zM1038 199h1v1h-1zM1038 189h1v1h-1zM1038 178h1v1h-1zM1038 168h1v1h-1zM1038 158h1v1h-1zM1048 722h1v1h-1zM1048 711h1v1h-1zM1048 701h1v1h-1zM1048 691h1v1h-1zM1048 681h1v1h-1zM1048 670h1v1h-1zM1048 660h1v1h-1zM1048 650h1v1h-1zM1048 640h1v1h-1zM1048 629h1v1h-1zM1048 619h1v1h-1zM1048 609h1v1h-1zM1048 599h1v1h-1zM1048 588h1v1h-1zM1048 578h1v1h-1zM1048 568h1v1h-1zM1048 558h1v1h-1zM1048 547h1v1h-1zM1048 537h1v1h-1zM1048 527h1v1h-1zM1048 517h1v1h-1zM1048 506h1v1h-1zM1048 496h1v1h-1zM1048 486h1v1h-1zM1048 476h1v1h-1zM1048 465h1v1h-1zM1048 455h1v1h-1zM1048 445h1v1h-1zM1048 435h1v1h-1zM1048 424h1v1h-1zM1048 414h1v1h-1zM1048 404h1v1h-1zM1048 394h1v1h-1zM1048 383h1v1h-1zM1048 373h1v1h-1zM1048 363h1v1h-1zM1048 353h1v1h-1zM1048 342h1v1h-1zM1048 332h1v1h-1zM1048 322h1v1h-1zM1048 312h1v1h-1zM1048 301h1v1h-1zM1048 291h1v1h-1zM1048 281h1v1h-1zM1048 271h1v1h-1zM1048 260h1v1h-1zM1048 250h1v1h-1zM1048 240h1v1h-1zM1048 230h1v1h-1zM1048 219h1v1h-1zM1048 209h1v1h-1zM1048 199h1v1h-1zM1048 189h1v1h-1zM1048 178h1v1h-1zM1048 168h1v1h-1zM1048 158h1v1h-1zM1058 722h1v1h-1zM1058 711h1v1h-1zM1058 701h1v1h-1zM1058 691h1v1h-1zM1058 681h1v1h-1zM1058 670h1v1h-1zM1058 660h1v1h-1zM1058 650h1v1h-1zM1058 640h1v1h-1zM1058 629h1v1h-1zM1058 619h1v1h-1zM1058 609h1v1h-1zM1058 599h1v1h-1zM1058 588h1v1h-1zM1058 578h1v1h-1zM1058 568h1v1h-1zM1058 558h1v1h-1zM1058 547h1v1h-1zM1058 537h1v1h-1zM1058 527h1v1h-1zM1058 517h1v1h-1zM1058 506h1v1h-1zM1058 496h1v1h-1zM1058 486h1v1h-1zM1058 476h1v1h-1zM1058 465h1v1h-1zM1058 455h1v1h-1zM1058 445h1v1h-1zM1058 435h1v1h-1zM1058 424h1v1h-1zM1058 414h1v1h-1zM1058 404h1v1h-1zM1058 394h1v1h-1zM1058 383h1v1h-1zM1058 373h1v1h-1zM1058 363h1v1h-1zM1058 353h1v1h-1zM1058 342h1v1h-1zM1058 332h1v1h-1zM1058 322h1v1h-1zM1058 312h1v1h-1zM1058 301h1v1h-1zM1058 291h1v1h-1zM1058 281h1v1h-1zM1058 271h1v1h-1zM1058 260h1v1h-1zM1058 250h1v1h-1zM1058 240h1v1h-1zM1058 230h1v1h-1zM1058 219h1v1h-1zM1058 209h1v1h-1zM1058 199h1v1h-1zM1058 189h1v1h-1zM1058 178h1v1h-1zM1058 168h1v1h-1zM1058 158h1v1h-1zM1069 722h1v1h-1zM1069 711h1v1h-1zM1069 701h1v1h-1zM1069 691h1v1h-1zM1069 681h1v1h-1zM1069 670h1v1h-1zM1069 660h1v1h-1zM1069 650h1v1h-1zM1069 640h1v1h-1zM1069 629h1v1h-1zM1069 619h1v1h-1zM1069 609h1v1h-1zM1069 599h1v1h-1zM1069 588h1v1h-1zM1069 578h1v1h-1zM1069 568h1v1h-1zM1069 558h1v1h-1zM1069 547h1v1h-1zM1069 537h1v1h-1zM1069 527h1v1h-1zM1069 517h1v1h-1zM1069 506h1v1h-1zM1069 496h1v1h-1zM1069 486h1v1h-1zM1069 476h1v1h-1zM1069 465h1v1h-1zM1069 455h1v1h-1zM1069 445h1v1h-1zM1069 435h1v1h-1zM1069 424h1v1h-1zM1069 414h1v1h-1zM1069 404h1v1h-1zM1069 394h1v1h-1zM1069 383h1v1h-1zM1069 373h1v1h-1zM1069 363h1v1h-1zM1069 353h1v1h-1zM1069 342h1v1h-1zM1069 332h1v1h-1zM1069 322h1v1h-1zM1069 312h1v1h-1zM1069 301h1v1h-1zM1069 291h1v1h-1zM1069 281h1v1h-1zM1069 271h1v1h-1zM1069 260h1v1h-1zM1069 250h1v1h-1zM1069 240h1v1h-1zM1069 230h1v1h-1zM1069 219h1v1h-1zM1069 209h1v1h-1zM1069 199h1v1h-1zM1069 189h1v1h-1zM1069 178h1v1h-1zM1069 168h1v1h-1zM1069 158h1v1h-1zM1079 722h1v1h-1zM1079 711h1v1h-1zM1079 701h1v1h-1zM1079 691h1v1h-1zM1079 681h1v1h-1zM1079 670h1v1h-1zM1079 660h1v1h-1zM1079 650h1v1h-1zM1079 640h1v1h-1zM1079 629h1v1h-1zM1079 619h1v1h-1zM1079 609h1v1h-1zM1079 599h1v1h-1zM1079 588h1v1h-1zM1079 578h1v1h-1zM1079 568h1v1h-1zM1079 558h1v1h-1zM1079 547h1v1h-1zM1079 537h1v1h-1zM1079 527h1v1h-1zM1079 517h1v1h-1zM1079 506h1v1h-1zM1079 496h1v1h-1zM1079 486h1v1h-1zM1079 476h1v1h-1zM1079 465h1v1h-1zM1079 455h1v1h-1zM1079 445h1v1h-1zM1079 435h1v1h-1zM1079 424h1v1h-1zM1079 414h1v1h-1zM1079 404h1v1h-1zM1079 394h1v1h-1zM1079 383h1v1h-1zM1079 373h1v1h-1zM1079 363h1v1h-1zM1079 353h1v1h-1zM1079 342h1v1h-1zM1079 332h1v1h-1zM1079 322h1v1h-1zM1079 312h1v1h-1zM1079 301h1v1h-1zM1079 291h1v1h-1zM1079 281h1v1h-1zM1079 271h1v1h-1zM1079 260h1v1h-1zM1079 250h1v1h-1zM1079 240h1v1h-1zM1079 230h1v1h-1zM1079 219h1v1h-1zM1079 209h1v1h-1zM1079 199h1v1h-1zM1079 189h1v1h-1zM1079 178h1v1h-1zM1079 168h1v1h-1zM1079 158h1v1h-1zM1089 722h1v1h-1zM1089 711h1v1h-1zM1089 701h1v1h-1zM1089 691h1v1h-1zM1089 681h1v1h-1zM1089 670h1v1h-1zM1089 660h1v1h-1zM1089 650h1v1h-1zM1089 640h1v1h-1zM1089 629h1v1h-1zM1089 619h1v1h-1zM1089 609h1v1h-1zM1089 599h1v1h-1zM1089 588h1v1h-1zM1089 578h1v1h-1zM1089 568h1v1h-1zM1089 558h1v1h-1zM1089 547h1v1h-1zM1089 537h1v1h-1zM1089 527h1v1h-1zM1089 517h1v1h-1zM1089 506h1v1h-1zM1089 496h1v1h-1zM1089 486h1v1h-1zM1089 476h1v1h-1zM1089 465h1v1h-1zM1089 455h1v1h-1zM1089 445h1v1h-1zM1089 435h1v1h-1zM1089 424h1v1h-1zM1089 414h1v1h-1zM1089 404h1v1h-1zM1089 394h1v1h-1zM1089 383h1v1h-1zM1089 373h1v1h-1zM1089 363h1v1h-1zM1089 353h1v1h-1zM1089 342h1v1h-1zM1089 332h1v1h-1zM1089 322h1v1h-1zM1089 312h1v1h-1zM1089 301h1v1h-1zM1089 291h1v1h-1zM1089 281h1v1h-1zM1089 271h1v1h-1zM1089 260h1v1h-1zM1089 250h1v1h-1zM1089 240h1v1h-1zM1089 230h1v1h-1zM1089 219h1v1h-1zM1089 209h1v1h-1zM1089 199h1v1h-1zM1089 189h1v1h-1zM1089 178h1v1h-1zM1089 168h1v1h-1zM1089 158h1v1h-1zM1099 722h1v1h-1zM1099 711h1v1h-1zM1099 701h1v1h-1zM1099 691h1v1h-1zM1099 681h1v1h-1zM1099 670h1v1h-1zM1099 660h1v1h-1zM1099 650h1v1h-1zM1099 640h1v1h-1zM1099 629h1v1h-1zM1099 619h1v1h-1zM1099 609h1v1h-1zM1099 599h1v1h-1zM1099 588h1v1h-1zM1099 578h1v1h-1zM1099 568h1v1h-1zM1099 558h1v1h-1zM1099 547h1v1h-1zM1099 537h1v1h-1zM1099 527h1v1h-1zM1099 517h1v1h-1zM1099 506h1v1h-1zM1099 496h1v1h-1zM1099 486h1v1h-1zM1099 476h1v1h-1zM1099 465h1v1h-1zM1099 455h1v1h-1zM1099 445h1v1h-1zM1099 435h1v1h-1zM1099 424h1v1h-1zM1099 414h1v1h-1zM1099 404h1v1h-1zM1099 394h1v1h-1zM1099 383h1v1h-1zM1099 373h1v1h-1zM1099 363h1v1h-1zM1099 353h1v1h-1zM1099 342h1v1h-1zM1099 332h1v1h-1zM1099 322h1v1h-1zM1099 312h1v1h-1zM1099 301h1v1h-1zM1099 291h1v1h-1zM1099 281h1v1h-1zM1099 271h1v1h-1zM1099 260h1v1h-1zM1099 250h1v1h-1zM1099 240h1v1h-1zM1099 230h1v1h-1zM1099 219h1v1h-1zM1099 209h1v1h-1zM1099 199h1v1h-1zM1099 189h1v1h-1zM1099 178h1v1h-1zM1099 168h1v1h-1zM1099 158h1v1h-1zM1110 722h1v1h-1zM1110 711h1v1h-1zM1110 701h1v1h-1zM1110 691h1v1h-1zM1110 681h1v1h-1zM1110 670h1v1h-1zM1110 660h1v1h-1zM1110 650h1v1h-1zM1110 640h1v1h-1zM1110 629h1v1h-1zM1110 619h1v1h-1zM1110 609h1v1h-1zM1110 599h1v1h-1zM1110 588h1v1h-1zM1110 578h1v1h-1zM1110 568h1v1h-1zM1110 558h1v1h-1zM1110 547h1v1h-1zM1110 537h1v1h-1zM1110 527h1v1h-1zM1110 517h1v1h-1zM1110 506h1v1h-1zM1110 496h1v1h-1zM1110 486h1v1h-1zM1110 476h1v1h-1zM1110 465h1v1h-1zM1110 455h1v1h-1zM1110 445h1v1h-1zM1110 435h1v1h-1zM1110 424h1v1h-1zM1110 414h1v1h-1zM1110 404h1v1h-1zM1110 394h1v1h-1zM1110 383h1v1h-1zM1110 373h1v1h-1zM1110 363h1v1h-1zM1110 353h1v1h-1zM1110 342h1v1h-1zM1110 332h1v1h-1zM1110 322h1v1h-1zM1110 312h1v1h-1zM1110 301h1v1h-1zM1110 291h1v1h-1zM1110 281h1v1h-1zM1110 271h1v1h-1zM1110 260h1v1h-1zM1110 250h1v1h-1zM1110 240h1v1h-1zM1110 230h1v1h-1zM1110 219h1v1h-1zM1110 209h1v1h-1zM1110 199h1v1h-1zM1110 189h1v1h-1zM1110 178h1v1h-1zM1110 168h1v1h-1zM1110 158h1v1h-1zM1120 722h1v1h-1zM1120 711h1v1h-1zM1120 701h1v1h-1zM1120 691h1v1h-1zM1120 681h1v1h-1zM1120 670h1v1h-1zM1120 660h1v1h-1zM1120 650h1v1h-1zM1120 640h1v1h-1zM1120 629h1v1h-1zM1120 619h1v1h-1zM1120 609h1v1h-1zM1120 599h1v1h-1zM1120 588h1v1h-1zM1120 578h1v1h-1zM1120 568h1v1h-1zM1120 558h1v1h-1zM1120 547h1v1h-1zM1120 537h1v1h-1zM1120 527h1v1h-1zM1120 517h1v1h-1zM1120 506h1v1h-1zM1120 496h1v1h-1zM1120 486h1v1h-1zM1120 476h1v1h-1zM1120 465h1v1h-1zM1120 455h1v1h-1zM1120 445h1v1h-1zM1120 435h1v1h-1zM1120 424h1v1h-1zM1120 414h1v1h-1zM1120 404h1v1h-1zM1120 394h1v1h-1zM1120 383h1v1h-1zM1120 373h1v1h-1zM1120 363h1v1h-1zM1120 353h1v1h-1zM1120 342h1v1h-1zM1120 332h1v1h-1zM1120 322h1v1h-1zM1120 312h1v1h-1zM1120 301h1v1h-1zM1120 291h1v1h-1zM1120 281h1v1h-1zM1120 271h1v1h-1zM1120 260h1v1h-1zM1120 250h1v1h-1zM1120 240h1v1h-1zM1120 230h1v1h-1zM1120 219h1v1h-1zM1120 209h1v1h-1zM1120 199h1v1h-1zM1120 189h1v1h-1zM1120 178h1v1h-1zM1120 168h1v1h-1zM1120 158h1v1h-1zM1130 722h1v1h-1zM1130 711h1v1h-1zM1130 701h1v1h-1zM1130 691h1v1h-1zM1130 681h1v1h-1zM1130 670h1v1h-1zM1130 660h1v1h-1zM1130 650h1v1h-1zM1130 640h1v1h-1zM1130 629h1v1h-1zM1130 619h1v1h-1zM1130 609h1v1h-1zM1130 599h1v1h-1zM1130 588h1v1h-1zM1130 578h1v1h-1zM1130 568h1v1h-1zM1130 558h1v1h-1zM1130 547h1v1h-1zM1130 537h1v1h-1zM1130 527h1v1h-1zM1130 517h1v1h-1zM1130 506h1v1h-1zM1130 496h1v1h-1zM1130 486h1v1h-1zM1130 476h1v1h-1zM1130 465h1v1h-1zM1130 455h1v1h-1zM1130 445h1v1h-1zM1130 435h1v1h-1zM1130 424h1v1h-1zM1130 414h1v1h-1zM1130 404h1v1h-1zM1130 394h1v1h-1zM1130 383h1v1h-1zM1130 373h1v1h-1zM1130 363h1v1h-1zM1130 353h1v1h-1zM1130 342h1v1h-1zM1130 332h1v1h-1zM1130 322h1v1h-1zM1130 312h1v1h-1zM1130 301h1v1h-1zM1130 291h1v1h-1zM1130 281h1v1h-1zM1130 271h1v1h-1zM1130 260h1v1h-1zM1130 250h1v1h-1zM1130 240h1v1h-1zM1130 230h1v1h-1zM1130 219h1v1h-1zM1130 209h1v1h-1zM1130 199h1v1h-1zM1130 189h1v1h-1zM1130 178h1v1h-1zM1130 168h1v1h-1zM1130 158h1v1h-1z" fill="#5c5c5c"/>
<path d="M146.5 155V732M248.5 155V732M351.5 155V732M453.5 155V732M556.5 155V732M658.5 155V732M761.5 155V732M863.5 155V732M966.5 155V732M1068.5 155V732M95 629.5H1139M95 527.5H1139M95 424.5H1139M95 322.5H1139M95 219.5H1139" stroke="#262626" stroke-width="1" fill="none"/>
<path d="M166.7 270.65H1048.2M1068.7 291.15V608.9M1048.2 629.4H166.7M146.2 608.9V291.15" stroke="#8a3c3c" stroke-width="3" fill="none"/>
<path d="M146.2 291.15A20.5 20.5 0 0 1 166.7 270.65M1048.2 270.65A20.5 20.5 0 0 1 1068.7 291.15M1068.7 608.9A20.5 20.5 0 0 1 1048.2 629.4M166.7 629.4A20.5 20.5 0 0 1 146.2 608.9" stroke="#c85050" stroke-width="3" fill="none"/>
<g stroke="#d00000" stroke-width="1.2" fill="none"><circle cx="146.2" cy="629.4" r="5.2"/><path d="M126.19999999999999 629.4H166.2M146.2 609.4V651.4"/></g>
<rect x="161.7" y="265.6" width="10" height="10" fill="#0040b4" stroke="#8c8cb4" stroke-width="0.8"/>
<rect x="141.2" y="286.1" width="10" height="10" fill="#0040b4" stroke="#8c8cb4" stroke-width="0.8"/>
<rect x="1043.2" y="265.6" width="10" height="10" fill="#0040b4" stroke="#8c8cb4" stroke-width="0.8"/>
<rect x="1063.7" y="603.9" width="10" height="10" fill="#0040b4" stroke="#8c8cb4" stroke-width="0.8"/>
<rect x="1063.7" y="286.1" width="10" height="10" fill="#c40a2a" stroke="#8c8cb4" stroke-width="0.8"/>
<rect x="141.2" y="603.9" width="10" height="10" fill="#c40a2a" stroke="#8c8cb4" stroke-width="0.8"/>
<rect x="1043.2" y="624.4" width="10" height="10" fill="#c40a2a" stroke="#8c8cb4" stroke-width="0.8"/>
<rect x="161.7" y="624.4" width="10" height="10" fill="#0040b4" stroke="#8c8cb4" stroke-width="0.8"/>
<rect x="147.2" y="271.7" width="10" height="10" fill="#0088b4" stroke="#8c8cb4" stroke-width="0.8"/>
<rect x="1057.7" y="271.7" width="10" height="10" fill="#0088b4" stroke="#8c8cb4" stroke-width="0.8"/>
<rect x="147.2" y="618.4" width="10" height="10" fill="#0088b4" stroke="#8c8cb4" stroke-width="0.8"/>
<rect x="1057.7" y="618.4" width="10" height="10" fill="#0088b4" stroke="#8c8cb4" stroke-width="0.8"/>
<circle cx="166.7" cy="291.1" r="5" fill="#0000a8" stroke="#6060b0" stroke-width="0.6"/>
<circle cx="1048.2" cy="291.1" r="5" fill="#0000a8" stroke="#6060b0" stroke-width="0.6"/>
<circle cx="166.7" cy="608.9" r="5" fill="#0000a8" stroke="#6060b0" stroke-width="0.6"/>
<circle cx="1048.2" cy="608.9" r="5" fill="#0000a8" stroke="#6060b0" stroke-width="0.6"/>
<path d="M186.7 363.0L404.0 363.0" stroke="#e00000" stroke-width="2.2" stroke-dasharray="16.4 7.0 1.6 7.0" stroke-dashoffset="12.70" fill="none"/>
<path d="M294.7 311.0L294.7 415.0" stroke="#e00000" stroke-width="2.2" stroke-dasharray="16.4 7.0 1.6 7.0" stroke-dashoffset="4.20" fill="none"/>
<path d="M233.3 327.0H356.6A35.85 35.85 0 0 1 356.6 398.7H233.3A35.85 35.85 0 0 1 233.3 327.0Z" stroke="#acacac" stroke-width="1.6" stroke-dasharray="9.5 2.5 1.5 2.5" fill="none"/>
<circle cx="233.3" cy="363" r="7.6" stroke="#ffffff" stroke-width="2.6" fill="none"/>
<circle cx="356.2" cy="363" r="7.6" stroke="#ffffff" stroke-width="2.6" fill="none"/>
<path d="M255.8 337H333.6M343.4 354.3L340.3 373.8M329.2 388.5H260.2M249.1 373.8L246 354.3" stroke="#8a3c3c" stroke-width="3" fill="none"/>
<path d="M245.5 348.5A10.3 10.3 0 0 1 255.8 337M333.6 337A10.3 10.3 0 0 1 343.9 348.5M339.7 379.6A10.5 10.5 0 0 1 329.2 388.5M260.2 388.5A10.5 10.5 0 0 1 249.7 379.6" stroke="#c85050" stroke-width="3" fill="none"/>
<rect x="241.4" y="334.2" width="10" height="10" fill="#0088b4" stroke="#8c8cb4" stroke-width="0.8"/>
<rect x="338.3" y="334.2" width="10" height="10" fill="#0088b4" stroke="#8c8cb4" stroke-width="0.8"/>
<rect x="246.3" y="383.0" width="10" height="10" fill="#0088b4" stroke="#8c8cb4" stroke-width="0.8"/>
<rect x="332.5" y="383.3" width="10" height="10" fill="#0088b4" stroke="#8c8cb4" stroke-width="0.8"/>
<rect x="250.8" y="332.0" width="10" height="10" fill="#0808b8" stroke="#8c8cb4" stroke-width="0.8"/>
<rect x="240.5" y="343.5" width="10" height="10" fill="#0808b8" stroke="#8c8cb4" stroke-width="0.8"/>
<rect x="339.2" y="343.3" width="10" height="10" fill="#0808b8" stroke="#8c8cb4" stroke-width="0.8"/>
<rect x="255.2" y="383.5" width="10" height="10" fill="#0808b8" stroke="#8c8cb4" stroke-width="0.8"/>
<rect x="329.2" y="332.0" width="10" height="10" fill="#c40a2a" stroke="#8c8cb4" stroke-width="0.8"/>
<rect x="244.7" y="374.6" width="10" height="10" fill="#c40a2a" stroke="#8c8cb4" stroke-width="0.8"/>
<rect x="335.0" y="375.0" width="10" height="10" fill="#c40a2a" stroke="#8c8cb4" stroke-width="0.8"/>
<rect x="324.7" y="383.3" width="10" height="10" fill="#c40a2a" stroke="#8c8cb4" stroke-width="0.8"/>
<circle cx="255.8" cy="347.6" r="5" fill="#0000a8" stroke="#6060b0" stroke-width="0.6"/>
<circle cx="334.2" cy="347.5" r="5" fill="#0000a8" stroke="#6060b0" stroke-width="0.6"/>
<circle cx="260.2" cy="377.8" r="5" fill="#0000a8" stroke="#6060b0" stroke-width="0.6"/>
<circle cx="329.7" cy="377.5" r="5" fill="#0000a8" stroke="#6060b0" stroke-width="0.6"/>
<path d="M469.0 311.0L469.0 414.4" stroke="#e00000" stroke-width="2.2" stroke-dasharray="16.4 7.0 1.6 7.0" stroke-dashoffset="4.10" fill="none"/>
<path d="M417.3 362.8L525.9 362.8" stroke="#e00000" stroke-width="2.2" stroke-dasharray="16.4 7.0 1.6 7.0" stroke-dashoffset="4.10" fill="none"/>
<circle cx="469" cy="362.8" r="37.6" stroke="#ffffff" stroke-width="3" fill="none"/>
<path d="M576.8 331.5L576.8 393.9" stroke="#e00000" stroke-width="2.2" stroke-dasharray="16.4 7.0 1.6 7.0" stroke-dashoffset="8.90" fill="none"/>
<path d="M545.7 362.8L608.0 362.8" stroke="#e00000" stroke-width="2.2" stroke-dasharray="16.4 7.0 1.6 7.0" stroke-dashoffset="9.30" fill="none"/>
<circle cx="576.8" cy="362.8" r="17.9" stroke="#ffffff" stroke-width="2.8" fill="none"/>
<g stroke="#ffffff" stroke-width="2.5" fill="none"><circle cx="669.0" cy="332.1" r="6.9"/><circle cx="699.7" cy="332.1" r="6.9"/><circle cx="730.5" cy="332.1" r="6.9"/><circle cx="761.2" cy="332.1" r="6.9"/><circle cx="792.0" cy="332.1" r="6.9"/><circle cx="822.7" cy="332.1" r="6.9"/><circle cx="853.5" cy="332.1" r="6.9"/><circle cx="884.2" cy="332.1" r="6.9"/><circle cx="915.0" cy="332.1" r="6.9"/><circle cx="945.7" cy="332.1" r="6.9"/><circle cx="976.5" cy="332.1" r="6.9"/><circle cx="1007.2" cy="332.1" r="6.9"/><circle cx="684.3" cy="352.6" r="6.9"/><circle cx="715.1" cy="352.6" r="6.9"/><circle cx="745.8" cy="352.6" r="6.9"/><circle cx="776.6" cy="352.6" r="6.9"/><circle cx="807.3" cy="352.6" r="6.9"/><circle cx="838.1" cy="352.6" r="6.9"/><circle cx="868.8" cy="352.6" r="6.9"/><circle cx="899.6" cy="352.6" r="6.9"/><circle cx="930.3" cy="352.6" r="6.9"/><circle cx="961.1" cy="352.6" r="6.9"/><circle cx="991.8" cy="352.6" r="6.9"/><circle cx="669.0" cy="373.1" r="6.9"/><circle cx="699.7" cy="373.1" r="6.9"/><circle cx="730.5" cy="373.1" r="6.9"/><circle cx="761.2" cy="373.1" r="6.9"/><circle cx="792.0" cy="373.1" r="6.9"/><circle cx="822.7" cy="373.1" r="6.9"/><circle cx="853.5" cy="373.1" r="6.9"/><circle cx="884.2" cy="373.1" r="6.9"/><circle cx="915.0" cy="373.1" r="6.9"/><circle cx="945.7" cy="373.1" r="6.9"/><circle cx="976.5" cy="373.1" r="6.9"/><circle cx="1007.2" cy="373.1" r="6.9"/><circle cx="684.3" cy="393.6" r="6.9"/><circle cx="715.1" cy="393.6" r="6.9"/><circle cx="745.8" cy="393.6" r="6.9"/><circle cx="776.6" cy="393.6" r="6.9"/><circle cx="807.3" cy="393.6" r="6.9"/><circle cx="838.1" cy="393.6" r="6.9"/><circle cx="868.8" cy="393.6" r="6.9"/><circle cx="899.6" cy="393.6" r="6.9"/><circle cx="930.3" cy="393.6" r="6.9"/><circle cx="961.1" cy="393.6" r="6.9"/><circle cx="991.8" cy="393.6" r="6.9"/><circle cx="669.0" cy="414.1" r="6.9"/><circle cx="699.7" cy="414.1" r="6.9"/><circle cx="730.5" cy="414.1" r="6.9"/><circle cx="761.2" cy="414.1" r="6.9"/><circle cx="792.0" cy="414.1" r="6.9"/><circle cx="822.7" cy="414.1" r="6.9"/><circle cx="853.5" cy="414.1" r="6.9"/><circle cx="884.2" cy="414.1" r="6.9"/><circle cx="915.0" cy="414.1" r="6.9"/><circle cx="945.7" cy="414.1" r="6.9"/><circle cx="976.5" cy="414.1" r="6.9"/><circle cx="1007.2" cy="414.1" r="6.9"/><circle cx="684.3" cy="434.6" r="6.9"/><circle cx="715.1" cy="434.6" r="6.9"/><circle cx="745.8" cy="434.6" r="6.9"/><circle cx="776.6" cy="434.6" r="6.9"/><circle cx="807.3" cy="434.6" r="6.9"/><circle cx="838.1" cy="434.6" r="6.9"/><circle cx="868.8" cy="434.6" r="6.9"/><circle cx="899.6" cy="434.6" r="6.9"/><circle cx="930.3" cy="434.6" r="6.9"/><circle cx="961.1" cy="434.6" r="6.9"/><circle cx="991.8" cy="434.6" r="6.9"/><circle cx="669.0" cy="455.1" r="6.9"/><circle cx="699.7" cy="455.1" r="6.9"/><circle cx="730.5" cy="455.1" r="6.9"/><circle cx="761.2" cy="455.1" r="6.9"/><circle cx="792.0" cy="455.1" r="6.9"/><circle cx="822.7" cy="455.1" r="6.9"/><circle cx="684.3" cy="475.6" r="6.9"/><circle cx="715.1" cy="475.6" r="6.9"/><circle cx="745.8" cy="475.6" r="6.9"/><circle cx="776.6" cy="475.6" r="6.9"/><circle cx="807.3" cy="475.6" r="6.9"/><circle cx="669.0" cy="496.1" r="6.9"/><circle cx="699.7" cy="496.1" r="6.9"/><circle cx="730.5" cy="496.1" r="6.9"/><circle cx="761.2" cy="496.1" r="6.9"/><circle cx="792.0" cy="496.1" r="6.9"/><circle cx="822.7" cy="496.1" r="6.9"/><circle cx="684.3" cy="516.6" r="6.9"/><circle cx="715.1" cy="516.6" r="6.9"/><circle cx="745.8" cy="516.6" r="6.9"/><circle cx="776.6" cy="516.6" r="6.9"/><circle cx="807.3" cy="516.6" r="6.9"/><circle cx="669.0" cy="537.1" r="6.9"/><circle cx="699.7" cy="537.1" r="6.9"/><circle cx="730.5" cy="537.1" r="6.9"/><circle cx="761.2" cy="537.1" r="6.9"/><circle cx="792.0" cy="537.1" r="6.9"/><circle cx="822.7" cy="537.1" r="6.9"/><circle cx="684.3" cy="557.6" r="6.9"/><circle cx="715.1" cy="557.6" r="6.9"/><circle cx="745.8" cy="557.6" r="6.9"/><circle cx="776.6" cy="557.6" r="6.9"/><circle cx="807.3" cy="557.6" r="6.9"/><circle cx="669.0" cy="578.1" r="6.9"/><circle cx="699.7" cy="578.1" r="6.9"/><circle cx="730.5" cy="578.1" r="6.9"/><circle cx="761.2" cy="578.1" r="6.9"/><circle cx="792.0" cy="578.1" r="6.9"/><circle cx="822.7" cy="578.1" r="6.9"/></g>
<path d="M938.1 444.7L938.1 591.7" stroke="#e00000" stroke-width="2.2" stroke-dasharray="16.4 7.0 1.6 7.0" stroke-dashoffset="15.20" fill="none"/>
<path d="M845.2 521.9L1031.0 521.9" stroke="#e00000" stroke-width="2.2" stroke-dasharray="16.4 7.0 1.6 7.0" stroke-dashoffset="11.40" fill="none"/>
<path d="M879.0 465.2H997.1M1017.7 485.8V557.8M997.1 578.4H879.0M858.4 557.8V485.8" stroke="#8a3c3c" stroke-width="3" fill="none"/>
<path d="M858.4 485.8A20.6 20.6 0 0 1 879.0 465.2M997.1 465.2A20.6 20.6 0 0 1 1017.7 485.8M1017.7 557.8A20.6 20.6 0 0 1 997.1 578.4M879.0 578.4A20.6 20.6 0 0 1 858.4 557.8" stroke="#c85050" stroke-width="3" fill="none"/>
<rect x="859.7" y="466.3" width="10" height="10" fill="#0088b4" stroke="#8c8cb4" stroke-width="0.8"/>
<rect x="1006.5" y="466.3" width="10" height="10" fill="#0088b4" stroke="#8c8cb4" stroke-width="0.8"/>
<rect x="859.7" y="567.2" width="10" height="10" fill="#0088b4" stroke="#8c8cb4" stroke-width="0.8"/>
<rect x="1006.5" y="567.2" width="10" height="10" fill="#0088b4" stroke="#8c8cb4" stroke-width="0.8"/>
<rect x="874.3" y="460.2" width="10" height="10" fill="#0040b4" stroke="#8c8cb4" stroke-width="0.8"/>
<rect x="853.4" y="480.9" width="10" height="10" fill="#0040b4" stroke="#8c8cb4" stroke-width="0.8"/>
<rect x="991.9" y="460.2" width="10" height="10" fill="#0040b4" stroke="#8c8cb4" stroke-width="0.8"/>
<rect x="1012.7" y="480.9" width="10" height="10" fill="#0040b4" stroke="#8c8cb4" stroke-width="0.8"/>
<rect x="853.4" y="552.6" width="10" height="10" fill="#0040b4" stroke="#8c8cb4" stroke-width="0.8"/>
<rect x="874.3" y="573.4" width="10" height="10" fill="#0040b4" stroke="#8c8cb4" stroke-width="0.8"/>
<rect x="1012.7" y="552.6" width="10" height="10" fill="#0040b4" stroke="#8c8cb4" stroke-width="0.8"/>
<rect x="991.9" y="573.4" width="10" height="10" fill="#0040b4" stroke="#8c8cb4" stroke-width="0.8"/>
<circle cx="879.3" cy="485.9" r="5" fill="#0000a8" stroke="#6060b0" stroke-width="0.6"/>
<circle cx="996.9" cy="485.9" r="5" fill="#0000a8" stroke="#6060b0" stroke-width="0.6"/>
<circle cx="879.3" cy="557.6" r="5" fill="#0000a8" stroke="#6060b0" stroke-width="0.6"/>
<circle cx="996.9" cy="557.6" r="5" fill="#0000a8" stroke="#6060b0" stroke-width="0.6"/>
<path d="M176.8 526.9L566.8 526.9" stroke="#e00000" stroke-width="2.2" stroke-dasharray="16.4 7.0 1.6 7.0" stroke-dashoffset="5.40" fill="none"/>
<path d="M371.7 455.0L371.7 598.5" stroke="#e00000" stroke-width="2.2" stroke-dasharray="16.4 7.0 1.6 7.0" stroke-dashoffset="0.50" fill="none"/>
<path d="M251.0 472.2H493.5A54.55 54.55 0 0 1 493.5 581.3H251.0A54.55 54.55 0 0 1 251.0 472.2Z" stroke="#acacac" stroke-width="1.6" stroke-dasharray="9.5 2.5 1.5 2.5" fill="none"/>
<circle cx="234" cy="526.9" r="16" stroke="#ffffff" stroke-width="2.6" fill="none"/>
<circle cx="508.9" cy="526.9" r="16" stroke="#ffffff" stroke-width="2.6" fill="none"/>
<path d="M455.9 494.1V543.9H439.2L425.5 559.4H317.6L303.9 543.9H288.1V494.1" stroke="#ffffff" stroke-width="2.6" fill="none"/>
<path d="M288.1 494.1H455.9" stroke="#b8b8b8" stroke-width="2.6" fill="none"/>
<circle cx="386.9" cy="493.7" r="34.5" stroke="#5f7385" stroke-width="9.5" fill="none" opacity="0.7"/>
<circle cx="386.9" cy="493.7" r="38" stroke="#8fa3b5" stroke-width="1.6" fill="none" opacity="0.55"/>
<circle cx="386.9" cy="493.7" r="33.5" stroke="#44566a" stroke-width="2" fill="none" opacity="0.5"/>
<circle cx="386.9" cy="493.7" r="30.5" stroke="#7d90a2" stroke-width="1.2" fill="none" opacity="0.5"/>
<path transform="translate(387 493.7)" d="M0 0V23.5L5.4 18.4L9.6 28L13.4 26.4L9.3 17.2H16Z" fill="#fff" stroke="#fff" stroke-width="3.2" stroke-linejoin="round"/>
<path transform="translate(387 493.7)" d="M0 0V23.5L5.4 18.4L9.6 28L13.4 26.4L9.3 17.2H16Z" fill="#fff" stroke="#000" stroke-width="1.3" stroke-linejoin="round"/>
</svg>
<svg style="position:absolute;left:0;top:0" width="1500" height="844" viewBox="0 0 1500 844">
<path d="M105.5 148V155M115.5 152V155M126.5 148V155M136.5 152V155M146.5 148V155M156.5 152V155M167.5 148V155M177.5 152V155M187.5 148V155M197.5 152V155M208.5 148V155M218.5 152V155M228.5 148V155M238.5 152V155M249.5 148V155M259.5 152V155M269.5 148V155M279.5 152V155M290.5 148V155M300.5 152V155M310.5 148V155M320.5 152V155M331.5 148V155M341.5 152V155M351.5 148V155M361.5 152V155M372.5 148V155M382.5 152V155M392.5 148V155M402.5 152V155M413.5 148V155M423.5 152V155M433.5 148V155M443.5 152V155M454.5 148V155M464.5 152V155M474.5 148V155M484.5 152V155M495.5 148V155M505.5 152V155M515.5 148V155M525.5 152V155M536.5 148V155M546.5 152V155M556.5 148V155M566.5 152V155M577.5 148V155M587.5 152V155M597.5 148V155M607.5 152V155M618.5 148V155M628.5 152V155M638.5 148V155M648.5 152V155M659.5 148V155M669.5 152V155M679.5 148V155M689.5 152V155M700.5 148V155M710.5 152V155M720.5 148V155M730.5 152V155M741.5 148V155M751.5 152V155M761.5 148V155M771.5 152V155M782.5 148V155M792.5 152V155M802.5 148V155M812.5 152V155M823.5 148V155M833.5 152V155M843.5 148V155M853.5 152V155M864.5 148V155M874.5 152V155M884.5 148V155M894.5 152V155M905.5 148V155M915.5 152V155M925.5 148V155M935.5 152V155M946.5 148V155M956.5 152V155M966.5 148V155M976.5 152V155M987.5 148V155M997.5 152V155M1007.5 148V155M1017.5 152V155M1028.5 148V155M1038.5 152V155M1048.5 148V155M1058.5 152V155M1069.5 148V155M1079.5 152V155M1089.5 148V155M1099.5 152V155M1110.5 148V155M1120.5 152V155M1130.5 148V155M92 722.5H95M88 711.5H95M92 701.5H95M88 691.5H95M92 681.5H95M88 670.5H95M92 660.5H95M88 650.5H95M92 640.5H95M88 629.5H95M92 619.5H95M88 609.5H95M92 599.5H95M88 588.5H95M92 578.5H95M88 568.5H95M92 558.5H95M88 547.5H95M92 537.5H95M88 527.5H95M92 517.5H95M88 506.5H95M92 496.5H95M88 486.5H95M92 476.5H95M88 465.5H95M92 455.5H95M88 445.5H95M92 435.5H95M88 424.5H95M92 414.5H95M88 404.5H95M92 394.5H95M88 383.5H95M92 373.5H95M88 363.5H95M92 353.5H95M88 342.5H95M92 332.5H95M88 322.5H95M92 312.5H95M88 301.5H95M92 291.5H95M88 281.5H95M92 271.5H95M88 260.5H95M92 250.5H95M88 240.5H95M92 230.5H95M88 219.5H95M92 209.5H95M88 199.5H95M92 189.5H95M88 178.5H95M92 168.5H95M88 158.5H95" stroke="#555" stroke-width="1"/>
<g font-family='"Liberation Sans", sans-serif' font-size="9.5" fill="#2a2a2a"><text x="105.5" y="140.5" text-anchor="middle">-4</text><text x="126.5" y="140.5" text-anchor="middle">-2</text><text x="146.5" y="140.5" text-anchor="middle">0</text><text x="167.5" y="140.5" text-anchor="middle">2</text><text x="187.5" y="140.5" text-anchor="middle">4</text><text x="208.5" y="140.5" text-anchor="middle">6</text><text x="228.5" y="140.5" text-anchor="middle">8</text><text x="249.5" y="140.5" text-anchor="middle">10</text><text x="269.5" y="140.5" text-anchor="middle">12</text><text x="290.5" y="140.5" text-anchor="middle">14</text><text x="310.5" y="140.5" text-anchor="middle">16</text><text x="331.5" y="140.5" text-anchor="middle">18</text><text x="351.5" y="140.5" text-anchor="middle">20</text><text x="372.5" y="140.5" text-anchor="middle">22</text><text x="392.5" y="140.5" text-anchor="middle">24</text><text x="413.5" y="140.5" text-anchor="middle">26</text><text x="433.5" y="140.5" text-anchor="middle">28</text><text x="454.5" y="140.5" text-anchor="middle">30</text><text x="474.5" y="140.5" text-anchor="middle">32</text><text x="495.5" y="140.5" text-anchor="middle">34</text><text x="515.5" y="140.5" text-anchor="middle">36</text><text x="536.5" y="140.5" text-anchor="middle">38</text><text x="556.5" y="140.5" text-anchor="middle">40</text><text x="577.5" y="140.5" text-anchor="middle">42</text><text x="597.5" y="140.5" text-anchor="middle">44</text><text x="618.5" y="140.5" text-anchor="middle">46</text><text x="638.5" y="140.5" text-anchor="middle">48</text><text x="659.5" y="140.5" text-anchor="middle">50</text><text x="679.5" y="140.5" text-anchor="middle">52</text><text x="700.5" y="140.5" text-anchor="middle">54</text><text x="720.5" y="140.5" text-anchor="middle">56</text><text x="741.5" y="140.5" text-anchor="middle">58</text><text x="761.5" y="140.5" text-anchor="middle">60</text><text x="782.5" y="140.5" text-anchor="middle">62</text><text x="802.5" y="140.5" text-anchor="middle">64</text><text x="823.5" y="140.5" text-anchor="middle">66</text><text x="843.5" y="140.5" text-anchor="middle">68</text><text x="864.5" y="140.5" text-anchor="middle">70</text><text x="884.5" y="140.5" text-anchor="middle">72</text><text x="905.5" y="140.5" text-anchor="middle">74</text><text x="925.5" y="140.5" text-anchor="middle">76</text><text x="946.5" y="140.5" text-anchor="middle">78</text><text x="966.5" y="140.5" text-anchor="middle">80</text><text x="987.5" y="140.5" text-anchor="middle">82</text><text x="1007.5" y="140.5" text-anchor="middle">84</text><text x="1028.5" y="140.5" text-anchor="middle">86</text><text x="1048.5" y="140.5" text-anchor="middle">88</text><text x="1069.5" y="140.5" text-anchor="middle">90</text><text x="1089.5" y="140.5" text-anchor="middle">92</text><text x="1110.5" y="140.5" text-anchor="middle">94</text><text x="1130.5" y="140.5" text-anchor="middle">96</text></g>
<clipPath id="vrc"><rect x="72" y="155" width="23" height="576"/></clipPath>
<g clip-path="url(#vrc)" font-family='"Liberation Sans", sans-serif' font-size="9.5" fill="#111"><text x="0" y="0" text-anchor="middle" transform="translate(81.8 732.5) rotate(-90)">-10</text><text x="0" y="0" text-anchor="middle" transform="translate(81.8 711.5) rotate(-90)">-8</text><text x="0" y="0" text-anchor="middle" transform="translate(81.8 691.5) rotate(-90)">-6</text><text x="0" y="0" text-anchor="middle" transform="translate(81.8 670.5) rotate(-90)">-4</text><text x="0" y="0" text-anchor="middle" transform="translate(81.8 650.5) rotate(-90)">-2</text><text x="0" y="0" text-anchor="middle" transform="translate(81.8 629.5) rotate(-90)">0</text><text x="0" y="0" text-anchor="middle" transform="translate(81.8 609.5) rotate(-90)">2</text><text x="0" y="0" text-anchor="middle" transform="translate(81.8 588.5) rotate(-90)">4</text><text x="0" y="0" text-anchor="middle" transform="translate(81.8 568.5) rotate(-90)">6</text><text x="0" y="0" text-anchor="middle" transform="translate(81.8 547.5) rotate(-90)">8</text><text x="0" y="0" text-anchor="middle" transform="translate(81.8 527.5) rotate(-90)">10</text><text x="0" y="0" text-anchor="middle" transform="translate(81.8 506.5) rotate(-90)">12</text><text x="0" y="0" text-anchor="middle" transform="translate(81.8 486.5) rotate(-90)">14</text><text x="0" y="0" text-anchor="middle" transform="translate(81.8 465.5) rotate(-90)">16</text><text x="0" y="0" text-anchor="middle" transform="translate(81.8 445.5) rotate(-90)">18</text><text x="0" y="0" text-anchor="middle" transform="translate(81.8 424.5) rotate(-90)">20</text><text x="0" y="0" text-anchor="middle" transform="translate(81.8 404.5) rotate(-90)">22</text><text x="0" y="0" text-anchor="middle" transform="translate(81.8 383.5) rotate(-90)">24</text><text x="0" y="0" text-anchor="middle" transform="translate(81.8 363.5) rotate(-90)">26</text><text x="0" y="0" text-anchor="middle" transform="translate(81.8 342.5) rotate(-90)">28</text><text x="0" y="0" text-anchor="middle" transform="translate(81.8 322.5) rotate(-90)">30</text><text x="0" y="0" text-anchor="middle" transform="translate(81.8 301.5) rotate(-90)">32</text><text x="0" y="0" text-anchor="middle" transform="translate(81.8 281.5) rotate(-90)">34</text><text x="0" y="0" text-anchor="middle" transform="translate(81.8 260.5) rotate(-90)">36</text><text x="0" y="0" text-anchor="middle" transform="translate(81.8 240.5) rotate(-90)">38</text><text x="0" y="0" text-anchor="middle" transform="translate(81.8 219.5) rotate(-90)">40</text><text x="0" y="0" text-anchor="middle" transform="translate(81.8 199.5) rotate(-90)">42</text><text x="0" y="0" text-anchor="middle" transform="translate(81.8 178.5) rotate(-90)">44</text><text x="0" y="0" text-anchor="middle" transform="translate(81.8 158.5) rotate(-90)">46</text></g>
<path d="M381.6 144.8H393.2L387.4 150.8Z" fill="#000"/>
<path d="M85 488.5V499.5L91 494Z" fill="#000"/>
</svg>
<div class="abs" style="left:72px;top:748px;width:1082px;height:50px;background:#ececec;border-top:1px solid #c8c8c8"></div>
<div class="abs" style="left:72px;top:750px;width:1081px;height:21px;background:#fff;border-bottom:1px solid #c8c8c8"></div>
<div style="position:absolute;top:751px;font-size:13px;line-height:16px;color:#1818c8;white-space:nowrap;left:77px;"><i>Parancs:</i> new</div>
<div class="abs" style="left:1142px;top:750px;width:8px;height:17px;background:#808080;border-radius:4px"></div>
<div style="position:absolute;top:777.5px;font-size:13px;line-height:16px;color:#111;white-space:nowrap;left:73px;">Parancs:</div>
<div class="abs" style="left:128px;top:776px;width:998px;height:18px;background:#fff"></div>
<div class="abs" style="left:1127px;top:772.5px;width:26px;height:25px;background:linear-gradient(#f8f8f8,#e4e4e4);border:1px solid #b4b4b4"></div>
<svg class="abs" style="left:1132px;top:779px" width="16" height="12"><rect x="0.5" y="0.5" width="14" height="10" fill="#fff" stroke="#222"/><rect x="0" y="0" width="15" height="3" fill="#111"/></svg>
<div style="position:absolute;left:1154px;top:108px;width:1px;height:690px;background:#c4c4c4"></div>
<div style="position:absolute;left:1155px;top:108px;width:300px;height:22px;background:linear-gradient(#ececec,#dedede)"></div>
<svg style="position:absolute;left:1157px;top:110px;overflow:visible" width="16" height="16" viewBox="0 0 16 16" ><circle cx="7" cy="7" r="6.6" fill="#707070"/><path d="M4.3 4.3L9.7 9.7M9.7 4.3L4.3 9.7" stroke="#fff" stroke-width="1.8"/></svg>
<svg style="position:absolute;left:1175px;top:110px;overflow:visible" width="16" height="16" viewBox="0 0 16 16" ><circle cx="7" cy="7" r="6.6" fill="#707070"/><rect x="3.5" y="5.5" width="5" height="4.5" fill="none" stroke="#fff" stroke-width="1.1"/><path d="M5.5 5.5V3.8H10.5V8H8.5" fill="none" stroke="#fff" stroke-width="1.1"/></svg>
<div style="position:absolute;left:1222px;top:111px;width:200px;text-align:center;font-size:12px;line-height:16px;color:#2a2a2a">Réteglista</div>
<div style="position:absolute;left:1155px;top:130px;width:60.0px;height:26px;border:1.5px solid #b0b0b0;background:linear-gradient(#fbfbfb,#ececec)"></div>
<div style="position:absolute;left:1215px;top:130px;width:60.0px;height:26px;border:1.5px solid #b0b0b0;background:linear-gradient(#fbfbfb,#ececec)"></div>
<div style="position:absolute;left:1275.5px;top:130px;width:60.0px;height:26px;border:1.5px solid #b0b0b0;background:linear-gradient(#fbfbfb,#ececec)"></div>
<div style="position:absolute;left:1335.5px;top:130px;width:60.0px;height:26px;border:1.5px solid #b0b0b0;background:linear-gradient(#fbfbfb,#ececec)"></div>
<div style="position:absolute;left:1395.5px;top:130px;width:59.5px;height:26px;border:1.5px solid #b0b0b0;background:linear-gradient(#fbfbfb,#ececec)"></div>
<svg style="position:absolute;left:1176.5px;top:136.5px;overflow:visible" width="15" height="13" viewBox="0 0 15 13" ><path d="M0.3 6.2Q7.5 -3.2 14.7 6.2Q7.5 15.6 0.3 6.2Z" fill="#000"/><path d="M2.6 6.2Q7.5 0.8 12.4 6.2Q7.5 11.6 2.6 6.2Z" fill="#fff"/><circle cx="7.5" cy="6.2" r="3.7" fill="#000"/><circle cx="6.6" cy="5" r="1" fill="#fff"/></svg>
<svg style="position:absolute;left:1236.5px;top:136.5px;overflow:visible" width="15" height="13" viewBox="0 0 15 13" ><path d="M0.3 6.2Q7.5 -3.2 14.7 6.2Q7.5 15.6 0.3 6.2Z" fill="#b4b4b4"/><path d="M2.6 6.2Q7.5 0.8 12.4 6.2Q7.5 11.6 2.6 6.2Z" fill="#fff"/><circle cx="7.5" cy="6.2" r="3.7" fill="#b4b4b4"/><circle cx="6.6" cy="5" r="1" fill="#fff"/></svg>
<svg style="position:absolute;left:1296px;top:135px;overflow:visible" width="16" height="16" viewBox="0 0 16 16" ><path d="M8 2V14M2 8H14" stroke="#e00000" stroke-width="3.2"/></svg>
<svg style="position:absolute;left:1356px;top:135px;overflow:visible" width="16" height="16" viewBox="0 0 16 16" ><path d="M2 8H14" stroke="#e00000" stroke-width="3.2"/></svg>
<svg style="position:absolute;left:1417px;top:135px;overflow:visible" width="14" height="14" viewBox="0 0 14 14" ><g transform="scale(1.0 1.0)"><path d="M1 13L2 9.8L10.8 1.2L12.8 3.2L4 11.8Z" fill="#f0b030" stroke="#8a5a10" stroke-width="0.7" stroke-linejoin="round"/><path d="M10.8 1.2L12.8 3.2L13.6 2.4Q13.8 1.4 13.2 0.8Q12.6 0.2 11.6 0.4Z" fill="#e03020"/><path d="M1 13L1.6 11.2L2.8 12.4Z" fill="#333"/></g></svg>
<div style="position:absolute;left:1155px;top:156px;width:299px;height:642px;background:#fff"></div>
<div style="position:absolute;left:1161px;top:162.5px;width:16px;height:9px;background:#000;border:1px solid #000"></div>
<div style="position:absolute;left:1183px;top:158px;font-size:13.5px;line-height:18px;color:#111;white-space:nowrap">0</div>
<svg style="position:absolute;left:1415.5px;top:160.5px;overflow:visible" width="15" height="13" viewBox="0 0 15 13" ><path d="M0.3 6.2Q7.5 -3.2 14.7 6.2Q7.5 15.6 0.3 6.2Z" fill="#000"/><path d="M2.6 6.2Q7.5 0.8 12.4 6.2Q7.5 11.6 2.6 6.2Z" fill="#fff"/><circle cx="7.5" cy="6.2" r="3.7" fill="#000"/><circle cx="6.6" cy="5" r="1" fill="#fff"/></svg>
<svg style="position:absolute;left:1440px;top:160px;overflow:visible" width="11" height="14" viewBox="0 0 11 14" ><path d="M2.5 7V4.5Q2.5 1 5.5 1Q8.5 1 8.5 4.5V7" fill="none" stroke="#c4c4c4" stroke-width="1.3"/><rect x="0.5" y="6.5" width="10" height="7" fill="#c4c4c4"/></svg>
<div style="position:absolute;left:1161px;top:182.5px;width:16px;height:9px;background:#f00000;border:1px solid #000"></div>
<div style="position:absolute;left:1183px;top:178px;font-size:13.5px;line-height:18px;color:#111;white-space:nowrap">Központ</div>
<svg style="position:absolute;left:1415.5px;top:180.5px;overflow:visible" width="15" height="13" viewBox="0 0 15 13" ><path d="M0.3 6.2Q7.5 -3.2 14.7 6.2Q7.5 15.6 0.3 6.2Z" fill="#000"/><path d="M2.6 6.2Q7.5 0.8 12.4 6.2Q7.5 11.6 2.6 6.2Z" fill="#fff"/><circle cx="7.5" cy="6.2" r="3.7" fill="#000"/><circle cx="6.6" cy="5" r="1" fill="#fff"/></svg>
<svg style="position:absolute;left:1440px;top:180px;overflow:visible" width="11" height="14" viewBox="0 0 11 14" ><path d="M2.5 7V4.5Q2.5 1 5.5 1Q8.5 1 8.5 4.5V7" fill="none" stroke="#c4c4c4" stroke-width="1.3"/><rect x="0.5" y="6.5" width="10" height="7" fill="#c4c4c4"/></svg>
<div style="position:absolute;left:1161px;top:202.5px;width:16px;height:9px;background:#000;border:1px solid #000"></div>
<div style="position:absolute;left:1183px;top:198px;font-size:13.5px;line-height:18px;color:#111;white-space:nowrap">Szellőzés</div>
<svg style="position:absolute;left:1415.5px;top:200.5px;overflow:visible" width="15" height="13" viewBox="0 0 15 13" ><path d="M0.3 6.2Q7.5 -3.2 14.7 6.2Q7.5 15.6 0.3 6.2Z" fill="#000"/><path d="M2.6 6.2Q7.5 0.8 12.4 6.2Q7.5 11.6 2.6 6.2Z" fill="#fff"/><circle cx="7.5" cy="6.2" r="3.7" fill="#000"/><circle cx="6.6" cy="5" r="1" fill="#fff"/></svg>
<svg style="position:absolute;left:1440px;top:200px;overflow:visible" width="11" height="14" viewBox="0 0 11 14" ><path d="M2.5 7V4.5Q2.5 1 5.5 1Q8.5 1 8.5 4.5V7" fill="none" stroke="#c4c4c4" stroke-width="1.3"/><rect x="0.5" y="6.5" width="10" height="7" fill="#c4c4c4"/></svg>
<div style="position:absolute;left:1161px;top:222.5px;width:16px;height:9px;background:#a4a4a8;border:1px solid #000"></div>
<div style="position:absolute;left:1183px;top:218px;font-size:13.5px;line-height:18px;color:#111;white-space:nowrap">Vissza</div>
<svg style="position:absolute;left:1415.5px;top:220.5px;overflow:visible" width="15" height="13" viewBox="0 0 15 13" ><path d="M0.3 6.2Q7.5 -3.2 14.7 6.2Q7.5 15.6 0.3 6.2Z" fill="#000"/><path d="M2.6 6.2Q7.5 0.8 12.4 6.2Q7.5 11.6 2.6 6.2Z" fill="#fff"/><circle cx="7.5" cy="6.2" r="3.7" fill="#000"/><circle cx="6.6" cy="5" r="1" fill="#fff"/></svg>
<svg style="position:absolute;left:1440px;top:220px;overflow:visible" width="11" height="14" viewBox="0 0 11 14" ><path d="M2.5 7V4.5Q2.5 1 5.5 1Q8.5 1 8.5 4.5V7" fill="none" stroke="#c4c4c4" stroke-width="1.3"/><rect x="0.5" y="6.5" width="10" height="7" fill="#c4c4c4"/></svg>
<svg style="position:absolute;left:1394px;top:220px;overflow:visible" width="14" height="14" viewBox="0 0 14 14" ><g transform="scale(1.0 1.0)"><path d="M1 13L2 9.8L10.8 1.2L12.8 3.2L4 11.8Z" fill="#f0b030" stroke="#8a5a10" stroke-width="0.7" stroke-linejoin="round"/><path d="M10.8 1.2L12.8 3.2L13.6 2.4Q13.8 1.4 13.2 0.8Q12.6 0.2 11.6 0.4Z" fill="#e03020"/><path d="M1 13L1.6 11.2L2.8 12.4Z" fill="#333"/></g></svg>
<div style="position:absolute;left:1455px;top:108px;width:45px;height:690px;background:linear-gradient(90deg,#eeeeee,#dcdcdc 55%,#c2c2c2)"></div>
<div style="position:absolute;left:1455px;top:108px;width:1px;height:690px;background:#d0d0d0"></div>
<svg style="position:absolute;left:1462px;top:115.5px;overflow:visible" width="30" height="2" viewBox="0 0 30 2" ><rect x="0" y="0" width="2" height="2" fill="#a4a4a4"/><rect x="6" y="0" width="2" height="2" fill="#a4a4a4"/><rect x="12" y="0" width="2" height="2" fill="#a4a4a4"/><rect x="18" y="0" width="2" height="2" fill="#a4a4a4"/><rect x="24" y="0" width="2" height="2" fill="#a4a4a4"/></svg>
<div style="position:absolute;left:1456.5px;top:120.5px;width:41.5px;height:43px;background:#b4b4b4;border-radius:6px"></div><svg style="position:absolute;left:1463px;top:127px;overflow:visible" width="28" height="28" viewBox="0 0 28 28" ><rect x="0.5" y="0.5" width="27" height="27" fill="#fff" stroke="#222" stroke-width="1"/><rect x="0" y="0" width="28" height="5" fill="#000"/><rect x="1.5" y="1" width="3.5" height="3.5" fill="#fff"/><path d="M7 10L14 8V20L7 22Z" fill="#c8c8c8" stroke="#444" stroke-width="0.8"/><path d="M10 9L19 7V19L10 21Z" fill="#e8e8e8" stroke="#444" stroke-width="0.8"/><path d="M12 8.5L21 7V18L12 20Z" fill="#fff" stroke="#444" stroke-width="0.8"/><path d="M14 17L18 10L19 17Z" fill="none" stroke="#e04040" stroke-width="0.9"/></svg>
<svg style="position:absolute;left:1463px;top:174px;overflow:visible" width="28" height="28" viewBox="0 0 28 28" ><rect x="0.5" y="0.5" width="27" height="27" fill="#fff" stroke="#222" stroke-width="1"/><rect x="0" y="0" width="28" height="5" fill="#000"/><rect x="1.5" y="1" width="3.5" height="3.5" fill="#fff"/><rect x="7" y="10" width="10" height="8" fill="#fdf0c0" stroke="#555" stroke-width="0.8"/><circle cx="15.5" cy="18" r="4.5" fill="#fdf0c0" stroke="#555" stroke-width="0.8"/></svg>
<svg style="position:absolute;left:1463px;top:220px;overflow:visible" width="28" height="28" viewBox="0 0 28 28" ><rect x="0.5" y="0.5" width="27" height="27" fill="#fff" stroke="#222" stroke-width="1"/><rect x="0" y="0" width="28" height="5" fill="#000"/><rect x="1.5" y="1" width="3.5" height="3.5" fill="#fff"/><rect x="6" y="10" width="16" height="12" rx="2" fill="#f4f4f4" stroke="#b8c8e0" stroke-width="0.9"/></svg>
<svg style="position:absolute;left:1458px;top:260.5px;overflow:visible" width="40" height="2" viewBox="0 0 40 2" ><rect x="0" y="0" width="2" height="2" fill="#8a8a8a"/><rect x="4" y="0" width="2" height="2" fill="#8a8a8a"/><rect x="8" y="0" width="2" height="2" fill="#8a8a8a"/><rect x="12" y="0" width="2" height="2" fill="#8a8a8a"/><rect x="16" y="0" width="2" height="2" fill="#8a8a8a"/><rect x="20" y="0" width="2" height="2" fill="#8a8a8a"/><rect x="24" y="0" width="2" height="2" fill="#8a8a8a"/><rect x="28" y="0" width="2" height="2" fill="#8a8a8a"/><rect x="32" y="0" width="2" height="2" fill="#8a8a8a"/><rect x="36" y="0" width="2" height="2" fill="#8a8a8a"/></svg>
<svg style="position:absolute;left:1463px;top:276px;overflow:visible" width="28" height="28" viewBox="0 0 28 28" ><rect x="0.5" y="0.5" width="27" height="27" fill="#fff" stroke="#222" stroke-width="1"/><rect x="0" y="0" width="28" height="5" fill="#000"/><rect x="1.5" y="1" width="3.5" height="3.5" fill="#fff"/><rect x="4" y="9" width="4" height="3" fill="#000"/><rect x="10" y="8.5" width="14" height="4" fill="#fff" stroke="#333" stroke-width="0.7"/><rect x="4" y="15" width="4" height="3" fill="#000"/><rect x="10" y="14.5" width="14" height="4" fill="#fff" stroke="#333" stroke-width="0.7"/><rect x="4" y="21" width="4" height="3" fill="#000"/><rect x="10" y="20.5" width="14" height="4" fill="#fff" stroke="#333" stroke-width="0.7"/></svg>
<svg style="position:absolute;left:1463px;top:322px;overflow:visible" width="28" height="28" viewBox="0 0 28 28" ><rect x="0.5" y="0.5" width="27" height="27" fill="#fff" stroke="#222" stroke-width="1"/><rect x="0" y="0" width="28" height="5" fill="#000"/><rect x="1.5" y="1" width="3.5" height="3.5" fill="#fff"/><path d="M6 10H22L16 16V24L12 22V16Z" fill="#888" stroke="#444" stroke-width="0.7"/><ellipse cx="14" cy="10.5" rx="8" ry="2" fill="#bbb" stroke="#444" stroke-width="0.6"/></svg>
<svg style="position:absolute;left:1463px;top:368px;overflow:visible" width="28" height="28" viewBox="0 0 28 28" ><rect x="0.5" y="0.5" width="27" height="27" fill="#fff" stroke="#222" stroke-width="1"/><rect x="0" y="0" width="28" height="5" fill="#000"/><rect x="1.5" y="1" width="3.5" height="3.5" fill="#fff"/><path d="M6 9L12 13V21L6 25Z" fill="#fff" stroke="#222" stroke-width="0.9"/><rect x="12" y="13" width="10" height="8" fill="#999" stroke="#444" stroke-width="0.7"/><path d="M4 17H24" stroke="#f08080" stroke-width="0.6" stroke-dasharray="1.5 1"/></svg>
<svg style="position:absolute;left:1458px;top:408.5px;overflow:visible" width="40" height="2" viewBox="0 0 40 2" ><rect x="0" y="0" width="2" height="2" fill="#8a8a8a"/><rect x="4" y="0" width="2" height="2" fill="#8a8a8a"/><rect x="8" y="0" width="2" height="2" fill="#8a8a8a"/><rect x="12" y="0" width="2" height="2" fill="#8a8a8a"/><rect x="16" y="0" width="2" height="2" fill="#8a8a8a"/><rect x="20" y="0" width="2" height="2" fill="#8a8a8a"/><rect x="24" y="0" width="2" height="2" fill="#8a8a8a"/><rect x="28" y="0" width="2" height="2" fill="#8a8a8a"/><rect x="32" y="0" width="2" height="2" fill="#8a8a8a"/><rect x="36" y="0" width="2" height="2" fill="#8a8a8a"/></svg>
<div style="position:absolute;left:1456.5px;top:417.0px;width:41.5px;height:43px;background:#b4b4b4;border-radius:6px"></div><svg style="position:absolute;left:1463px;top:423.5px;overflow:visible" width="28" height="28" viewBox="0 0 28 28" ><rect x="0.5" y="0.5" width="27" height="27" fill="#fff" stroke="#222" stroke-width="1"/><rect x="0" y="0" width="28" height="5" fill="#000"/><rect x="1.5" y="1" width="3.5" height="3.5" fill="#fff"/><path d="M3 9H15" stroke="#888" stroke-width="0.9"/><path d="M3 12H18" stroke="#888" stroke-width="0.9"/><path d="M3 15H15" stroke="#888" stroke-width="0.9"/><path d="M3 18H18" stroke="#888" stroke-width="0.9"/><path d="M0 22.5H28" stroke="#333" stroke-width="0.8"/><path d="M3 25H6M10 25H25" stroke="#555" stroke-width="1"/></svg>
<svg style="position:absolute;left:1463px;top:471.5px;overflow:visible" width="28" height="28" viewBox="0 0 28 28" ><rect x="0.5" y="0.5" width="27" height="27" fill="#fff" stroke="#222" stroke-width="1"/><rect x="0" y="0" width="28" height="5" fill="#000"/><rect x="1.5" y="1" width="3.5" height="3.5" fill="#fff"/><rect x="8" y="9" width="13" height="15" rx="1" fill="#c8841e" stroke="#8e5a10" stroke-width="0.6"/><rect x="9.5" y="10.5" width="10" height="12" fill="#f8f8f8"/><rect x="11.5" y="7.5" width="6" height="3" fill="#999"/></svg>
<div style="position:absolute;left:0px;top:798px;width:1500px;height:46px;background:#dcdcdc"></div>
<div style="position:absolute;left:2px;top:805px;font-size:10px;line-height:14px;color:#1a1a1a;white-space:nowrap;letter-spacing:0px">23.4878,13.2195</div>
<div style="position:absolute;left:2px;top:825px;font-size:10px;line-height:14px;color:#1a1a1a;white-space:nowrap;letter-spacing:0px">@23.4878,13.2195</div>
<div style="position:absolute;left:253px;top:802px;width:1px;height:39px;background:#888"></div>
<div style="position:absolute;left:256px;top:805px;font-size:10px;line-height:14px;color:#1a1a1a;white-space:nowrap;letter-spacing:0px">26.9524&lt;29.37°</div>
<div style="position:absolute;left:256px;top:825px;font-size:10px;line-height:14px;color:#1a1a1a;white-space:nowrap;letter-spacing:0px">@26.9524&lt;29.37°</div>
<svg style="position:absolute;left:506.0px;top:818px;overflow:visible" width="7" height="7" viewBox="0 0 7 7" ><circle cx="3.5" cy="3.5" r="3" fill="#c4c4c4"/></svg>
<svg style="position:absolute;left:940.0px;top:818px;overflow:visible" width="7" height="7" viewBox="0 0 7 7" ><circle cx="3.5" cy="3.5" r="3" fill="#c4c4c4"/></svg>
<svg style="position:absolute;left:1269.0px;top:818px;overflow:visible" width="7" height="7" viewBox="0 0 7 7" ><circle cx="3.5" cy="3.5" r="3" fill="#c4c4c4"/></svg>
<div style="position:absolute;right:802px;top:809.5px;font-size:9.6px;line-height:14px;color:#1a1a1a;white-space:nowrap;text-align:right;letter-spacing:0.3px">Egység vagy régió kiválasztása</div>
<div style="position:absolute;right:802px;top:821px;font-size:9.6px;line-height:14px;color:#1a1a1a;white-space:nowrap;text-align:right;letter-spacing:0.3px">Entitás vagy hivatkozás áthelyezése</div>
<svg style="position:absolute;left:716px;top:805px;overflow:visible" width="20" height="32" viewBox="0 0 20 32" ><path d="M10 1Q18.5 1 18.5 12V21Q18.5 30.5 10 30.5Q1.5 30.5 1.5 21V12Q1.5 1 10 1Z" fill="#fff" stroke="#333" stroke-width="0.9"/><path d="M1.5 13H18.5M10 1V13" stroke="#333" stroke-width="0.8"/><rect x="8.3" y="3.5" width="3.4" height="7" rx="1.7" fill="#fff" stroke="#333" stroke-width="0.8"/></svg>
<div style="position:absolute;left:949px;top:810px;font-size:9.6px;line-height:14px;color:#1a1a1a;white-space:nowrap;letter-spacing:0.3px">Kiválasztott szervezetek:</div>
<div style="position:absolute;left:949px;top:821.5px;font-size:9.6px;line-height:14px;color:#1a1a1a;white-space:nowrap;letter-spacing:0.3px">24 Entitások a "0" rétegen.</div>
</body></html>
